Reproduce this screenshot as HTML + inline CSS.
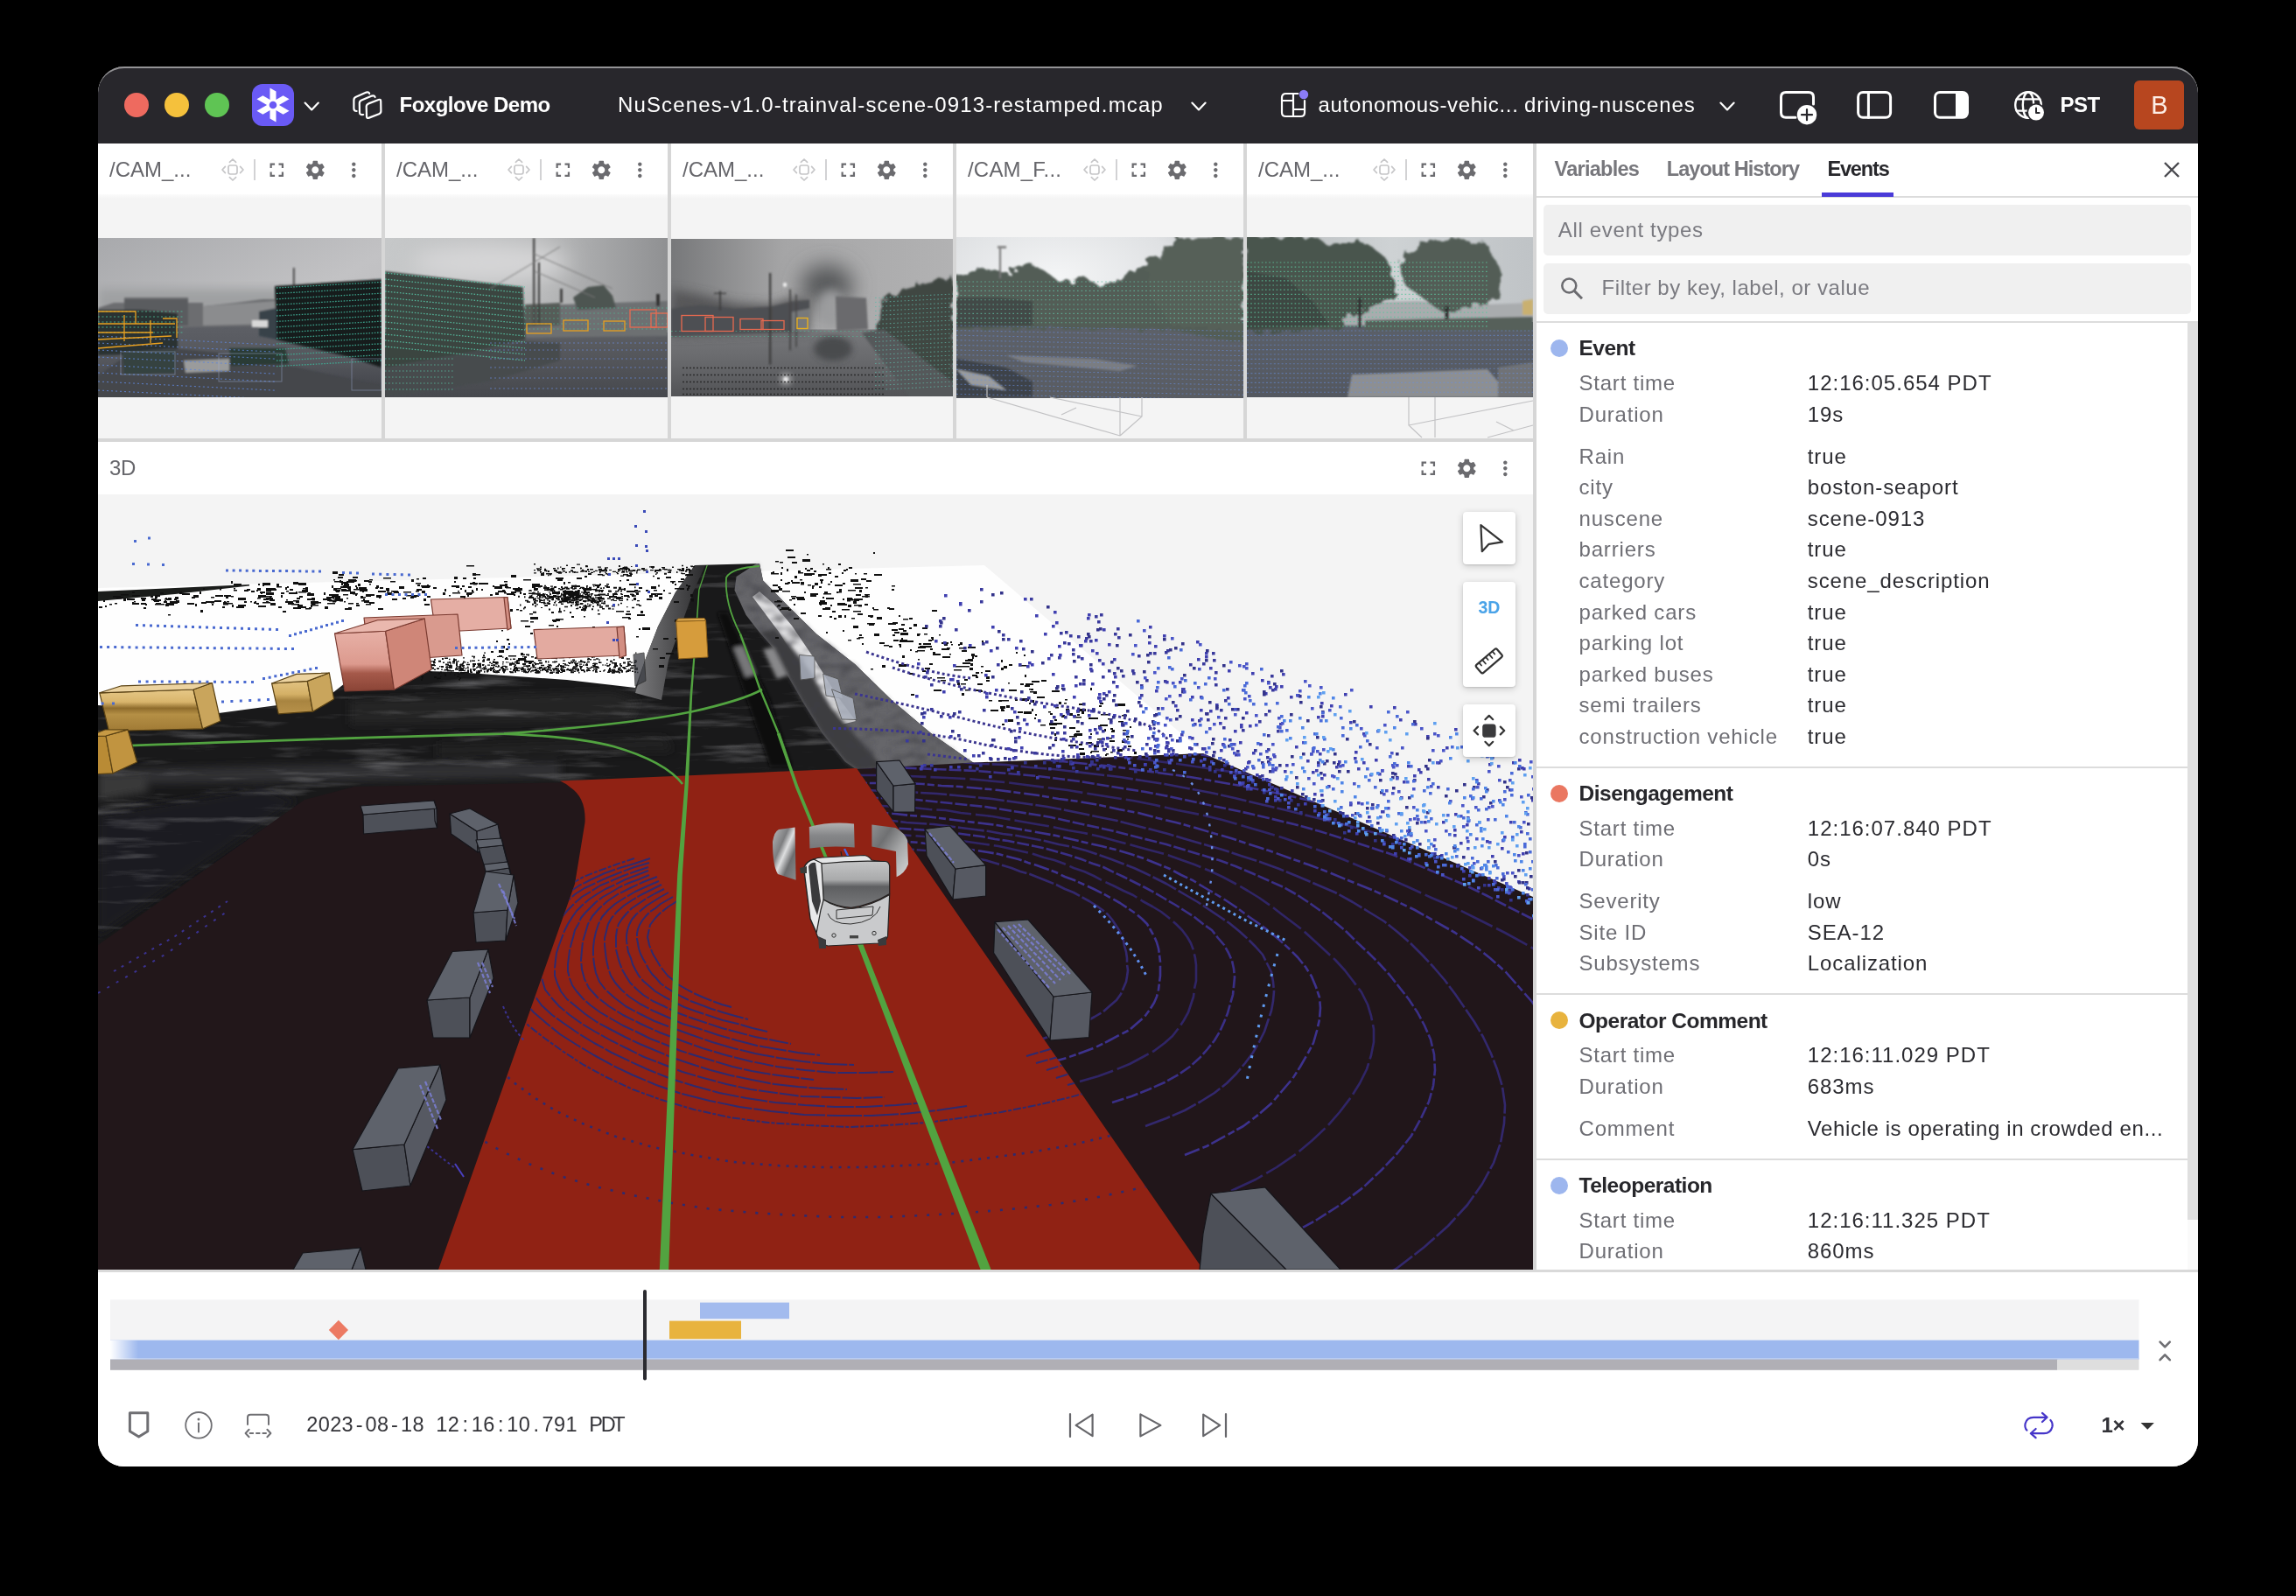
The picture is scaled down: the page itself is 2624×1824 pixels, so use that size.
<!DOCTYPE html>
<html><head><meta charset="utf-8"><title>Foxglove</title>
<style>
*{box-sizing:border-box;margin:0;padding:0}
html,body{width:2624px;height:1824px;background:#000;overflow:hidden}
body{font-family:"Liberation Sans",sans-serif;position:relative;color:#27272b}
.abs{position:absolute}
.t{position:absolute;white-space:pre;line-height:1}
#win{will-change:transform;position:absolute;left:112px;top:76px;width:2400px;height:1600px;border-radius:30px;background:#fff;overflow:hidden}
#win:after{content:"";position:absolute;left:0;top:0;right:0;height:40px;border-radius:30px 30px 0 0;border-top:2px solid rgba(255,255,255,.5);pointer-events:none}
#tb{position:absolute;left:0;top:0;width:2400px;height:88px;background:#28272c}
svg{position:absolute;overflow:visible}
.w{color:#fff}
.hdr{position:absolute;background:#fff;height:58px}
.hdr:after{content:"";position:absolute;left:0;right:0;top:100%;height:5px;background:linear-gradient(#fbfbfb,#f4f4f4)}
.hdr .t{top:17.5px;font-size:24px;color:#66666b}
.vdiv{position:absolute;background:#d6d6d6}
.k{color:#6e6e74}.v{color:#2b2b30}
.row{position:absolute;left:0;font-size:24px;white-space:pre;line-height:1}
.mono i{display:inline-block;width:13.48px;text-align:center;font-style:normal}
</style></head><body>
<div id="win">
<!-- TITLE BAR (win-relative coords: x-112, y-76) -->
<div id="tb">
 <div class="abs" style="left:30px;top:30px;width:28px;height:28px;border-radius:50%;background:#ee6a5f"></div>
 <div class="abs" style="left:76px;top:30px;width:28px;height:28px;border-radius:50%;background:#f5c13c"></div>
 <div class="abs" style="left:122px;top:30px;width:28px;height:28px;border-radius:50%;background:#5fc454"></div>
 <!-- logo -->
 <div class="abs" style="left:176px;top:20px;width:48px;height:48px;border-radius:12px;background:#6a5af5"></div>
 <svg style="left:176px;top:20px" width="48" height="48" viewBox="-24 -24 48 48">
  <g fill="#fff">
   <polygon id="arm" points="-3.5,-19.4 3.5,-15.4 3.5,-2 -3.5,-2"/>
   <use href="#arm" transform="rotate(180)"/><use href="#arm" transform="rotate(300)"/><use href="#arm" transform="rotate(120)"/>
   <use href="#arm" transform="scale(-1,1) rotate(300)"/><use href="#arm" transform="scale(-1,1) rotate(120)"/>
   <circle r="7"/>
  </g>
  <circle r="4.3" fill="#6a5af5"/>
 </svg>
 <svg style="left:0;top:0" width="2400" height="88" viewBox="112 76 2400 88" fill="none" stroke="#fff" stroke-width="2.2" stroke-linecap="round" stroke-linejoin="round">
  <!-- chevrons -->
  <polyline points="348.6,117.6 356.2,125.4 363.8,117.6"/>
  <polyline points="1362.4,117.6 1370,125.4 1377.6,117.6"/>
  <polyline points="1966.4,117.6 1974,125.4 1981.6,117.6"/>
  <!-- stack icon -->
  <path d="M421.2,118.4 L432.6,114 Q435.2,113 435.2,115.8 L435.4,127 Q435.4,129.3 433.2,130.2 L421.8,134.6 Q419,135.6 419,133 L418.7,121.8 Q418.7,119.4 421.2,118.4 Z"/>
  <path d="M415.2,131 Q411,131.6 411,128.4 L410.8,118.2 Q410.8,115.6 413.2,114.6 L425,109.6 Q427.8,108.6 428.6,111"/>
  <path d="M407.6,127 Q404.4,127 404.4,124 L404.4,114.4 Q404.4,111.8 406.8,110.8 L418.6,105.6 Q421.4,104.6 422.2,107"/>
  <!-- layout icon -->
  <path d="M1483.4,107 L1469.6,107 Q1465,107 1465,111.6 L1465,128.4 Q1465,133 1469.6,133 L1486.4,133 Q1491,133 1491,128.4 L1491,115"/>
  <path d="M1478,107 V133 M1465,115 H1478 M1478,125 H1491"/>
  <circle cx="1490" cy="108" r="5.2" fill="#8b7cf8" stroke="none"/>
  <!-- add panel -->
  <path d="M2052,134.2 L2041,134.2 Q2035.5,134.2 2035.5,128.7 L2035.5,111 Q2035.5,105.5 2041,105.5 L2067,105.5 Q2072.5,105.5 2072.5,111 L2072.5,119" stroke-width="3"/>
  <circle cx="2065" cy="131.2" r="11.2" fill="#fff" stroke="none"/>
  <path d="M2059,131.2 H2071 M2065,125.2 V137.2" stroke="#28272c" stroke-width="2.2"/>
  <!-- left sidebar -->
  <rect x="2123.6" y="105.5" width="37" height="28.7" rx="5.5" stroke-width="3"/>
  <path d="M2135.4,105.5 V134.2" stroke-width="3"/>
  <!-- right sidebar -->
  <rect x="2211.5" y="105.5" width="37" height="28.7" rx="5.5" stroke-width="3"/>
  <path d="M2235,105 H2243 Q2249,105 2249,111 V128.6 Q2249,134.6 2243,134.6 H2235 Z" fill="#fff" stroke="none"/>
  <!-- globe -->
  <g stroke-width="2.4">
  <circle cx="2318" cy="120" r="14.8"/>
  <ellipse cx="2318" cy="120" rx="6.2" ry="14.8"/>
  <path d="M2304.6,113.4 H2331.4 M2304.6,126.6 H2331.4"/>
  </g>
  <circle cx="2327" cy="128.6" r="10.6" fill="#28272c" stroke="none"/>
  <circle cx="2327" cy="128.6" r="9" fill="#fff" stroke="none"/>
  <path d="M2327,123.6 V129 H2330.6" stroke="#28272c" stroke-width="2"/>
 </svg>
 <div class="t w" style="left:344.5px;top:16.5px;font-size:24px;font-weight:700;letter-spacing:-.5px;top:31.5px">Foxglove Demo</div>
 <div class="t w" style="left:594px;top:31.5px;font-size:24px;letter-spacing:1.13px">NuScenes-v1.0-trainval-scene-0913-restamped.mcap</div>
 <div class="t w" style="left:1394.5px;top:31.5px;font-size:24px;letter-spacing:.68px">autonomous-vehic...</div>
 <div class="t w" style="left:1630px;top:31.5px;font-size:24px;letter-spacing:.88px">driving-nuscenes</div>
 <div class="t w" style="left:2242.6px;top:31.5px;font-size:24px;font-weight:700;letter-spacing:-.5px">PST</div>
 <div class="abs" style="left:2327px;top:16px;width:57px;height:56px;border-radius:6px;background:#b7461f"></div>
 <div class="t" style="left:2346.2px;top:30px;font-size:29px;color:#fdeee6">B</div>
</div>
<!-- PANEL HEADERS -->
<div class="abs" style="left:0px;top:88px;width:324px;height:337px;background:#f4f4f4"></div>
<div class="hdr" style="left:0px;top:88px;width:324px"><div class="t" style="left:13px;letter-spacing:0px">/CAM_...</div></div>
<svg style="left:141px;top:105px" width="26" height="26" viewBox="-13 -13 26 26" fill="none" stroke="#c6c6c8" stroke-width="1.7" stroke-linecap="round" stroke-linejoin="round"><rect x="-5" y="-5" width="10" height="10" rx="2.2"/><polyline points="-8.6,-3.6 -12,0 -8.6,3.6"/><polyline points="8.6,-3.6 12,0 8.6,3.6"/><polyline points="-3.6,-8.6 0,-12 3.6,-8.6"/><polyline points="-3.6,8.6 0,12 3.6,8.6"/></svg>
<div class="abs" style="left:178px;top:106px;width:2px;height:24px;background:#d2d2d4"></div>
<svg style="left:190.7px;top:104.7px" width="26.6" height="26.6" viewBox="0 0 24 24"><path fill="#6b6b6f" d="M7 14H5v5h5v-2H7v-3zm-2-4h2V7h3V5H5v5zm12 7h-3v2h5v-5h-2v3zM14 5v2h3v3h2V5h-5z"/></svg>
<svg style="left:234.7px;top:104.7px" width="26.6" height="26.6" viewBox="0 0 24 24"><path fill="#6b6b6f" d="M19.14 12.94c.04-.3.06-.61.06-.94 0-.32-.02-.64-.07-.94l2.03-1.58c.18-.14.23-.41.12-.61l-1.92-3.32c-.12-.22-.37-.29-.59-.22l-2.39.96c-.5-.38-1.03-.7-1.62-.94l-.36-2.54c-.04-.24-.24-.41-.48-.41h-3.84c-.24 0-.43.17-.47.41l-.36 2.54c-.59.24-1.13.57-1.62.94l-2.39-.96c-.22-.08-.47 0-.59.22L2.74 8.87c-.12.21-.08.47.12.61l2.03 1.58c-.05.3-.09.63-.09.94s.02.64.07.94l-2.03 1.58c-.18.14-.23.41-.12.61l1.92 3.32c.12.22.37.29.59.22l2.39-.96c.5.38 1.03.7 1.62.94l.36 2.54c.05.24.24.41.48.41h3.84c.24 0 .44-.17.47-.41l.36-2.54c.59-.24 1.13-.56 1.62-.94l2.39.96c.22.08.47 0 .59-.22l1.92-3.32c.12-.22.07-.47-.12-.61l-2.01-1.58zM12 15.6c-1.98 0-3.6-1.62-3.6-3.6s1.62-3.6 3.6-3.6 3.6 1.62 3.6 3.6-1.62 3.6-3.6 3.6z"/></svg>
<svg style="left:278.7px;top:104.7px" width="26.6" height="26.6" viewBox="0 0 24 24"><path fill="#6b6b6f" d="M12 8c1.1 0 2-.9 2-2s-.9-2-2-2-2 .9-2 2 .9 2 2 2zm0 2c-1.1 0-2 .9-2 2s.9 2 2 2 2-.9 2-2-.9-2-2-2zm0 6c-1.1 0-2 .9-2 2s.9 2 2 2 2-.9 2-2-.9-2-2-2z"/></svg>
<div class="abs" style="left:328px;top:88px;width:323px;height:337px;background:#f4f4f4"></div>
<div class="hdr" style="left:328px;top:88px;width:323px"><div class="t" style="left:13px;letter-spacing:0px">/CAM_...</div></div>
<svg style="left:468px;top:105px" width="26" height="26" viewBox="-13 -13 26 26" fill="none" stroke="#c6c6c8" stroke-width="1.7" stroke-linecap="round" stroke-linejoin="round"><rect x="-5" y="-5" width="10" height="10" rx="2.2"/><polyline points="-8.6,-3.6 -12,0 -8.6,3.6"/><polyline points="8.6,-3.6 12,0 8.6,3.6"/><polyline points="-3.6,-8.6 0,-12 3.6,-8.6"/><polyline points="-3.6,8.6 0,12 3.6,8.6"/></svg>
<div class="abs" style="left:505px;top:106px;width:2px;height:24px;background:#d2d2d4"></div>
<svg style="left:517.7px;top:104.7px" width="26.6" height="26.6" viewBox="0 0 24 24"><path fill="#6b6b6f" d="M7 14H5v5h5v-2H7v-3zm-2-4h2V7h3V5H5v5zm12 7h-3v2h5v-5h-2v3zM14 5v2h3v3h2V5h-5z"/></svg>
<svg style="left:561.7px;top:104.7px" width="26.6" height="26.6" viewBox="0 0 24 24"><path fill="#6b6b6f" d="M19.14 12.94c.04-.3.06-.61.06-.94 0-.32-.02-.64-.07-.94l2.03-1.58c.18-.14.23-.41.12-.61l-1.92-3.32c-.12-.22-.37-.29-.59-.22l-2.39.96c-.5-.38-1.03-.7-1.62-.94l-.36-2.54c-.04-.24-.24-.41-.48-.41h-3.84c-.24 0-.43.17-.47.41l-.36 2.54c-.59.24-1.13.57-1.62.94l-2.39-.96c-.22-.08-.47 0-.59.22L2.74 8.87c-.12.21-.08.47.12.61l2.03 1.58c-.05.3-.09.63-.09.94s.02.64.07.94l-2.03 1.58c-.18.14-.23.41-.12.61l1.92 3.32c.12.22.37.29.59.22l2.39-.96c.5.38 1.03.7 1.62.94l.36 2.54c.05.24.24.41.48.41h3.84c.24 0 .44-.17.47-.41l.36-2.54c.59-.24 1.13-.56 1.62-.94l2.39.96c.22.08.47 0 .59-.22l1.92-3.32c.12-.22.07-.47-.12-.61l-2.01-1.58zM12 15.6c-1.98 0-3.6-1.62-3.6-3.6s1.62-3.6 3.6-3.6 3.6 1.62 3.6 3.6-1.62 3.6-3.6 3.6z"/></svg>
<svg style="left:605.7px;top:104.7px" width="26.6" height="26.6" viewBox="0 0 24 24"><path fill="#6b6b6f" d="M12 8c1.1 0 2-.9 2-2s-.9-2-2-2-2 .9-2 2 .9 2 2 2zm0 2c-1.1 0-2 .9-2 2s.9 2 2 2 2-.9 2-2-.9-2-2-2zm0 6c-1.1 0-2 .9-2 2s.9 2 2 2 2-.9 2-2-.9-2-2-2z"/></svg>
<div class="abs" style="left:655px;top:88px;width:322px;height:337px;background:#f4f4f4"></div>
<div class="hdr" style="left:655px;top:88px;width:322px"><div class="t" style="left:13px;letter-spacing:0px">/CAM_...</div></div>
<svg style="left:794px;top:105px" width="26" height="26" viewBox="-13 -13 26 26" fill="none" stroke="#c6c6c8" stroke-width="1.7" stroke-linecap="round" stroke-linejoin="round"><rect x="-5" y="-5" width="10" height="10" rx="2.2"/><polyline points="-8.6,-3.6 -12,0 -8.6,3.6"/><polyline points="8.6,-3.6 12,0 8.6,3.6"/><polyline points="-3.6,-8.6 0,-12 3.6,-8.6"/><polyline points="-3.6,8.6 0,12 3.6,8.6"/></svg>
<div class="abs" style="left:831px;top:106px;width:2px;height:24px;background:#d2d2d4"></div>
<svg style="left:843.7px;top:104.7px" width="26.6" height="26.6" viewBox="0 0 24 24"><path fill="#6b6b6f" d="M7 14H5v5h5v-2H7v-3zm-2-4h2V7h3V5H5v5zm12 7h-3v2h5v-5h-2v3zM14 5v2h3v3h2V5h-5z"/></svg>
<svg style="left:887.7px;top:104.7px" width="26.6" height="26.6" viewBox="0 0 24 24"><path fill="#6b6b6f" d="M19.14 12.94c.04-.3.06-.61.06-.94 0-.32-.02-.64-.07-.94l2.03-1.58c.18-.14.23-.41.12-.61l-1.92-3.32c-.12-.22-.37-.29-.59-.22l-2.39.96c-.5-.38-1.03-.7-1.62-.94l-.36-2.54c-.04-.24-.24-.41-.48-.41h-3.84c-.24 0-.43.17-.47.41l-.36 2.54c-.59.24-1.13.57-1.62.94l-2.39-.96c-.22-.08-.47 0-.59.22L2.74 8.87c-.12.21-.08.47.12.61l2.03 1.58c-.05.3-.09.63-.09.94s.02.64.07.94l-2.03 1.58c-.18.14-.23.41-.12.61l1.92 3.32c.12.22.37.29.59.22l2.39-.96c.5.38 1.03.7 1.62.94l.36 2.54c.05.24.24.41.48.41h3.84c.24 0 .44-.17.47-.41l.36-2.54c.59-.24 1.13-.56 1.62-.94l2.39.96c.22.08.47 0 .59-.22l1.92-3.32c.12-.22.07-.47-.12-.61l-2.01-1.58zM12 15.6c-1.98 0-3.6-1.62-3.6-3.6s1.62-3.6 3.6-3.6 3.6 1.62 3.6 3.6-1.62 3.6-3.6 3.6z"/></svg>
<svg style="left:931.7px;top:104.7px" width="26.6" height="26.6" viewBox="0 0 24 24"><path fill="#6b6b6f" d="M12 8c1.1 0 2-.9 2-2s-.9-2-2-2-2 .9-2 2 .9 2 2 2zm0 2c-1.1 0-2 .9-2 2s.9 2 2 2 2-.9 2-2-.9-2-2-2zm0 6c-1.1 0-2 .9-2 2s.9 2 2 2 2-.9 2-2-.9-2-2-2z"/></svg>
<div class="abs" style="left:981px;top:88px;width:328px;height:337px;background:#f4f4f4"></div>
<div class="hdr" style="left:981px;top:88px;width:328px"><div class="t" style="left:13px;letter-spacing:0.2px">/CAM_F...</div></div>
<svg style="left:1126px;top:105px" width="26" height="26" viewBox="-13 -13 26 26" fill="none" stroke="#c6c6c8" stroke-width="1.7" stroke-linecap="round" stroke-linejoin="round"><rect x="-5" y="-5" width="10" height="10" rx="2.2"/><polyline points="-8.6,-3.6 -12,0 -8.6,3.6"/><polyline points="8.6,-3.6 12,0 8.6,3.6"/><polyline points="-3.6,-8.6 0,-12 3.6,-8.6"/><polyline points="-3.6,8.6 0,12 3.6,8.6"/></svg>
<div class="abs" style="left:1163px;top:106px;width:2px;height:24px;background:#d2d2d4"></div>
<svg style="left:1175.7px;top:104.7px" width="26.6" height="26.6" viewBox="0 0 24 24"><path fill="#6b6b6f" d="M7 14H5v5h5v-2H7v-3zm-2-4h2V7h3V5H5v5zm12 7h-3v2h5v-5h-2v3zM14 5v2h3v3h2V5h-5z"/></svg>
<svg style="left:1219.7px;top:104.7px" width="26.6" height="26.6" viewBox="0 0 24 24"><path fill="#6b6b6f" d="M19.14 12.94c.04-.3.06-.61.06-.94 0-.32-.02-.64-.07-.94l2.03-1.58c.18-.14.23-.41.12-.61l-1.92-3.32c-.12-.22-.37-.29-.59-.22l-2.39.96c-.5-.38-1.03-.7-1.62-.94l-.36-2.54c-.04-.24-.24-.41-.48-.41h-3.84c-.24 0-.43.17-.47.41l-.36 2.54c-.59.24-1.13.57-1.62.94l-2.39-.96c-.22-.08-.47 0-.59.22L2.74 8.87c-.12.21-.08.47.12.61l2.03 1.58c-.05.3-.09.63-.09.94s.02.64.07.94l-2.03 1.58c-.18.14-.23.41-.12.61l1.92 3.32c.12.22.37.29.59.22l2.39-.96c.5.38 1.03.7 1.62.94l.36 2.54c.05.24.24.41.48.41h3.84c.24 0 .44-.17.47-.41l.36-2.54c.59-.24 1.13-.56 1.62-.94l2.39.96c.22.08.47 0 .59-.22l1.92-3.32c.12-.22.07-.47-.12-.61l-2.01-1.58zM12 15.6c-1.98 0-3.6-1.62-3.6-3.6s1.62-3.6 3.6-3.6 3.6 1.62 3.6 3.6-1.62 3.6-3.6 3.6z"/></svg>
<svg style="left:1263.7px;top:104.7px" width="26.6" height="26.6" viewBox="0 0 24 24"><path fill="#6b6b6f" d="M12 8c1.1 0 2-.9 2-2s-.9-2-2-2-2 .9-2 2 .9 2 2 2zm0 2c-1.1 0-2 .9-2 2s.9 2 2 2 2-.9 2-2-.9-2-2-2zm0 6c-1.1 0-2 .9-2 2s.9 2 2 2 2-.9 2-2-.9-2-2-2z"/></svg>
<div class="abs" style="left:1313px;top:88px;width:327px;height:337px;background:#f4f4f4"></div>
<div class="hdr" style="left:1313px;top:88px;width:327px"><div class="t" style="left:13px;letter-spacing:0px">/CAM_...</div></div>
<svg style="left:1457px;top:105px" width="26" height="26" viewBox="-13 -13 26 26" fill="none" stroke="#c6c6c8" stroke-width="1.7" stroke-linecap="round" stroke-linejoin="round"><rect x="-5" y="-5" width="10" height="10" rx="2.2"/><polyline points="-8.6,-3.6 -12,0 -8.6,3.6"/><polyline points="8.6,-3.6 12,0 8.6,3.6"/><polyline points="-3.6,-8.6 0,-12 3.6,-8.6"/><polyline points="-3.6,8.6 0,12 3.6,8.6"/></svg>
<div class="abs" style="left:1494px;top:106px;width:2px;height:24px;background:#d2d2d4"></div>
<svg style="left:1506.7px;top:104.7px" width="26.6" height="26.6" viewBox="0 0 24 24"><path fill="#6b6b6f" d="M7 14H5v5h5v-2H7v-3zm-2-4h2V7h3V5H5v5zm12 7h-3v2h5v-5h-2v3zM14 5v2h3v3h2V5h-5z"/></svg>
<svg style="left:1550.7px;top:104.7px" width="26.6" height="26.6" viewBox="0 0 24 24"><path fill="#6b6b6f" d="M19.14 12.94c.04-.3.06-.61.06-.94 0-.32-.02-.64-.07-.94l2.03-1.58c.18-.14.23-.41.12-.61l-1.92-3.32c-.12-.22-.37-.29-.59-.22l-2.39.96c-.5-.38-1.03-.7-1.62-.94l-.36-2.54c-.04-.24-.24-.41-.48-.41h-3.84c-.24 0-.43.17-.47.41l-.36 2.54c-.59.24-1.13.57-1.62.94l-2.39-.96c-.22-.08-.47 0-.59.22L2.74 8.87c-.12.21-.08.47.12.61l2.03 1.58c-.05.3-.09.63-.09.94s.02.64.07.94l-2.03 1.58c-.18.14-.23.41-.12.61l1.92 3.32c.12.22.37.29.59.22l2.39-.96c.5.38 1.03.7 1.62.94l.36 2.54c.05.24.24.41.48.41h3.84c.24 0 .44-.17.47-.41l.36-2.54c.59-.24 1.13-.56 1.62-.94l2.39.96c.22.08.47 0 .59-.22l1.92-3.32c.12-.22.07-.47-.12-.61l-2.01-1.58zM12 15.6c-1.98 0-3.6-1.62-3.6-3.6s1.62-3.6 3.6-3.6 3.6 1.62 3.6 3.6-1.62 3.6-3.6 3.6z"/></svg>
<svg style="left:1594.7px;top:104.7px" width="26.6" height="26.6" viewBox="0 0 24 24"><path fill="#6b6b6f" d="M12 8c1.1 0 2-.9 2-2s-.9-2-2-2-2 .9-2 2 .9 2 2 2zm0 2c-1.1 0-2 .9-2 2s.9 2 2 2 2-.9 2-2-.9-2-2-2zm0 6c-1.1 0-2 .9-2 2s.9 2 2 2 2-.9 2-2-.9-2-2-2z"/></svg>
<div class="vdiv" style="left:324px;top:88px;width:4px;height:337px"></div>
<div class="vdiv" style="left:651px;top:88px;width:4px;height:337px"></div>
<div class="vdiv" style="left:977px;top:88px;width:4px;height:337px"></div>
<div class="vdiv" style="left:1309px;top:88px;width:4px;height:337px"></div>
<div class="vdiv" style="left:0;top:425px;width:1640px;height:4px"></div>
<div class="hdr" style="left:0;top:429px;width:1640px;height:60px"><div class="t" style="left:13px;top:17.5px;letter-spacing:-.3px">3D</div></div>
<svg style="left:1506.7px;top:445.7px" width="26.6" height="26.6" viewBox="0 0 24 24"><path fill="#6b6b6f" d="M7 14H5v5h5v-2H7v-3zm-2-4h2V7h3V5H5v5zm12 7h-3v2h5v-5h-2v3zM14 5v2h3v3h2V5h-5z"/></svg>
<svg style="left:1550.7px;top:445.7px" width="26.6" height="26.6" viewBox="0 0 24 24"><path fill="#6b6b6f" d="M19.14 12.94c.04-.3.06-.61.06-.94 0-.32-.02-.64-.07-.94l2.03-1.58c.18-.14.23-.41.12-.61l-1.92-3.32c-.12-.22-.37-.29-.59-.22l-2.39.96c-.5-.38-1.03-.7-1.62-.94l-.36-2.54c-.04-.24-.24-.41-.48-.41h-3.84c-.24 0-.43.17-.47.41l-.36 2.54c-.59.24-1.13.57-1.62.94l-2.39-.96c-.22-.08-.47 0-.59.22L2.74 8.87c-.12.21-.08.47.12.61l2.03 1.58c-.05.3-.09.63-.09.94s.02.64.07.94l-2.03 1.58c-.18.14-.23.41-.12.61l1.92 3.32c.12.22.37.29.59.22l2.39-.96c.5.38 1.03.7 1.62.94l.36 2.54c.05.24.24.41.48.41h3.84c.24 0 .44-.17.47-.41l.36-2.54c.59-.24 1.13-.56 1.62-.94l2.39.96c.22.08.47 0 .59-.22l1.92-3.32c.12-.22.07-.47-.12-.61l-2.01-1.58zM12 15.6c-1.98 0-3.6-1.62-3.6-3.6s1.62-3.6 3.6-3.6 3.6 1.62 3.6 3.6-1.62 3.6-3.6 3.6z"/></svg>
<svg style="left:1594.7px;top:445.7px" width="26.6" height="26.6" viewBox="0 0 24 24"><path fill="#6b6b6f" d="M12 8c1.1 0 2-.9 2-2s-.9-2-2-2-2 .9-2 2 .9 2 2 2zm0 2c-1.1 0-2 .9-2 2s.9 2 2 2 2-.9 2-2-.9-2-2-2zm0 6c-1.1 0-2 .9-2 2s.9 2 2 2 2-.9 2-2-.9-2-2-2z"/></svg>
<div class="vdiv" style="left:1640px;top:88px;width:4px;height:1289px"></div>
<!-- CAMERA IMAGES (win coords; svg viewBox in src coords) -->
<svg style="left:0;top:0" width="0" height="0"><defs>
<filter id="cb1" x="-10%" y="-10%" width="120%" height="120%"><feGaussianBlur stdDeviation="1.2"/></filter>
<filter id="cb3" x="-20%" y="-20%" width="140%" height="140%"><feGaussianBlur stdDeviation="3"/></filter>
<filter id="cb6" x="-30%" y="-30%" width="160%" height="160%"><feGaussianBlur stdDeviation="6"/></filter>
<filter id="cb12" x="-50%" y="-50%" width="200%" height="200%"><feGaussianBlur stdDeviation="12"/></filter>
<filter id="leaf" x="-10%" y="-10%" width="120%" height="120%"><feTurbulence type="fractalNoise" baseFrequency="0.09" numOctaves="2" seed="4" result="n"/><feDisplacementMap in="SourceGraphic" in2="n" scale="14"/></filter>
</defs></svg>
<svg style="left:0px;top:196px;overflow:hidden" width="324" height="182" viewBox="112 272 324 182">
<defs><linearGradient id="s1" x1="0" y1="0" x2="1" y2="1"><stop offset="0" stop-color="#a8a9ac"/><stop offset=".55" stop-color="#c2c2c4"/><stop offset="1" stop-color="#b4b4b6"/></linearGradient>
<linearGradient id="g1" x1="0" y1="0" x2="0" y2="1"><stop offset="0" stop-color="#5e6066"/><stop offset=".5" stop-color="#54565c"/><stop offset="1" stop-color="#3c3e43"/></linearGradient></defs>
<rect x="112" y="272" width="324" height="182" fill="url(#s1)"/>
<rect x="112" y="330" width="324" height="30" fill="#9fa0a2" filter="url(#cb6)"/>
<rect x="112" y="368" width="324" height="90" fill="url(#g1)"/>
<g filter="url(#cb1)">
<polygon points="112,352 130,346 142,346 142,340 215,340 215,346 232,346 232,350 270,346 300,342 316,342 316,372 112,376" fill="#6c6d70"/>
<polygon points="142,342 215,342 215,372 142,372" fill="#5a5b5e"/>
<polygon points="232,350 316,344 316,370 232,372" fill="#8b8c8e"/>
<polygon points="112,354 160,354 203,358 203,404 112,406" fill="#2c3232"/>
<polygon points="314,327 436,319 436,420 400,408 340,394 316,388" fill="#141c1a"/>
<polygon points="296,356 316,352 316,388 296,384" fill="#39424a"/>
<polygon points="150,402 196,398 262,404 330,418 436,440 436,454 112,454 112,430" fill="#44464b"/>
<polygon points="262,398 326,398 330,416 264,418" fill="#2c3a36"/>
<polygon points="140,402 200,400 200,426 142,428" fill="#36423f"/>
<polygon points="210,412 262,410 262,424 212,426" fill="#9a9b9c"/>
<rect x="288" y="366" width="18" height="8" fill="#d8d8d8"/>
<rect x="335" y="306" width="1.6" height="24" fill="#333"/>
</g><path d="M316,329 L436,322.4" stroke="#3fae96" stroke-width="1.3" stroke-dasharray="1.6,1.6" opacity="0.9" fill="none"/><path d="M316,335.4 L436,328.8" stroke="#3fae96" stroke-width="1.3" stroke-dasharray="1.6,1.6" opacity="0.9" fill="none"/><path d="M316,341.8 L436,335.2" stroke="#3fae96" stroke-width="1.3" stroke-dasharray="1.6,1.6" opacity="0.9" fill="none"/><path d="M316,348.2 L436,341.6" stroke="#3fae96" stroke-width="1.3" stroke-dasharray="1.6,1.6" opacity="0.9" fill="none"/><path d="M316,354.6 L436,348" stroke="#3fae96" stroke-width="1.3" stroke-dasharray="1.6,1.6" opacity="0.9" fill="none"/><path d="M316,361 L436,354.4" stroke="#3fae96" stroke-width="1.3" stroke-dasharray="1.6,1.6" opacity="0.9" fill="none"/><path d="M316,367.4 L436,360.8" stroke="#3fae96" stroke-width="1.3" stroke-dasharray="1.6,1.6" opacity="0.9" fill="none"/><path d="M316,373.8 L436,367.2" stroke="#3fae96" stroke-width="1.3" stroke-dasharray="1.6,1.6" opacity="0.9" fill="none"/><path d="M316,380.2 L436,373.6" stroke="#3fae96" stroke-width="1.3" stroke-dasharray="1.6,1.6" opacity="0.9" fill="none"/><path d="M316,386.6 L436,380" stroke="#3fae96" stroke-width="1.3" stroke-dasharray="1.6,1.6" opacity="0.9" fill="none"/><path d="M316,393 L436,386.4" stroke="#3fae96" stroke-width="1.3" stroke-dasharray="1.6,1.6" opacity="0.9" fill="none"/><path d="M316,399.4 L436,392.8" stroke="#3fae96" stroke-width="1.3" stroke-dasharray="1.6,1.6" opacity="0.9" fill="none"/><path d="M316,405.8 L436,399.2" stroke="#3fae96" stroke-width="1.3" stroke-dasharray="1.6,1.6" opacity="0.9" fill="none"/><path d="M316,412.2 L436,405.6" stroke="#3fae96" stroke-width="1.3" stroke-dasharray="1.6,1.6" opacity="0.9" fill="none"/><path d="M316,418.6 L436,412" stroke="#3fae96" stroke-width="1.3" stroke-dasharray="1.6,1.6" opacity="0.9" fill="none"/><path d="M112,384 L316,394.2" stroke="#5f86d8" stroke-width="1.2" stroke-dasharray="2,3" opacity="0.8" fill="none"/><path d="M112,392 L316,402.2" stroke="#5f86d8" stroke-width="1.2" stroke-dasharray="2,3" opacity="0.8" fill="none"/><path d="M112,400 L316,410.2" stroke="#5f86d8" stroke-width="1.2" stroke-dasharray="2,3" opacity="0.8" fill="none"/><path d="M112,408 L316,418.2" stroke="#5f86d8" stroke-width="1.2" stroke-dasharray="2,3" opacity="0.8" fill="none"/><path d="M112,417 L316,427.2" stroke="#5f86d8" stroke-width="1.2" stroke-dasharray="2,3" opacity="0.8" fill="none"/><path d="M112,426 L316,436.2" stroke="#5f86d8" stroke-width="1.2" stroke-dasharray="2,3" opacity="0.8" fill="none"/><path d="M112,436 L316,446.2" stroke="#5f86d8" stroke-width="1.2" stroke-dasharray="2,3" opacity="0.8" fill="none"/><path d="M112,446 L316,456.2" stroke="#5f86d8" stroke-width="1.2" stroke-dasharray="2,3" opacity="0.8" fill="none"/><path d="M112,356 L210,356" stroke="#4fbf9a" stroke-width="1.2" stroke-dasharray="2,2.5" opacity="0.8" fill="none"/><path d="M112,362 L210,362" stroke="#4fbf9a" stroke-width="1.2" stroke-dasharray="2,2.5" opacity="0.8" fill="none"/><path d="M112,368 L210,368" stroke="#4fbf9a" stroke-width="1.2" stroke-dasharray="2,2.5" opacity="0.8" fill="none"/><path d="M112,374 L210,374" stroke="#4fbf9a" stroke-width="1.2" stroke-dasharray="2,2.5" opacity="0.8" fill="none"/><path d="M112,380 L210,380" stroke="#4fbf9a" stroke-width="1.2" stroke-dasharray="2,2.5" opacity="0.8" fill="none"/><g fill="none" stroke="#e8a020" stroke-width="1.3"><path d="M112,356 H155 V370 M112,370 H200 M142,360 V390 M112,380 H175 M172,366 V392 M186,364 H202 V386 M112,388 L196,384 M112,398 L186,392"/></g><g fill="none" stroke="#9fb0d8" stroke-width="1" opacity=".45"><rect x="138" y="402" width="62" height="26"/><rect x="250" y="404" width="72" height="32"/><rect x="402" y="410" width="34" height="36"/></g>
</svg>
<svg style="left:328px;top:196px;overflow:hidden" width="323" height="182" viewBox="440 272 323 182">
<defs><linearGradient id="s2" x1="0" y1="0" x2="1" y2="0"><stop offset="0" stop-color="#c6c8c9"/><stop offset=".55" stop-color="#b9babb"/><stop offset="1" stop-color="#8f9092"/></linearGradient>
<linearGradient id="g2" x1="0" y1="0" x2="0" y2="1"><stop offset="0" stop-color="#5c5e63"/><stop offset="1" stop-color="#45474c"/></linearGradient></defs>
<rect x="440" y="272" width="323" height="182" fill="url(#s2)"/>
<ellipse cx="560" cy="300" rx="90" ry="22" fill="#d6d6d7" filter="url(#cb12)"/>
<rect x="440" y="380" width="323" height="80" fill="url(#g2)"/>
<g filter="url(#cb1)">
<polygon points="598,352 640,348 700,346 763,344 763,384 598,386" fill="#6d7072"/>
<polygon points="655,340 672,328 690,326 700,338 704,352 660,354" fill="#4d5551"/>
<polygon points="600,348 640,346 640,372 600,374" fill="#565b58"/>
<polygon points="440,310 597.6,328 600.6,388 540,402 440,420" fill="#3a4440"/>
<polygon points="440,420 540,402 600,390 640,392 640,412 560,436 440,454" fill="#464c4e"/>
<rect x="609" y="272" width="2.4" height="100" fill="#4a4a4a"/><rect x="615" y="300" width="2" height="70" fill="#3a3a3a"/>
<path d="M560,330 L640,282 M610,290 L700,330 M611,310 L680,340" stroke="#777" stroke-width="1" fill="none"/>
<rect x="640" y="330" width="3" height="16" fill="#444"/><rect x="750" y="336" width="4" height="14" fill="#333"/>
</g><path d="M440,312 L600,328" stroke="#58c8a8" stroke-width="1.3" stroke-dasharray="1.6,1.8" opacity="0.85" fill="none"/><path d="M440,319 L600,335" stroke="#58c8a8" stroke-width="1.3" stroke-dasharray="1.6,1.8" opacity="0.85" fill="none"/><path d="M440,326 L600,342" stroke="#58c8a8" stroke-width="1.3" stroke-dasharray="1.6,1.8" opacity="0.85" fill="none"/><path d="M440,333 L600,349" stroke="#58c8a8" stroke-width="1.3" stroke-dasharray="1.6,1.8" opacity="0.85" fill="none"/><path d="M440,340 L600,356" stroke="#58c8a8" stroke-width="1.3" stroke-dasharray="1.6,1.8" opacity="0.85" fill="none"/><path d="M440,347 L600,363" stroke="#58c8a8" stroke-width="1.3" stroke-dasharray="1.6,1.8" opacity="0.85" fill="none"/><path d="M440,354 L600,370" stroke="#58c8a8" stroke-width="1.3" stroke-dasharray="1.6,1.8" opacity="0.85" fill="none"/><path d="M440,361 L600,377" stroke="#58c8a8" stroke-width="1.3" stroke-dasharray="1.6,1.8" opacity="0.85" fill="none"/><path d="M440,368 L600,384" stroke="#58c8a8" stroke-width="1.3" stroke-dasharray="1.6,1.8" opacity="0.85" fill="none"/><path d="M440,375 L600,391" stroke="#58c8a8" stroke-width="1.3" stroke-dasharray="1.6,1.8" opacity="0.85" fill="none"/><path d="M440,382 L600,398" stroke="#58c8a8" stroke-width="1.3" stroke-dasharray="1.6,1.8" opacity="0.85" fill="none"/><path d="M440,389 L600,405" stroke="#58c8a8" stroke-width="1.3" stroke-dasharray="1.6,1.8" opacity="0.85" fill="none"/><path d="M440,396 L600,412" stroke="#58c8a8" stroke-width="1.3" stroke-dasharray="1.6,1.8" opacity="0.85" fill="none"/><path d="M440,410 L520,410" stroke="#58c8a8" stroke-width="1.2" stroke-dasharray="1.6,2.4" opacity="0.7" fill="none"/><path d="M440,417 L520,417" stroke="#58c8a8" stroke-width="1.2" stroke-dasharray="1.6,2.4" opacity="0.7" fill="none"/><path d="M440,424 L520,424" stroke="#58c8a8" stroke-width="1.2" stroke-dasharray="1.6,2.4" opacity="0.7" fill="none"/><path d="M440,431 L520,431" stroke="#58c8a8" stroke-width="1.2" stroke-dasharray="1.6,2.4" opacity="0.7" fill="none"/><path d="M440,438 L520,438" stroke="#58c8a8" stroke-width="1.2" stroke-dasharray="1.6,2.4" opacity="0.7" fill="none"/><path d="M440,445 L520,445" stroke="#58c8a8" stroke-width="1.2" stroke-dasharray="1.6,2.4" opacity="0.7" fill="none"/><path d="M600,352 L763,352" stroke="#4fbf9a" stroke-width="1.1" stroke-dasharray="1.6,3" opacity="0.7" fill="none"/><path d="M600,358 L763,358" stroke="#4fbf9a" stroke-width="1.1" stroke-dasharray="1.6,3" opacity="0.7" fill="none"/><path d="M600,364 L763,364" stroke="#4fbf9a" stroke-width="1.1" stroke-dasharray="1.6,3" opacity="0.7" fill="none"/><path d="M600,370 L763,370" stroke="#4fbf9a" stroke-width="1.1" stroke-dasharray="1.6,3" opacity="0.7" fill="none"/><path d="M600,376 L763,376" stroke="#4fbf9a" stroke-width="1.1" stroke-dasharray="1.6,3" opacity="0.7" fill="none"/><path d="M560,392 L763,392" stroke="#6a8ad8" stroke-width="1.2" stroke-dasharray="2,3" opacity="0.7" fill="none"/><path d="M560,400 L763,400" stroke="#6a8ad8" stroke-width="1.2" stroke-dasharray="2,3" opacity="0.7" fill="none"/><path d="M560,410 L763,410" stroke="#6a8ad8" stroke-width="1.2" stroke-dasharray="2,3" opacity="0.7" fill="none"/><path d="M560,420 L763,420" stroke="#6a8ad8" stroke-width="1.2" stroke-dasharray="2,3" opacity="0.7" fill="none"/><path d="M560,432 L763,432" stroke="#6a8ad8" stroke-width="1.2" stroke-dasharray="2,3" opacity="0.7" fill="none"/><path d="M560,444 L763,444" stroke="#6a8ad8" stroke-width="1.2" stroke-dasharray="2,3" opacity="0.7" fill="none"/><g fill="none" stroke="#e8a020" stroke-width="1.3"><rect x="602" y="370" width="28" height="11"/><rect x="644" y="366" width="28" height="12"/><rect x="690" y="367" width="24" height="11"/></g><g fill="none" stroke="#e86a50" stroke-width="1.3"><rect x="720" y="354" width="30" height="20"/><rect x="744" y="358" width="19" height="16"/></g>
</svg>
<svg style="left:655px;top:196.5px;overflow:hidden" width="322" height="180.9" viewBox="767 272.5 322 180.9">
<defs><linearGradient id="s3" x1="0" y1="0" x2="1" y2="0"><stop offset="0" stop-color="#77787a"/><stop offset=".4" stop-color="#a5a5a6"/><stop offset="1" stop-color="#b2b2b3"/></linearGradient>
<linearGradient id="g3" x1="0" y1="0" x2="0" y2="1"><stop offset="0" stop-color="#77787b"/><stop offset=".5" stop-color="#66676a"/><stop offset="1" stop-color="#505154"/></linearGradient></defs>
<rect x="767" y="272" width="322" height="182" fill="url(#s3)"/>
<rect x="767" y="376" width="322" height="80" fill="url(#g3)"/>
<ellipse cx="945" cy="326" rx="30" ry="24" fill="#555658" filter="url(#cb12)"/>
<ellipse cx="950" cy="352" rx="16" ry="22" fill="#9b9c9e" filter="url(#cb6)"/>
<g filter="url(#cb1)">
<polygon points="767,330 800,336 840,346 880,348 905,340 925,342 925,378 767,384" fill="#565759" filter="url(#cb6)"/><polygon points="767,352 800,348 840,352 880,350 905,344 925,342 925,378 767,384" fill="#4e4f52"/>
<polygon points="955,338 990,340 992,376 956,378" fill="#6a6b6d"/>
<polygon points="905,356 925,352 925,378 905,378" fill="#77797b"/>
<rect x="879" y="312" width="2.2" height="104" fill="#3a3a3a"/><rect x="902" y="330" width="1.8" height="70" fill="#444"/><rect x="909" y="336" width="1.6" height="60" fill="#444"/>
<rect x="822" y="332" width="1.8" height="22" fill="#3a3a3a"/><rect x="816" y="334" width="14" height="1.4" fill="#3a3a3a"/>
<circle cx="897" cy="325" r="2.4" fill="#eee"/>
<ellipse cx="952" cy="398" rx="22" ry="14" fill="#4a4b4e" filter="url(#cb3)"/>
<polygon points="1006,346 1030,330 1060,322 1089,316 1089,454 1060,454 1020,420 1004,380" fill="#3f4743" filter="url(#leaf)"/>
<polygon points="985,380 1010,376 1089,436 1089,454 1040,454" fill="#55585a"/>
<circle cx="898" cy="433" r="3" fill="#f4f4f4"/><circle cx="898" cy="433" r="7" fill="#ddd" opacity=".5" filter="url(#cb3)"/>
</g><path d="M1000,340 L1089,335.55" stroke="#5fb8a8" stroke-width="1.1" stroke-dasharray="1.6,2.6" opacity="0.7" fill="none"/><path d="M1000,345 L1089,340.55" stroke="#5fb8a8" stroke-width="1.1" stroke-dasharray="1.6,2.6" opacity="0.7" fill="none"/><path d="M1000,350 L1089,345.55" stroke="#5fb8a8" stroke-width="1.1" stroke-dasharray="1.6,2.6" opacity="0.7" fill="none"/><path d="M1000,355 L1089,350.55" stroke="#5fb8a8" stroke-width="1.1" stroke-dasharray="1.6,2.6" opacity="0.7" fill="none"/><path d="M1000,360 L1089,355.55" stroke="#5fb8a8" stroke-width="1.1" stroke-dasharray="1.6,2.6" opacity="0.7" fill="none"/><path d="M1000,365 L1089,360.55" stroke="#5fb8a8" stroke-width="1.1" stroke-dasharray="1.6,2.6" opacity="0.7" fill="none"/><path d="M1000,370 L1089,365.55" stroke="#5fb8a8" stroke-width="1.1" stroke-dasharray="1.6,2.6" opacity="0.7" fill="none"/><path d="M1000,375 L1089,370.55" stroke="#5fb8a8" stroke-width="1.1" stroke-dasharray="1.6,2.6" opacity="0.7" fill="none"/><path d="M1000,380 L1089,375.55" stroke="#5fb8a8" stroke-width="1.1" stroke-dasharray="1.6,2.6" opacity="0.7" fill="none"/><path d="M1000,385 L1089,380.55" stroke="#5fb8a8" stroke-width="1.1" stroke-dasharray="1.6,2.6" opacity="0.7" fill="none"/><path d="M1000,390 L1089,385.55" stroke="#5fb8a8" stroke-width="1.1" stroke-dasharray="1.6,2.6" opacity="0.7" fill="none"/><path d="M1000,395 L1089,390.55" stroke="#5fb8a8" stroke-width="1.1" stroke-dasharray="1.6,2.6" opacity="0.7" fill="none"/><path d="M1000,400 L1089,395.55" stroke="#5fb8a8" stroke-width="1.1" stroke-dasharray="1.6,2.6" opacity="0.7" fill="none"/><path d="M1000,405 L1089,400.55" stroke="#5fb8a8" stroke-width="1.1" stroke-dasharray="1.6,2.6" opacity="0.7" fill="none"/><path d="M1000,410 L1089,405.55" stroke="#5fb8a8" stroke-width="1.1" stroke-dasharray="1.6,2.6" opacity="0.7" fill="none"/><path d="M1000,415 L1089,410.55" stroke="#5fb8a8" stroke-width="1.1" stroke-dasharray="1.6,2.6" opacity="0.7" fill="none"/><path d="M1000,420 L1089,415.55" stroke="#5fb8a8" stroke-width="1.1" stroke-dasharray="1.6,2.6" opacity="0.7" fill="none"/><path d="M1000,425 L1089,420.55" stroke="#5fb8a8" stroke-width="1.1" stroke-dasharray="1.6,2.6" opacity="0.7" fill="none"/><path d="M1000,430 L1089,425.55" stroke="#5fb8a8" stroke-width="1.1" stroke-dasharray="1.6,2.6" opacity="0.7" fill="none"/><path d="M1000,435 L1089,430.55" stroke="#5fb8a8" stroke-width="1.1" stroke-dasharray="1.6,2.6" opacity="0.7" fill="none"/><path d="M1000,440 L1089,435.55" stroke="#5fb8a8" stroke-width="1.1" stroke-dasharray="1.6,2.6" opacity="0.7" fill="none"/><path d="M1000,445 L1089,440.55" stroke="#5fb8a8" stroke-width="1.1" stroke-dasharray="1.6,2.6" opacity="0.7" fill="none"/><path d="M767,378 L1000,378" stroke="#4fbf9a" stroke-width="1.1" stroke-dasharray="1.6,3" opacity="0.6" fill="none"/><path d="M767,384 L1000,384" stroke="#4fbf9a" stroke-width="1.1" stroke-dasharray="1.6,3" opacity="0.6" fill="none"/><path d="M780,420 L1010,420" stroke="#222" stroke-width="1.4" stroke-dasharray="2,2" opacity="0.8" fill="none"/><path d="M780,428 L1010,428" stroke="#222" stroke-width="1.4" stroke-dasharray="2,2" opacity="0.8" fill="none"/><path d="M780,436 L1010,436" stroke="#222" stroke-width="1.4" stroke-dasharray="2,2" opacity="0.8" fill="none"/><path d="M780,444 L1010,444" stroke="#222" stroke-width="1.4" stroke-dasharray="2,2" opacity="0.8" fill="none"/><path d="M780,450 L1010,450" stroke="#222" stroke-width="1.4" stroke-dasharray="2,2" opacity="0.8" fill="none"/><g fill="none" stroke="#e86a50" stroke-width="1.3"><rect x="779" y="360" width="36" height="18"/><rect x="806" y="362" width="32" height="16"/><rect x="846" y="364" width="26" height="12"/><rect x="870" y="366" width="26" height="10"/></g><rect x="911" y="363" width="12" height="12" fill="none" stroke="#e8b020" stroke-width="1.4"/>
</svg>
<svg style="left:981px;top:195px;overflow:hidden" width="328" height="183.7" viewBox="1093 271 328 183.7">
<defs><radialGradient id="s4" cx=".35" cy=".25" r=".7"><stop offset="0" stop-color="#f4f5f6"/><stop offset=".6" stop-color="#dfe1e3"/><stop offset="1" stop-color="#b9bcc0"/></radialGradient>
<linearGradient id="g4" x1="0" y1="0" x2="0" y2="1"><stop offset="0" stop-color="#5d6169"/><stop offset="1" stop-color="#595c62"/></linearGradient></defs>
<rect x="1093" y="271" width="328" height="184" fill="url(#s4)"/>
<rect x="1093" y="366" width="328" height="90" fill="url(#g4)"/>
<g filter="url(#cb1)">
<polygon points="1093,318 1120,306 1150,312 1180,300 1210,322 1240,318 1262,328 1290,312 1310,300 1330,288 1345,271 1421,271 1421,392 1330,376 1093,376" fill="#535d57" filter="url(#leaf)"/>
<polygon points="1310,304 1336,284 1356,271 1421,271 1421,380 1340,372 1316,340" fill="#566059" filter="url(#leaf)"/>
<polygon points="1093,340 1140,340 1180,344 1180,372 1093,374" fill="#424a46"/>
<rect x="1142" y="282" width="2" height="36" fill="#777"/><rect x="1140" y="281" width="10" height="3" fill="#888"/>
<polygon points="1093,410 1150,420 1180,436 1180,454 1093,454" fill="#3e4248"/>
<polygon points="1150,406 1250,410 1300,418 1280,424 1170,414" fill="#7a7d82"/>
<polygon points="1093,422 1130,430 1150,446 1110,440" fill="#9a9c9f"/>
</g><path d="M1093,322 L1421,322" stroke="#62c0a4" stroke-width="1.1" stroke-dasharray="1.6,3" opacity="0.75" fill="none"/><path d="M1093,327.2 L1421,327.2" stroke="#62c0a4" stroke-width="1.1" stroke-dasharray="1.6,3" opacity="0.75" fill="none"/><path d="M1093,332.4 L1421,332.4" stroke="#62c0a4" stroke-width="1.1" stroke-dasharray="1.6,3" opacity="0.75" fill="none"/><path d="M1093,337.6 L1421,337.6" stroke="#62c0a4" stroke-width="1.1" stroke-dasharray="1.6,3" opacity="0.75" fill="none"/><path d="M1093,342.8 L1421,342.8" stroke="#62c0a4" stroke-width="1.1" stroke-dasharray="1.6,3" opacity="0.75" fill="none"/><path d="M1093,348 L1421,348" stroke="#62c0a4" stroke-width="1.1" stroke-dasharray="1.6,3" opacity="0.75" fill="none"/><path d="M1093,353.2 L1421,353.2" stroke="#62c0a4" stroke-width="1.1" stroke-dasharray="1.6,3" opacity="0.75" fill="none"/><path d="M1093,358.4 L1421,358.4" stroke="#62c0a4" stroke-width="1.1" stroke-dasharray="1.6,3" opacity="0.75" fill="none"/><path d="M1093,363.6 L1421,363.6" stroke="#62c0a4" stroke-width="1.1" stroke-dasharray="1.6,3" opacity="0.75" fill="none"/><path d="M1093,368.8 L1421,368.8" stroke="#62c0a4" stroke-width="1.1" stroke-dasharray="1.6,3" opacity="0.75" fill="none"/><path d="M1093,372 L1421,378.56" stroke="#6a8fe0" stroke-width="1.1" stroke-dasharray="2,2.6" opacity="0.55" fill="none"/><path d="M1093,377.6 L1421,384.16" stroke="#6a8fe0" stroke-width="1.1" stroke-dasharray="2,2.6" opacity="0.55" fill="none"/><path d="M1093,383.2 L1421,389.76" stroke="#6a8fe0" stroke-width="1.1" stroke-dasharray="2,2.6" opacity="0.55" fill="none"/><path d="M1093,388.8 L1421,395.36" stroke="#6a8fe0" stroke-width="1.1" stroke-dasharray="2,2.6" opacity="0.55" fill="none"/><path d="M1093,394.4 L1421,400.96" stroke="#6a8fe0" stroke-width="1.1" stroke-dasharray="2,2.6" opacity="0.55" fill="none"/><path d="M1093,400 L1421,406.56" stroke="#6a8fe0" stroke-width="1.1" stroke-dasharray="2,2.6" opacity="0.55" fill="none"/><path d="M1093,405.6 L1421,412.16" stroke="#6a8fe0" stroke-width="1.1" stroke-dasharray="2,2.6" opacity="0.55" fill="none"/><path d="M1093,411.2 L1421,417.76" stroke="#6a8fe0" stroke-width="1.1" stroke-dasharray="2,2.6" opacity="0.55" fill="none"/><path d="M1093,416.8 L1421,423.36" stroke="#6a8fe0" stroke-width="1.1" stroke-dasharray="2,2.6" opacity="0.55" fill="none"/><path d="M1093,422.4 L1421,428.96" stroke="#6a8fe0" stroke-width="1.1" stroke-dasharray="2,2.6" opacity="0.55" fill="none"/><path d="M1093,428 L1421,434.56" stroke="#6a8fe0" stroke-width="1.1" stroke-dasharray="2,2.6" opacity="0.55" fill="none"/><path d="M1093,433.6 L1421,440.16" stroke="#6a8fe0" stroke-width="1.1" stroke-dasharray="2,2.6" opacity="0.55" fill="none"/><path d="M1093,439.2 L1421,445.76" stroke="#6a8fe0" stroke-width="1.1" stroke-dasharray="2,2.6" opacity="0.55" fill="none"/><path d="M1093,444.8 L1421,451.36" stroke="#6a8fe0" stroke-width="1.1" stroke-dasharray="2,2.6" opacity="0.55" fill="none"/><path d="M1093,450.4 L1421,456.96" stroke="#6a8fe0" stroke-width="1.1" stroke-dasharray="2,2.6" opacity="0.55" fill="none"/>
</svg>
<svg style="left:0;top:0" width="1640" height="430" viewBox="112 76 1640 430" fill="none" stroke="#c2c2c4" stroke-width="1.2"><path d="M1128,454 L1280,498 M1128,454 L1128,440 M1213,474 L1230,466 M1280,498 L1305,476 L1305,454 M1200,454 L1305,476 M1280,454 L1280,498"/><path d="M1610,454 L1610,486 L1625,500 M1640,454 L1640,500 M1610,486 L1752,458 M1700,500 L1752,486 M1710,482 L1730,492"/></svg>
<svg style="left:1313px;top:195px;overflow:hidden" width="327" height="183.3" viewBox="1425 271 327 183.3">
<defs><linearGradient id="s5" x1="0" y1="0" x2="1" y2="0"><stop offset="0" stop-color="#b5b9bb"/><stop offset=".5" stop-color="#ced2d4"/><stop offset="1" stop-color="#bfc3c6"/></linearGradient>
<linearGradient id="g5" x1="0" y1="0" x2="0" y2="1"><stop offset="0" stop-color="#5b6069"/><stop offset="1" stop-color="#53575f"/></linearGradient></defs>
<rect x="1425" y="271" width="328" height="184" fill="url(#s5)"/>
<rect x="1425" y="368" width="328" height="90" fill="url(#g5)"/>
<g filter="url(#cb1)">
<polygon points="1530,346 1620,344 1700,348 1752,346 1752,372 1530,372" fill="#a9acae"/>
<polygon points="1740,344 1752,342 1752,360 1740,360" fill="#c9b070"/>
<polygon points="1425,271 1500,271 1520,280 1560,276 1585,296 1596,330 1580,350 1540,360 1530,376 1425,380" fill="#4a544e" filter="url(#leaf)"/>
<polygon points="1425,310 1470,318 1500,344 1520,372 1425,376" fill="#3e4742"/>
<polygon points="1600,300 1625,276 1660,272 1700,280 1716,310 1712,340 1680,352 1650,358 1625,340 1606,326" fill="#525d56" filter="url(#leaf)"/>
<rect x="1651" y="350" width="5" height="26" fill="#333"/><rect x="1552" y="340" width="4" height="34" fill="#333"/>
<polygon points="1560,366 1752,362 1752,378 1560,378" fill="#56605a"/>
<polygon points="1545,428 1700,422 1712,436 1712,454 1540,454" fill="#8d8f92"/>
<polygon points="1712,420 1752,414 1752,454 1712,454" fill="#6f7276"/>
</g><path d="M1425,300 L1700,300" stroke="#5cc49c" stroke-width="1.2" stroke-dasharray="1.6,2.6" opacity="0.8" fill="none"/><path d="M1425,305.2 L1700,305.2" stroke="#5cc49c" stroke-width="1.2" stroke-dasharray="1.6,2.6" opacity="0.8" fill="none"/><path d="M1425,310.4 L1700,310.4" stroke="#5cc49c" stroke-width="1.2" stroke-dasharray="1.6,2.6" opacity="0.8" fill="none"/><path d="M1425,315.6 L1700,315.6" stroke="#5cc49c" stroke-width="1.2" stroke-dasharray="1.6,2.6" opacity="0.8" fill="none"/><path d="M1425,320.8 L1700,320.8" stroke="#5cc49c" stroke-width="1.2" stroke-dasharray="1.6,2.6" opacity="0.8" fill="none"/><path d="M1425,326 L1700,326" stroke="#5cc49c" stroke-width="1.2" stroke-dasharray="1.6,2.6" opacity="0.8" fill="none"/><path d="M1425,331.2 L1700,331.2" stroke="#5cc49c" stroke-width="1.2" stroke-dasharray="1.6,2.6" opacity="0.8" fill="none"/><path d="M1425,336.4 L1700,336.4" stroke="#5cc49c" stroke-width="1.2" stroke-dasharray="1.6,2.6" opacity="0.8" fill="none"/><path d="M1425,341.6 L1700,341.6" stroke="#5cc49c" stroke-width="1.2" stroke-dasharray="1.6,2.6" opacity="0.8" fill="none"/><path d="M1425,346.8 L1700,346.8" stroke="#5cc49c" stroke-width="1.2" stroke-dasharray="1.6,2.6" opacity="0.8" fill="none"/><path d="M1425,352 L1700,352" stroke="#5cc49c" stroke-width="1.2" stroke-dasharray="1.6,2.6" opacity="0.8" fill="none"/><path d="M1425,357.2 L1700,357.2" stroke="#5cc49c" stroke-width="1.2" stroke-dasharray="1.6,2.6" opacity="0.8" fill="none"/><path d="M1425,362.4 L1700,362.4" stroke="#5cc49c" stroke-width="1.2" stroke-dasharray="1.6,2.6" opacity="0.8" fill="none"/><path d="M1425,367.6 L1700,367.6" stroke="#5cc49c" stroke-width="1.2" stroke-dasharray="1.6,2.6" opacity="0.8" fill="none"/><path d="M1425,372.8 L1700,372.8" stroke="#5cc49c" stroke-width="1.2" stroke-dasharray="1.6,2.6" opacity="0.8" fill="none"/><path d="M1425,378 L1752,378" stroke="#6a8fe0" stroke-width="1.1" stroke-dasharray="2,2.4" opacity="0.55" fill="none"/><path d="M1425,383.4 L1752,383.4" stroke="#6a8fe0" stroke-width="1.1" stroke-dasharray="2,2.4" opacity="0.55" fill="none"/><path d="M1425,388.8 L1752,388.8" stroke="#6a8fe0" stroke-width="1.1" stroke-dasharray="2,2.4" opacity="0.55" fill="none"/><path d="M1425,394.2 L1752,394.2" stroke="#6a8fe0" stroke-width="1.1" stroke-dasharray="2,2.4" opacity="0.55" fill="none"/><path d="M1425,399.6 L1752,399.6" stroke="#6a8fe0" stroke-width="1.1" stroke-dasharray="2,2.4" opacity="0.55" fill="none"/><path d="M1425,405 L1752,405" stroke="#6a8fe0" stroke-width="1.1" stroke-dasharray="2,2.4" opacity="0.55" fill="none"/><path d="M1425,410.4 L1752,410.4" stroke="#6a8fe0" stroke-width="1.1" stroke-dasharray="2,2.4" opacity="0.55" fill="none"/><path d="M1425,415.8 L1752,415.8" stroke="#6a8fe0" stroke-width="1.1" stroke-dasharray="2,2.4" opacity="0.55" fill="none"/><path d="M1425,421.2 L1752,421.2" stroke="#6a8fe0" stroke-width="1.1" stroke-dasharray="2,2.4" opacity="0.55" fill="none"/><path d="M1425,426.6 L1752,426.6" stroke="#6a8fe0" stroke-width="1.1" stroke-dasharray="2,2.4" opacity="0.55" fill="none"/><path d="M1425,432 L1752,432" stroke="#6a8fe0" stroke-width="1.1" stroke-dasharray="2,2.4" opacity="0.55" fill="none"/><path d="M1425,437.4 L1752,437.4" stroke="#6a8fe0" stroke-width="1.1" stroke-dasharray="2,2.4" opacity="0.55" fill="none"/><path d="M1425,442.8 L1752,442.8" stroke="#6a8fe0" stroke-width="1.1" stroke-dasharray="2,2.4" opacity="0.55" fill="none"/><path d="M1425,448.2 L1752,448.2" stroke="#6a8fe0" stroke-width="1.1" stroke-dasharray="2,2.4" opacity="0.55" fill="none"/>
</svg>
<!-- 3D SCENE -->
<div class="abs" style="left:0;top:489px;width:1640px;height:886px;overflow:hidden;background:#f4f4f4">
<svg style="left:0;top:0" width="1640" height="886" viewBox="112 565 1640 886">
<defs>
<linearGradient id="gShL" x1="0" x2="1"><stop offset="0" stop-color="#7a7a7c"/><stop offset="1" stop-color="#2a2a2c"/></linearGradient>
<linearGradient id="gShR" x1="0" x2="1"><stop offset="0" stop-color="#4a4a4c"/><stop offset="1" stop-color="#8a8a8c"/></linearGradient>
<linearGradient id="gPinkF" x1="0" y1="0" x2="0" y2="1"><stop offset="0" stop-color="#e7b0a6"/><stop offset=".55" stop-color="#dc9a8e"/><stop offset=".7" stop-color="#a5594a"/><stop offset="1" stop-color="#8a4436"/></linearGradient>
<linearGradient id="gYelF" x1="0" y1="0" x2="0" y2="1"><stop offset="0" stop-color="#e6c887"/><stop offset=".3" stop-color="#d9b56c"/><stop offset=".45" stop-color="#8f6c2c"/><stop offset=".6" stop-color="#b48f45"/><stop offset="1" stop-color="#a07a35"/></linearGradient>
<linearGradient id="gYelF2" x1="0" y1="0" x2="0" y2="1"><stop offset="0" stop-color="#e2c382"/><stop offset=".4" stop-color="#d4b066"/><stop offset=".6" stop-color="#a88440"/><stop offset="1" stop-color="#b8924a"/></linearGradient>
<linearGradient id="gBar" x1="0" y1="0" x2="1" y2="1"><stop offset="0" stop-color="#8d909c"/><stop offset="1" stop-color="#5d606b"/></linearGradient>
<filter id="tex" x="0" y="0" width="100%" height="100%"><feTurbulence type="fractalNoise" baseFrequency="0.01 0.09" numOctaves="4" seed="5"/><feColorMatrix type="matrix" values="0 0 0 0 0.22  0 0 0 0 0.22  0 0 0 0 0.23  1.5 0 0 0 -0.82"/><feComposite in2="SourceGraphic" operator="in"/></filter>
<filter id="tex2" x="0" y="0" width="100%" height="100%"><feTurbulence type="fractalNoise" baseFrequency="0.05 0.12" numOctaves="3" seed="9"/><feColorMatrix type="matrix" values="0 0 0 0 0.05  0 0 0 0 0.05  0 0 0 0 0.06  1.8 0 0 0 -0.75"/><feComposite in2="SourceGraphic" operator="in"/></filter>
<filter id="b2"><feGaussianBlur stdDeviation="2"/></filter>
<filter id="b5"><feGaussianBlur stdDeviation="5"/></filter>
<filter id="b9"><feGaussianBlur stdDeviation="9"/></filter>
</defs>
<polygon points="112,672 1125,646 1380,864 112,900" fill="#fefefe" />
<polygon points="112,676 200,672 285,668 285,669.6 200,679 112,687" fill="#1b1d1b" />
<polygon points="112,806 250,815 317,806 380,792 394,781 487,767 522,768 576,772 648,777 726,786 737,755 752,716 772,677 794,646 868,644 872,663.5 900,692 933,724.5 977,759 1020,801 1064,838 1107,868 1113,872 1113,905 640,930 420,930 360,940 240,1020 112,1110" fill="#19191a" />
<g filter="url(#b5)" opacity=".9">
<polygon points="400,800 700,790 730,800 720,824 400,828" fill="#262627" />
<polygon points="112,880 380,874 640,872 640,888 360,893 112,896" fill="#363637" />
<polygon points="112,888 165,886 170,905 112,915" fill="#3c3c3d" />
<polygon points="500,850 760,842 770,858 500,866" fill="#202021" />
<polygon points="112,930 300,900 340,915 112,1070" fill="#1f1f20" />
</g>
<polygon points="112,806 250,815 317,806 380,792 394,781 487,767 522,768 576,772 648,777 726,786 737,755 752,716 772,677 794,646 868,644 872,663.5 900,692 933,724.5 977,759 1020,801 1064,838 1107,868 1113,872 1113,905 640,930 420,930 360,940 240,1020 112,1110" fill="#fff" filter="url(#tex)"/>
<polygon points="794,646 772,677 752,716 737,755 726,792 756,800 764,755 778,716 792,677 806,646" fill="url(#gShL)" />
<polygon points="864.5,644 841.6,659 839.5,674.4 852.5,702.8 867.8,722.4 885,742 900.4,772.4 917.9,802.9 939.6,837.8 965.8,870.4 981,881 1113,872 1107,868 1064,838 1020,801 977,759 933,724.5 900,692 872,663.5 868,644" fill="#66666a" />
<polygon points="868,676 884,690 905,715 930,752 956,794 978,824 962,828 940,802 915,762 890,722 872,698 860,682" fill="#e4e4e6" />
<g filter="url(#b2)">
<polygon points="868,722 885,742 900.4,772.4 917.9,802.9 939.6,837.8 965.8,870.4 981,881 1010,878 975,838 948,806 925,766 905,740 886,720" fill="#3c3c3f" />
<polygon points="864.5,644 841.6,659 839.5,674.4 852.5,702.8 867.8,722.4 885,742 900.4,772.4 917.9,802.9 939.6,837.8 965.8,870.4 981,881 1113,872 1107,868 1064,838 1020,801 977,759 933,724.5 900,692 872,663.5 868,644" fill="#fff" filter="url(#tex2)"/>
<polygon points="820,700 832,700 880,800 905,876 880,876 850,790" fill="#0e0e10" />
<polygon points="838,740 850,738 864,770 852,774" fill="#777779" />
<polygon points="872,742 884,740 900,772 888,776" fill="#88888a" />
</g>
<path d="M513,680h2v1.5h-2zM530,683h2v2h-2zM395,669h2v3h-2zM404,673h9v1.5h-9zM768,664h2v3h-2zM400,663h3v1.5h-3zM608,678h9v1.5h-9zM614,679h9v2h-9zM422,667h2v1.5h-2zM611,669h9v2h-9zM584,657h6v3h-6zM528,669h3v2h-3zM667,672h9v3h-9zM739,684h6v2h-6zM630,682h3v2h-3zM442,677h6v3h-6zM396,664h9v2h-9zM519,659h4v3h-4zM618,655h4v3h-4zM666,677h2v1.5h-2zM680,668h6v2h-6zM674,683h4v1.5h-4zM766,664h6v1.5h-6zM469,682h4v2h-4zM683,656h6v1.5h-6zM448,684h6v2h-6zM742,680h4v3h-4zM784,656h6v2h-6zM442,675h3v1.5h-3zM579,678h9v2h-9zM488,681h4v2h-4zM771,672h9v1.5h-9zM567,687h9v3h-9zM543,656h6v1.5h-6zM577,667h3v3h-3zM447,675h4v1.5h-4zM422,662h4v1.5h-4zM409,667h3v3h-3zM441,672h4v3h-4zM430,680h6v3h-6zM577,670h4v2h-4zM576,677h3v1.5h-3zM464,680h9v1.5h-9zM691,669h4v1.5h-4zM665,671h3v2h-3zM696,681h9v2h-9zM641,660h3v2h-3zM716,662h3v2h-3zM592,671h2v2h-2zM574,674h3v2h-3zM563,697h4v1.5h-4zM470,662h3v3h-3zM461,676h9v1.5h-9zM577,684h4v1.5h-4zM722,679h3v3h-3zM744,678h6v2h-6zM416,686h6v3h-6zM685,667h2v2h-2zM450,676h6v2h-6zM631,676h9v3h-9zM649,665h3v1.5h-3zM386,681h2v2h-2zM558,684h3v1.5h-3zM483,660h4v2h-4zM693,667h3v1.5h-3zM753,682h4v3h-4zM652,676h9v2h-9zM598,662h9v1.5h-9zM738,674h3v2h-3zM438,660h9v1.5h-9zM608,667h9v3h-9zM702,682h2v1.5h-2zM482,669h9v3h-9zM610,687h2v3h-2zM514,684h3v2h-3zM565,670h9v3h-9zM588,672h4v2h-4zM724,683h3v3h-3zM430,669h3v3h-3zM410,673h4v1.5h-4zM748,680h4v2h-4zM484,684h3v3h-3zM470,681h6v2h-6zM786,669h3v2h-3zM670,681h6v2h-6zM526,672h2v2h-2zM388,663h2v3h-2zM516,669h9v2h-9zM590,696h3v1.5h-3zM414,682h4v1.5h-4zM751,678h6v2h-6zM546,686h9v3h-9zM667,675h3v3h-3zM747,674h4v1.5h-4zM640,673h3v1.5h-3zM488,668h2v3h-2zM385,681h4v2h-4zM398,672h3v1.5h-3zM777,672h4v2h-4zM598,678h3v2h-3zM563,669h2v2h-2zM395,666h2v2h-2zM591,672h6v3h-6zM604,682h6v2h-6zM662,680h3v3h-3zM786,671h2v2h-2zM386,659h6v2h-6zM403,659h6v2h-6zM625,671h3v2h-3zM490,669h2v2h-2zM529,660h4v2h-4zM394,695h4v2h-4zM526,681h6v2h-6zM586,672h3v2h-3zM587,679h2v2h-2zM544,672h2v3h-2zM389,670h9v2h-9zM650,678h9v3h-9zM693,670h4v2h-4zM398,662h9v3h-9zM681,674h9v1.5h-9zM719,667h9v2h-9zM415,684h2v3h-2zM723,675h9v1.5h-9zM637,662h6v2h-6zM381,662h2v1.5h-2zM650,685h4v1.5h-4zM727,678h3v2h-3zM475,666h6v1.5h-6zM576,664h4v1.5h-4zM633,670h3v2h-3zM484,669h4v2h-4zM385,679h2v2h-2zM657,675h4v2h-4zM571,668h9v2h-9zM508,673h2v3h-2zM387,656h6v2h-6zM539,676h3v1.5h-3zM618,679h4v2h-4zM627,681h9v2h-9zM744,670h6v3h-6zM390,666h2v3h-2zM659,660h6v2h-6zM534,680h2v2h-2zM381,672h2v2h-2zM672,655h4v2h-4zM533,646h9v1.5h-9zM528,693h6v2h-6zM730,671h4v2h-4zM482,675h4v3h-4zM589,675h6v1.5h-6zM713,680h6v2h-6zM675,686h6v2h-6zM644,676h4v3h-4zM400,676h6v3h-6zM521,670h4v2h-4zM683,679h3v2h-3zM578,671h6v1.5h-6zM449,675h6v2h-6zM566,677h4v3h-4zM555,666h3v2h-3zM608,670h4v2h-4zM531,674h2v3h-2zM537,666h9v2h-9zM535,670h4v2h-4zM432,675h9v2h-9zM418,679h6v3h-6zM771,667h2v2h-2zM393,667h6v3h-6zM380,653h6v3h-6zM779,672h3v2h-3zM594,676h2v3h-2zM415,672h3v2h-3zM613,672h2v2h-2zM775,664h6v1.5h-6zM421,664h4v2h-4zM539,674h2v2h-2zM789,684h4v2h-4zM644,680h3v2h-3zM392,665h6v2h-6zM403,678h6v1.5h-6zM485,690h6v2h-6zM473,680h6v2h-6zM660,674h3v1.5h-3zM707,671h3v3h-3zM778,661h4v2h-4zM475,675h4v1.5h-4zM770,687h6v2h-6zM748,652h2v2h-2zM758,674h2v2h-2zM390,664h2v2h-2zM541,667h4v1.5h-4zM789,679h3v3h-3zM393,669h6v2h-6zM784,668h2v2h-2zM413,674h6v1.5h-6zM610,672h4v3h-4zM416,663h6v2h-6zM533,677h4v3h-4zM392,669h6v2h-6zM713,672h2v3h-2zM406,669h2v2h-2zM460,683h4v2h-4zM517,677h9v1.5h-9zM487,670h4v2h-4zM382,664h9v1.5h-9zM390,673h6v3h-6zM704,682h6v3h-6zM434,671h4v2h-4zM629,672h4v2h-4zM569,675h9v2h-9zM541,660h3v2h-3zM547,666h9v2h-9zM446,664h6v1.5h-6zM785,672h2v3h-2zM584,676h6v2h-6zM476,661h3v1.5h-3zM700,678h4v2h-4zM495,671h4v2h-4zM560,679h3v2h-3zM477,668h3v2h-3zM407,691h4v2h-4zM588,674h6v1.5h-6zM422,688h6v2h-6zM725,674h4v2h-4zM429,671h3v2h-3zM761,659h6v2h-6zM698,685h2v1.5h-2zM641,670h2v2h-2zM519,664h2v2h-2zM790,686h3v1.5h-3zM716,675h6v2h-6zM456,670h6v3h-6zM406,678h2v3h-2zM652,678h3v3h-3zM665,681h6v2h-6zM654,669h9v2h-9zM550,673h2v2h-2zM644,665h2v3h-2zM750,678h6v1.5h-6zM716,657h6v2h-6zM433,682h2v2h-2zM643,675h9v2h-9zM682,670h3v2h-3zM523,675h2v1.5h-2zM537,677h3v2h-3zM432,695h6v2h-6zM402,663h6v1.5h-6zM751,660h3v2h-3zM635,660h9v2h-9zM720,675h6v2h-6zM537,678h2v2h-2zM481,669h2v1.5h-2zM654,653h4v1.5h-4zM540,655h4v3h-4zM506,677h3v3h-3zM540,665h3v1.5h-3zM381,680h6v3h-6zM476,673h6v2h-6zM712,656h6v1.5h-6zM133,683h6v1.5h-6zM125,690h3v1.5h-3zM396,683h2v1.5h-2zM344,693h6v2h-6zM120,692h2v2h-2zM153,689h6v2h-6zM407,689h3v1.5h-3zM369,684h9v2h-9zM161,689h6v2h-6zM190,684h6v2h-6zM294,683h4v1.5h-4zM173,684h6v2h-6zM308,685h6v2h-6zM356,690h4v1.5h-4zM349,695h6v1.5h-6zM190,689h9v3h-9zM339,683h4v2h-4zM223,690h2v3h-2zM183,677h4v2h-4zM208,678h9v2h-9zM338,686h4v3h-4zM241,682h4v1.5h-4zM153,687h2v1.5h-2zM113,693h4v2h-4zM145,684h9v2h-9zM293,689h3v2h-3zM304,683h3v2h-3zM251,686h2v2h-2zM380,687h4v1.5h-4zM129,681h9v2h-9zM295,680h9v3h-9zM189,683h2v1.5h-2zM131,689h3v1.5h-3zM393,687h2v1.5h-2zM301,684h6v2h-6zM272,683h9v3h-9zM363,688h4v1.5h-4zM418,690h6v1.5h-6zM228,676h2v3h-2zM166,690h2v2h-2zM184,690h4v1.5h-4zM194,687h9v3h-9zM323,698h4v2h-4zM138,679h9v1.5h-9zM164,694h3v2h-3zM342,681h4v2h-4zM383,684h9v3h-9zM257,689h9v1.5h-9zM376,679h9v2h-9zM355,689h6v1.5h-6zM286,687h2v1.5h-2zM304,687h3v2h-3zM413,686h3v1.5h-3zM327,685h2v1.5h-2zM376,686h9v1.5h-9zM383,683h6v1.5h-6zM188,686h2v2h-2zM259,687h3v1.5h-3zM356,683h4v3h-4zM192,683h4v2h-4zM398,694h4v3h-4zM374,689h9v1.5h-9zM355,692h2v2h-2zM256,687h2v2h-2zM332,689h4v2h-4zM246,680h9v2h-9zM201,686h4v3h-4zM141,684h3v3h-3zM295,692h9v2h-9zM199,684h3v2h-3zM265,691h2v3h-2zM355,691h9v1.5h-9zM305,683h6v1.5h-6zM242,690h2v2h-2zM175,685h9v2h-9zM229,697h3v3h-3zM151,680h9v1.5h-9zM219,682h4v2h-4zM379,680h4v2h-4zM255,688h4v2h-4zM151,676h3v2h-3zM194,688h9v2h-9zM335,694h9v2h-9zM162,685h4v2h-4zM192,702h3v1.5h-3zM172,681h3v2h-3zM357,685h3v1.5h-3zM308,681h2v2h-2zM176,685h6v3h-6zM326,687h9v2h-9zM255,690h6v1.5h-6zM340,691h6v3h-6zM373,682h9v2h-9zM321,680h2v3h-2zM245,686h6v2h-6zM353,694h3v2h-3zM374,685h6v2h-6zM388,686h4v1.5h-4zM232,672h2v2h-2zM279,687h3v2h-3zM272,691h9v2h-9zM333,690h9v1.5h-9zM309,689h6v3h-6zM177,681h3v3h-3zM270,693h9v2h-9zM308,683h4v2h-4zM230,688h6v2h-6zM291,687h2v2h-2zM205,676h3v3h-3zM254,693h3v2h-3zM398,694h3v3h-3zM310,690h3v2h-3zM221,680h6v3h-6zM419,679h9v2h-9zM352,677h3v2h-3zM329,688h4v3h-4zM321,677h4v2h-4zM187,687h4v2h-4zM260,680h4v2h-4zM398,689h6v1.5h-6zM138,682h3v2h-3zM307,684h2v1.5h-2zM177,690h9v1.5h-9zM290,688h3v2h-3zM351,684h6v2h-6zM300,688h9v1.5h-9zM318,693h4v2h-4zM264,681h3v1.5h-3zM341,676h9v1.5h-9zM193,690h3v2h-3zM258,681h3v3h-3zM188,684h3v1.5h-3zM161,683h6v2h-6zM371,693h4v3h-4zM241,688h4v1.5h-4zM118,686h2v2h-2zM361,691h3v1.5h-3zM178,689h6v2h-6zM216,689h6v2h-6zM200,682h4v3h-4zM189,690h4v3h-4zM236,687h9v2h-9zM381,684h6v1.5h-6zM214,689h4v2h-4zM151,688h2v3h-2zM335,686h6v1.5h-6zM235,687h6v1.5h-6zM355,687h9v3h-9zM302,681h9v1.5h-9zM177,680h6v2h-6zM267,672h2v1.5h-2zM313,673h3v2h-3zM346,672h6v1.5h-6zM304,675h6v1.5h-6zM335,665h6v3h-6zM326,671h2v3h-2zM351,678h3v3h-3zM381,672h9v1.5h-9zM264,664h2v3h-2zM251,673h2v1.5h-2zM287,675h4v2h-4zM327,675h3v1.5h-3zM312,672h3v1.5h-3zM300,666h9v3h-9zM328,675h2v1.5h-2zM252,671h2v1.5h-2zM316,670h6v1.5h-6zM304,677h9v3h-9zM330,677h2v2h-2zM412,681h3v3h-3zM331,673h4v2h-4zM300,668h2v2h-2zM398,672h3v2h-3zM349,671h3v3h-3zM316,667h3v3h-3zM298,677h2v2h-2zM295,667h2v2h-2zM392,674h9v2h-9zM297,676h6v2h-6zM341,666h9v3h-9zM386,674h3v2h-3zM353,678h6v3h-6zM370,677h2v3h-2zM328,670h2v2h-2zM381,673h4v2h-4zM331,677h9v2h-9zM282,673h4v2h-4zM348,674h4v3h-4zM383,674h6v2h-6zM397,670h4v3h-4zM384,675h4v2h-4zM338,676h2v1.5h-2zM256,680h6v2h-6zM294,672h4v3h-4zM267,667h9v2h-9zM293,674h2v2h-2zM284,673h2v1.5h-2zM345,674h6v3h-6zM411,673h9v3h-9zM407,671h2v2h-2zM304,672h9v3h-9zM281,674h3v2h-3zM414,675h2v2h-2zM410,672h2v1.5h-2zM392,679h6v1.5h-6zM267,674h4v1.5h-4zM410,671h9v3h-9zM379,669h2v3h-2zM305,672h6v3h-6zM279,674h3v2h-3zM1264,861h3v1.5h-3zM946,667h3v1.5h-3zM1272,877h3v3h-3zM1282,817h6v1.5h-6zM1144,763h3v3h-3zM929,680h4v2h-4zM1019,719h6v2h-6zM1064,728h3v2h-3zM1056,738h9v2h-9zM1020,725h3v2h-3zM1086,733h2v2h-2zM1291,899h2v2h-2zM1115,773h3v2h-3zM1061,731h4v2h-4zM1269,859h3v1.5h-3zM1230,835h4v2h-4zM1291,895h4v2h-4zM1066,747h9v2h-9zM958,644h3v2h-3zM1120,789h3v2h-3zM1099,761h9v1.5h-9zM1228,838h9v3h-9zM1200,815h3v2h-3zM965,703h2v3h-2zM1233,850h4v2h-4zM998,696h6v1.5h-6zM886,674h4v2h-4zM958,676h4v1.5h-4zM949,664h2v2h-2zM1098,781h6v1.5h-6zM931,666h4v3h-4zM1122,732h2v2h-2zM1247,858h9v1.5h-9zM1103,754h9v2h-9zM889,670h3v2h-3zM923,668h4v1.5h-4zM888,686h4v1.5h-4zM1232,810h9v3h-9zM1100,757h2v2h-2zM899,650h2v3h-2zM1087,736h2v1.5h-2zM1050,735h3v2h-3zM1242,848h6v2h-6zM1278,872h2v3h-2zM1171,771h2v3h-2zM1288,837h2v2h-2zM1022,722h6v2h-6zM1222,841h9v1.5h-9zM1016,738h4v2h-4zM1246,859h2v2h-2zM926,680h3v1.5h-3zM975,715h6v3h-6zM1206,842h2v1.5h-2zM1244,820h9v2h-9zM1266,821h2v1.5h-2zM985,681h9v1.5h-9zM1062,758h4v2h-4zM1152,780h2v1.5h-2zM1130,800h4v1.5h-4zM1076,741h9v2h-9zM1065,697h6v2h-6zM995,704h2v2h-2zM1233,804h6v2h-6zM1110,747h4v3h-4zM1255,829h4v1.5h-4zM982,725h3v2h-3zM1095,736h2v2h-2zM948,704h3v2h-3zM1114,749h3v2h-3zM904,663h2v2h-2zM1111,750h2v3h-2zM1230,813h4v1.5h-4zM1099,792h3v3h-3zM1022,719h4v2h-4zM1164,760h9v1.5h-9zM1190,777h6v2h-6zM1210,802h3v3h-3zM1246,786h2v3h-2zM1202,789h9v2h-9zM1056,724h4v1.5h-4zM1039,706h4v2h-4zM1028,731h9v3h-9zM1152,822h6v3h-6zM1066,745h3v2h-3zM1217,799h3v1.5h-3zM1225,831h4v2h-4zM1287,841h4v2h-4zM1288,844h2v1.5h-2zM900,636h9v2h-9zM1106,753h6v3h-6zM1044,713h4v3h-4zM1278,872h2v2h-2zM922,655h9v2h-9zM1250,851h6v3h-6zM1049,739h9v2h-9zM1170,748h2v2h-2zM1032,720h4v2h-4zM926,680h4v2h-4zM1225,868h6v2h-6zM1100,757h9v2h-9zM1092,761h9v1.5h-9zM1028,737h2v3h-2zM885,687h9v1.5h-9zM1265,843h6v1.5h-6zM1126,766h6v2h-6zM1246,820h9v2h-9zM1121,761h3v1.5h-3zM892,662h2v2h-2zM1278,824h6v1.5h-6zM1153,788h9v2h-9zM940,682h2v2h-2zM1144,800h9v1.5h-9zM1027,703h2v2h-2zM1254,844h9v1.5h-9zM1065,730h2v2h-2zM1271,834h3v2h-3zM883,668h6v2h-6zM1283,834h6v1.5h-6zM982,674h3v3h-3zM1010,737h6v1.5h-6zM1213,817h4v3h-4zM958,703h4v3h-4zM1116,788h6v2h-6zM1049,753h2v1.5h-2zM1057,763h6v2h-6zM1076,734h4v2h-4zM1063,741h3v2h-3zM1176,803h2v2h-2zM993,712h6v3h-6zM1231,816h3v2h-3zM1035,732h9v2h-9zM1005,734h6v2h-6zM975,687h4v3h-4zM1127,777h4v2h-4zM1050,724h2v1.5h-2zM1108,763h4v3h-4zM892,654h2v3h-2zM1178,787h3v2h-3zM1015,712h9v2h-9zM1218,810h4v2h-4zM908,658h3v3h-3zM999,724h6v3h-6zM1205,845h3v2h-3zM954,658h4v2h-4zM1257,872h6v2h-6zM1300,865h6v2h-6zM1261,855h4v2h-4zM1179,810h2v3h-2zM897,666h4v2h-4zM1040,742h2v2h-2zM1144,809h3v3h-3zM1181,790h4v3h-4zM1161,745h2v2h-2zM1258,816h9v1.5h-9zM1289,852h4v2h-4zM1206,808h4v1.5h-4zM1055,735h9v2h-9zM998,631h2v2h-2zM1277,804h9v3h-9zM1094,780h3v3h-3zM1163,813h6v2h-6zM898,628h9v2h-9zM953,706h3v2h-3zM985,735h2v2h-2zM1030,713h4v2h-4zM937,686h6v3h-6zM980,701h6v2h-6zM1273,873h4v2h-4zM936,670h3v2h-3zM1144,754h2v3h-2zM1199,826h9v3h-9zM1233,855h6v2h-6zM928,669h3v1.5h-3zM905,683h4v2h-4zM963,684h2v2h-2zM1016,695h6v2h-6zM1002,705h6v3h-6zM915,665h4v2h-4zM926,649h3v2h-3zM883,653h2v2h-2zM1144,811h4v2h-4zM913,654h2v1.5h-2zM1205,822h3v2h-3zM923,656h4v2h-4zM1039,717h3v2h-3zM937,662h4v2h-4zM981,728h6v1.5h-6zM1277,856h6v3h-6zM1090,765h9v1.5h-9zM940,695h3v2h-3zM938,664h2v3h-2zM1081,734h3v2h-3zM881,674h9v3h-9zM940,644h2v1.5h-2zM1096,740h6v1.5h-6zM1160,799h3v2h-3zM1039,769h4v2h-4zM1077,750h9v2h-9zM1097,734h3v3h-3zM1284,864h9v1.5h-9zM1221,851h9v2h-9zM1117,781h6v2h-6zM1082,740h4v1.5h-4zM1236,813h3v3h-3zM1170,813h9v3h-9zM1031,749h3v3h-3zM1046,744h3v1.5h-3zM973,706h4v1.5h-4zM959,673h3v3h-3zM975,667h9v1.5h-9zM1189,828h6v1.5h-6zM1216,803h3v1.5h-3zM1143,807h6v3h-6zM1109,758h3v3h-3zM1205,838h2v3h-2zM979,729h4v1.5h-4zM886,641h4v1.5h-4zM1177,790h6v1.5h-6zM1141,800h4v2h-4zM1034,707h4v1.5h-4zM1227,839h9v2h-9zM1183,816h2v2h-2zM922,633h2v1.5h-2zM1269,832h3v2h-3zM1029,723h9v3h-9zM928,670h2v3h-2zM926,678h9v2h-9zM1247,820h6v2h-6zM1127,773h4v3h-4zM886,728h4v2h-4zM1085,747h2v1.5h-2zM957,689h9v3h-9zM1234,860h6v3h-6zM976,691h9v1.5h-9zM1032,707h3v1.5h-3zM969,691h4v3h-4zM1019,669h4v1.5h-4zM1021,731h6v2h-6zM975,698h9v1.5h-9zM1145,827h3v2h-3zM1041,793h4v2h-4zM1297,885h2v1.5h-2zM1246,838h2v2h-2zM1213,786h3v2h-3zM1166,781h4v2h-4zM1027,759h9v3h-9zM1020,711h6v2h-6zM1256,806h3v2h-3zM943,694h6v3h-6zM1067,788h9v2h-9zM1270,835h4v2h-4zM1185,796h9v2h-9zM911,684h9v2h-9zM1008,760h4v3h-4zM1030,729h2v3h-2zM1014,694h3v2h-3zM1257,803h4v2h-4zM1176,787h3v1.5h-3zM1048,743h9v1.5h-9zM963,720h2v2h-2zM1132,811h9v2h-9zM1182,820h2v2h-2zM994,704h4v1.5h-4zM969,692h4v1.5h-4zM1153,759h4v2h-4zM904,681h6v1.5h-6zM917,639h9v3h-9zM988,679h6v1.5h-6zM891,642h4v1.5h-4zM1054,766h4v2h-4zM919,676h2v2h-2zM1222,831h6v2h-6zM1106,739h9v2h-9zM977,684h9v2h-9zM1222,815h4v3h-4zM1115,768h4v2h-4zM935,703h4v2h-4zM1296,859h3v3h-3zM1198,813h3v1.5h-3zM905,665h9v2h-9zM1113,788h4v2h-4zM1259,887h3v1.5h-3zM1027,718h6v2h-6zM1147,761h4v3h-4zM1073,725h2v1.5h-2zM907,706h6v2h-6zM905,642h6v2h-6zM893,648h2v2h-2zM1178,800h4v3h-4zM1150,806h4v3h-4zM971,684h4v2h-4zM1226,817h4v1.5h-4zM1019,673h3v2h-3zM1167,798h9v3h-9zM969,731h4v1.5h-4zM1208,826h6v2h-6zM1063,774h2v1.5h-2zM944,722h2v2h-2zM1263,862h2v2h-2zM1075,777h6v1.5h-6zM1054,717h6v2h-6zM1291,830h2v2h-2zM965,690h3v2h-3zM1121,768h2v1.5h-2zM900,666h2v1.5h-2zM1282,846h3v3h-3zM881,655h9v1.5h-9zM1103,788h6v1.5h-6zM1027,736h3v1.5h-3zM995,764h3v1.5h-3zM991,712h9v1.5h-9zM1051,738h9v2h-9zM992,703h6v2h-6zM1111,771h6v2h-6zM1048,724h3v3h-3zM1200,831h6v2h-6zM1257,828h9v2h-9zM1171,783h6v2h-6zM1227,819h9v1.5h-9zM1262,833h2v3h-2zM1172,781h9v2h-9zM1071,774h9v1.5h-9zM1079,735h4v3h-4zM978,679h6v2h-6zM1179,778h9v2h-9zM910,682h9v2h-9zM1268,846h6v2h-6zM1099,743h6v2h-6zM1300,894h4v2h-4zM1102,776h4v2h-4zM715,701h6v2h-6zM707,748h2v2h-2zM648,748h6v1.5h-6zM654,739h6v1.5h-6zM644,736h9v2h-9zM664,696h6v2h-6zM789,739h6v3h-6zM728,702h9v2h-9zM561,699h6v2h-6zM703,727h6v2h-6zM564,704h9v2h-9zM573,702h9v2h-9zM771,708h4v3h-4zM581,735h2v2h-2zM590,757h4v2h-4zM772,740h6v2h-6zM570,743h6v3h-6zM709,747h4v2h-4zM649,731h9v2h-9zM785,750h9v2h-9zM575,704h2v1.5h-2zM734,717h9v3h-9zM674,753h2v1.5h-2zM696,722h6v3h-6zM655,723h2v3h-2zM651,699h2v2h-2zM730,718h2v2h-2zM687,744h6v1.5h-6zM581,749h9v1.5h-9zM583,696h3v3h-3zM573,738h4v3h-4zM758,729h6v2h-6zM790,747h3v2h-3zM637,726h2v2h-2zM787,709h4v1.5h-4zM632,708h4v3h-4zM678,719h2v2h-2zM630,751h6v2h-6zM630,699h3v2h-3zM774,736h9v2h-9zM644,746h3v3h-3zM771,729h2v2h-2zM562,695h9v2h-9zM568,705h6v2h-6zM606,705h9v3h-9zM653,741h3v2h-3zM573,720h2v1.5h-2zM592,752h9v3h-9zM601,755h9v2h-9zM675,737h4v2h-4zM683,701h3v1.5h-3zM667,704h2v1.5h-2zM655,736h4v3h-4zM718,701h2v2h-2zM570,749h4v2h-4zM761,746h9v2h-9zM631,708h9v2h-9zM595,746h3v3h-3zM784,713h3v2h-3zM611,728h2v2h-2zM667,741h6v2h-6zM716,698h4v1.5h-4zM711,705h9v1.5h-9zM627,714h6v1.5h-6zM606,710h4v1.5h-4zM606,723h3v2h-3zM567,732h2v2h-2zM605,701h4v1.5h-4zM600,715h6v2h-6zM636,715h2v2h-2zM746,741h6v1.5h-6zM732,698h3v3h-3zM666,692h9v1.5h-9zM655,739h6v2h-6zM578,741h3v2h-3zM599,756h4v1.5h-4zM754,751h6v2h-6zM594,697h3v1.5h-3zM595,709h9v1.5h-9zM635,707h9v1.5h-9zM677,716h3v2h-3zM653,704h3v2h-3zM727,727h3v1.5h-3zM563,756h6v2h-6zM718,706h3v2h-3zM753,760h6v3h-6zM704,698h9v1.5h-9zM579,730h3v2h-3zM697,745h2v2h-2zM577,714h2v1.5h-2zM667,691.9h2v1.5h-2zM623,690.9h3v2h-3zM659,680.5h3v1.5h-3zM710,683.3h2v2h-2zM636,680.7h2v1.2h-2zM676,695.2h2v2h-2zM764,677.6h3v1.2h-3zM599,681.2h1.5v2h-1.5zM641,677.7h1.5v1.5h-1.5zM658,678.2h2v2h-2zM699,695.4h3v1.2h-3zM652,691.0h2v1.2h-2zM653,668.7h4v1.2h-4zM600,685.8h4v1.5h-4zM654,672.3h1.5v1.2h-1.5zM710,678.7h2v1.2h-2zM658,689.6h4v1.2h-4zM685,675.1h1.5v1.5h-1.5zM638,675.4h2v1.5h-2zM644,682.5h2v2h-2zM605,674.1h2v1.2h-2zM641,689.4h1.5v1.5h-1.5zM617,685.3h3v1.2h-3zM644,684.9h2v1.5h-2zM680,673.5h2v1.5h-2zM677,683.7h3v1.5h-3zM624,671.0h1.5v1.2h-1.5zM651,679.3h2v1.5h-2zM644,697.2h2v1.2h-2zM666,694.5h4v1.5h-4zM645,686.3h4v2h-4zM677,692.4h2v1.5h-2zM654,681.0h2v1.2h-2zM688,678.6h2v2h-2zM646,683.4h4v2h-4zM680,675.1h3v1.2h-3zM716,675.0h3v1.2h-3zM626,680.5h2v1.5h-2zM625,688.3h3v2h-3zM659,678.9h3v1.5h-3zM598,694.4h1.5v2h-1.5zM678,685.3h2v2h-2zM695,674.4h3v1.2h-3zM690,678.6h1.5v1.5h-1.5zM681,687.8h4v2h-4zM686,682.9h4v2h-4zM700,680.0h2v1.5h-2zM656,679.5h4v1.5h-4zM621,671.5h3v1.5h-3zM704,678.6h2v1.5h-2zM677,688.2h1.5v2h-1.5zM645,683.9h4v1.2h-4zM682,690.1h2v2h-2zM651,683.0h2v1.5h-2zM660,674.9h2v1.5h-2zM627,695.5h2v2h-2zM640,687.3h1.5v2h-1.5zM653,687.5h3v1.5h-3zM653,685.4h4v1.5h-4zM622,680.9h2v1.5h-2zM680,682.4h4v1.5h-4zM622,670.3h3v1.2h-3zM650,687.1h3v2h-3zM678,669.2h1.5v1.5h-1.5zM650,681.3h4v2h-4zM628,678.5h2v1.5h-2zM721,679.3h4v1.2h-4zM656,671.2h3v2h-3zM676,684.6h2v2h-2zM622,673.6h3v1.5h-3zM686,671.4h2v1.5h-2zM610,688.4h2v1.2h-2zM651,677.5h4v1.5h-4zM622,668.8h2v1.2h-2zM649,683.0h3v1.2h-3zM592,680.8h2v2h-2zM635,682.9h2v2h-2zM670,669.0h2v1.2h-2zM630,671.4h4v1.2h-4zM710,672.7h3v1.5h-3zM689,688.5h3v2h-3zM695,674.8h4v2h-4zM666,676.4h2v1.2h-2zM644,686.7h4v1.2h-4zM623,688.8h1.5v1.2h-1.5zM670,676.1h1.5v1.5h-1.5zM643,678.4h2v2h-2zM687,683.6h4v2h-4zM658,679.3h3v1.2h-3zM628,681.6h2v1.5h-2zM632,680.1h4v1.2h-4zM638,698.2h4v2h-4zM650,676.5h2v1.2h-2zM664,676.2h2v1.2h-2zM680,679.5h1.5v2h-1.5zM679,685.2h4v1.5h-4zM665,693.9h1.5v1.5h-1.5zM683,679.6h2v1.2h-2zM629,674.4h3v1.5h-3zM720,678.4h4v1.5h-4zM671,689.4h1.5v1.5h-1.5zM682,690.5h1.5v2h-1.5zM660,680.3h2v2h-2zM653,669.8h2v2h-2zM657,668.6h2v2h-2zM657,679.6h4v2h-4zM685,681.6h3v1.2h-3zM678,673.0h4v1.5h-4zM613,677.8h4v2h-4zM643,686.6h1.5v1.2h-1.5zM652,671.1h3v1.2h-3zM667,674.3h1.5v1.5h-1.5zM669,683.3h3v1.5h-3zM725,680.2h2v1.5h-2zM725,670.3h1.5v2h-1.5zM620,678.0h2v1.5h-2zM655,682.3h2v2h-2zM645,692.8h4v1.5h-4zM663,670.7h2v1.5h-2zM658,681.8h2v2h-2zM628,677.8h1.5v1.2h-1.5zM646,681.4h4v2h-4zM709,674.4h2v2h-2zM622,678.4h2v1.2h-2zM658,695.1h3v1.2h-3zM709,688.7h2v1.5h-2zM614,683.3h3v1.2h-3zM609,676.6h3v1.2h-3zM616,686.7h2v2h-2zM626,672.9h3v2h-3zM699,692.1h4v1.5h-4zM677,682.8h2v1.2h-2zM611,688.2h2v2h-2zM652,671.6h2v1.2h-2zM673,678.6h1.5v1.2h-1.5zM623,682.4h2v2h-2zM694,683.3h4v1.5h-4zM653,684.7h1.5v1.5h-1.5zM656,678.0h1.5v1.2h-1.5zM679,687.2h4v2h-4zM638,688.0h3v1.2h-3zM662,681.7h1.5v2h-1.5zM614,677.6h4v1.2h-4zM642,671.8h4v1.5h-4zM609,683.6h4v2h-4zM660,685.0h4v1.5h-4zM668,690.9h2v2h-2zM641,682.4h1.5v2h-1.5zM607,679.8h1.5v2h-1.5zM660,694.4h1.5v1.2h-1.5zM637,685.1h2v1.2h-2zM613,681.3h2v1.2h-2zM668,681.1h1.5v2h-1.5zM640,672.8h4v1.5h-4zM624,682.8h4v2h-4zM613,669.4h1.5v1.2h-1.5zM681,672.2h1.5v2h-1.5zM629,669.5h3v1.2h-3zM688,695.1h3v1.5h-3zM648,676.2h2v1.5h-2zM686,682.1h2v1.5h-2zM695,694.4h3v2h-3zM708,663.1h2v1.5h-2zM657,680.0h4v1.2h-4zM633,687.9h2v1.5h-2zM710,681.1h2v1.5h-2zM666,673.3h1.5v1.2h-1.5zM668,676.0h2v1.5h-2zM670,682.3h3v1.2h-3zM658,683.1h4v1.2h-4zM685,678.5h4v2h-4zM662,671.9h2v1.2h-2zM639,694.8h1.5v2h-1.5zM652,691.3h2v2h-2zM610,684.8h2v1.5h-2zM655,686.0h1.5v1.2h-1.5zM647,676.8h2v2h-2zM700,678.9h4v1.2h-4zM631,673.7h3v1.5h-3zM701,685.9h4v1.2h-4zM666,682.1h4v1.2h-4zM647,671.7h4v2h-4zM707,670.8h3v1.2h-3zM675,678.1h3v1.5h-3zM649,677.2h1.5v1.5h-1.5zM622,691.3h1.5v1.5h-1.5zM666,676.9h2v1.5h-2zM643,676.4h1.5v1.2h-1.5zM667,682.2h4v1.5h-4zM644,677.5h2v1.5h-2zM730,691.6h3v1.5h-3zM631,674.1h2v1.2h-2zM660,681.4h2v1.5h-2zM621,688.9h2v1.5h-2zM661,676.2h2v1.2h-2zM640,680.5h2v1.2h-2zM648,687.2h1.5v1.2h-1.5zM615,670.1h3v1.5h-3zM659,694.7h2v1.2h-2zM700,684.0h2v1.2h-2zM648,688.2h3v1.2h-3zM686,686.3h3v1.2h-3zM625,685.2h2v1.2h-2zM645,682.0h2v1.2h-2zM652,688.0h2v1.5h-2zM643,680.2h2v1.5h-2zM654,672.6h3v1.2h-3zM687,683.5h1.5v1.2h-1.5zM617,680.0h2v1.2h-2zM684,685.4h3v1.5h-3zM659,677.6h3v2h-3zM646,685.0h2v1.2h-2zM722,693.8h3v1.5h-3zM657,681.9h4v1.2h-4zM625,673.2h1.5v2h-1.5zM622,672.0h4v1.2h-4zM645,678.0h2v2h-2zM716,684.3h2v2h-2zM661,689.7h1.5v1.5h-1.5zM657,682.7h3v1.2h-3zM670,676.3h2v2h-2zM659,683.3h1.5v2h-1.5zM670,686.3h3v1.2h-3zM683,683.5h3v2h-3zM700,680.5h2v1.2h-2zM666,677.2h3v1.5h-3zM667,697.4h2v1.2h-2zM631,684.3h1.5v2h-1.5zM642,683.8h1.5v1.2h-1.5zM636,677.9h3v1.5h-3zM608,677.1h2v1.5h-2zM656,684.3h3v1.2h-3zM752,668.5h2v2h-2zM632,690.8h2v1.2h-2zM643,682.2h3v1.5h-3zM654,689.4h2v1.2h-2zM679,679.6h3v1.2h-3zM722,685.6h1.5v1.2h-1.5zM665,679.6h2v1.2h-2zM621,684.8h2v2h-2zM633,674.6h1.5v1.5h-1.5zM657,690.5h4v2h-4zM677,667.8h4v1.2h-4zM616,684.4h2v2h-2zM608,689.7h2v2h-2zM658,687.2h4v1.5h-4zM649,678.7h1.5v2h-1.5zM646,676.9h2v1.2h-2zM628,683.0h2v1.5h-2zM709,678.1h2v1.5h-2zM727,690.2h4v1.5h-4zM641,683.0h2v1.5h-2zM652,674.9h3v1.5h-3zM671,684.3h2v1.5h-2zM684,686.1h3v2h-3zM644,682.2h4v1.5h-4zM694,678.0h2v1.5h-2zM645,674.3h2v1.5h-2zM638,671.9h2v1.5h-2zM599,693.2h2v2h-2zM627,673.8h4v1.2h-4zM613,690.3h2v1.2h-2zM674,673.1h4v1.2h-4zM657,682.1h4v1.5h-4zM651,675.9h1.5v1.2h-1.5zM662,678.6h2v1.2h-2zM664,684.6h2v1.2h-2zM668,681.4h1.5v1.2h-1.5zM672,685.7h4v1.5h-4zM641,687.1h3v1.5h-3zM618,693.9h2v1.2h-2zM654,683.3h1.5v2h-1.5zM672,680.4h2v1.5h-2zM637,681.0h4v2h-4zM673,670.8h3v1.5h-3zM653,682.1h2v1.2h-2zM660,678.3h4v1.2h-4zM673,690.5h3v1.2h-3zM612,672.6h3v2h-3zM650,681.4h4v1.2h-4zM690,686.8h2v1.5h-2zM616,680.9h2v2h-2zM677,682.6h1.5v1.2h-1.5zM633,680.6h3v2h-3zM662,684.9h2v2h-2zM669,678.9h1.5v1.2h-1.5zM627,682.4h2v1.5h-2zM635,690.5h1.5v2h-1.5zM644,686.0h2v2h-2zM657,685.0h2v1.5h-2zM683,682.1h4v2h-4zM625,680.2h3v2h-3zM650,683.4h1.5v2h-1.5zM627,685.9h2v2h-2zM620,680.4h3v2h-3zM611,686.0h4v1.5h-4zM665,670.7h2v2h-2zM707,684.5h1.5v2h-1.5zM670,679.4h4v1.2h-4zM700,684.8h1.5v1.5h-1.5zM621,670.4h2v1.5h-2zM637,680.5h1.5v2h-1.5zM665,680.5h2v2h-2zM665,683.3h1.5v1.5h-1.5zM675,687.9h3v1.2h-3zM657,687.4h3v2h-3zM646,683.8h2v1.5h-2zM671,680.4h2v2h-2zM702,677.2h3v1.5h-3zM658,685.1h2v1.5h-2zM638,683.7h2v2h-2zM683,696.4h1.5v2h-1.5zM642,685.2h2v2h-2zM559,684.8h2v2h-2zM646,684.6h2v2h-2zM668,687.3h1.5v1.2h-1.5zM651,680.6h2v2h-2zM664,681.4h2v1.2h-2zM689,671.2h2v1.5h-2zM641,689.5h3v1.5h-3zM639,696.2h1.5v2h-1.5zM617,685.9h4v1.2h-4zM674,672.5h1.5v2h-1.5zM664,684.3h2v1.5h-2zM627,680.8h3v1.5h-3zM682,687.0h2v2h-2zM668,675.6h2v1.5h-2zM668,678.5h4v2h-4zM703,674.9h4v1.5h-4zM689,678.6h3v2h-3zM670,677.7h2v1.5h-2zM655,684.0h2v1.2h-2zM661,680.2h2v1.2h-2zM627,676.0h1.5v1.2h-1.5zM684,673.8h2v1.5h-2zM681,679.4h4v1.5h-4zM643,686.4h2v2h-2zM684,675.0h1.5v2h-1.5zM604,674.6h4v1.2h-4zM622,681.7h2v1.2h-2zM665,688.9h1.5v2h-1.5zM662,680.1h4v2h-4zM609,685.3h3v1.2h-3zM666,685.9h4v2h-4zM641,684.6h4v1.2h-4zM668,694.2h3v1.2h-3zM618,688.0h3v1.2h-3zM609,698.8h4v2h-4zM692,679.7h4v1.2h-4zM646,677.8h3v2h-3zM671,678.7h1.5v2h-1.5zM604,677.5h4v1.5h-4zM665,681.7h4v1.2h-4zM706,673.6h2v2h-2zM637,681.9h2v1.2h-2zM675,686.7h1.5v1.5h-1.5zM687,688.5h4v1.5h-4zM657,685.5h3v1.2h-3zM658,681.4h2v2h-2zM683,690.8h4v1.5h-4zM662,693.0h2v2h-2zM685,692.7h4v2h-4zM645,670.4h4v2h-4zM668,693.1h3v2h-3zM728,686.1h3v1.2h-3zM701,670.8h4v2h-4zM631,683.9h2v2h-2zM663,689.0h3v2h-3zM656,685.3h2v1.5h-2zM634,686.5h2v1.2h-2zM632,675.7h2v1.2h-2zM641,679.2h2v1.2h-2zM602,687.2h4v1.5h-4zM630,681.9h4v1.2h-4zM617,682.4h4v1.2h-4zM658,687.0h3v1.2h-3zM630,684.5h3v1.5h-3zM626,689.0h3v2h-3zM692,691.6h4v2h-4zM717,681.5h3v1.5h-3zM605,680.4h3v1.5h-3zM641,678.4h1.5v2h-1.5zM674,685.9h3v1.5h-3zM614,675.8h2v1.2h-2zM624,679.0h2v1.5h-2zM706,690.2h1.5v2h-1.5zM639,687.7h3v1.5h-3zM611,691.4h2v2h-2zM583,678.0h3v1.2h-3zM639,686.6h4v2h-4zM661,676.1h2v1.5h-2zM708,685.9h4v1.2h-4zM650,686.8h3v1.2h-3zM684,678.6h1.5v1.2h-1.5zM668,691.3h2v1.2h-2zM647,685.2h3v1.5h-3zM716,693.0h1.5v1.2h-1.5zM586,676.4h1.5v1.2h-1.5zM636,682.7h3v2h-3zM644,682.9h2v2h-2zM674,684.9h1.5v1.2h-1.5zM660,682.6h2v2h-2zM648,677.3h3v1.2h-3zM672,683.7h2v2h-2zM675,679.4h1.5v1.5h-1.5zM640,686.9h3v1.2h-3zM648,681.2h2v1.2h-2zM663,684.4h2v2h-2zM654,678.7h4v2h-4zM651,679.5h3v2h-3zM666,672.8h3v1.5h-3zM687,675.0h2v2h-2zM594,690.5h1.5v2h-1.5zM618,680.2h3v1.2h-3zM654,680.4h4v1.2h-4zM672,675.9h2v2h-2zM621,687.5h2v1.5h-2zM726,676.9h4v1.2h-4zM642,686.8h2v1.2h-2zM670,669.9h1.5v2h-1.5zM663,761.7h2v2h-2zM590,754.2h4v2h-4zM622,764.8h1.5v1.5h-1.5zM713,747.9h1.5v1.2h-1.5zM609,759.9h2v2h-2zM626,763.4h1.5v1.2h-1.5zM643,762.2h1.5v2h-1.5zM701,761.5h3v2h-3zM688,759.4h2v1.2h-2zM527,763.2h2v1.2h-2zM534,767.2h2v2h-2zM716,752.3h4v1.5h-4zM680,763.4h2v1.5h-2zM654,755.8h2v1.5h-2zM662,760.6h1.5v2h-1.5zM694,746.5h2v1.2h-2zM645,758.3h2v1.5h-2zM652,757.0h3v1.2h-3zM574,758.2h1.5v1.2h-1.5zM537,767.6h1.5v1.2h-1.5zM617,753.9h2v1.5h-2zM695,765.2h4v1.2h-4zM719,758.7h2v2h-2zM574,756.0h2v1.2h-2zM709,765.0h2v1.5h-2zM574,750.5h1.5v1.2h-1.5zM554,760.4h1.5v2h-1.5zM600,767.8h4v1.5h-4zM564,759.2h2v2h-2zM533,762.9h3v1.2h-3zM656,757.0h2v1.5h-2zM553,766.7h1.5v2h-1.5zM586,752.6h3v1.5h-3zM623,755.2h2v2h-2zM596,753.6h4v1.5h-4zM554,762.9h1.5v1.5h-1.5zM599,749.9h3v2h-3zM579,752.6h2v1.5h-2zM640,761.3h2v1.2h-2zM615,754.1h2v1.5h-2zM651,747.8h2v1.5h-2zM717,759.6h2v2h-2zM719,765.2h2v2h-2zM560,763.2h2v2h-2zM571,764.8h1.5v1.2h-1.5zM635,767.4h2v2h-2zM626,755.4h1.5v2h-1.5zM580,756.4h1.5v1.2h-1.5zM661,767.9h1.5v1.5h-1.5zM538,767.5h2v1.5h-2zM706,764.2h2v2h-2zM643,757.9h2v1.2h-2zM639,748.5h2v1.2h-2zM564,766.5h1.5v1.5h-1.5zM642,766.5h3v1.5h-3zM726,745.5h1.5v1.2h-1.5zM644,764.9h2v2h-2zM551,759.0h2v2h-2zM525,765.0h3v2h-3zM631,767.5h3v1.2h-3zM597,764.8h2v1.5h-2zM633,764.4h2v1.2h-2zM552,755.6h1.5v1.2h-1.5zM584,757.7h4v2h-4zM540,758.0h1.5v2h-1.5zM532,767.8h3v1.2h-3zM569,767.7h2v1.2h-2zM681,761.3h3v2h-3zM601,760.2h2v2h-2zM726,754.8h1.5v1.5h-1.5zM725,767.8h2v1.2h-2zM534,765.5h1.5v1.5h-1.5zM677,766.1h2v1.2h-2zM627,764.9h3v1.2h-3zM663,763.5h1.5v2h-1.5zM627,759.6h2v2h-2zM529,755.5h2v2h-2zM684,755.9h2v2h-2zM528,757.6h2v2h-2zM604,764.8h2v2h-2zM564,767.4h2v1.5h-2zM521,758.1h2v2h-2zM603,766.8h2v1.5h-2zM590,764.3h2v2h-2zM659,766.4h3v1.2h-3zM552,759.0h1.5v1.2h-1.5zM633,747.8h1.5v1.5h-1.5zM624,766.8h3v1.5h-3zM560,762.9h3v1.5h-3zM533,758.8h4v1.5h-4zM546,759.2h1.5v2h-1.5zM558,764.0h1.5v2h-1.5zM684,753.6h2v1.2h-2zM566,760.7h2v1.5h-2zM555,763.6h2v1.2h-2zM723,759.9h3v1.2h-3zM521,755.8h2v2h-2zM709,760.1h2v2h-2zM544,766.6h2v1.2h-2zM552,764.3h2v1.2h-2zM702,760.1h4v2h-4zM612,767.8h4v2h-4zM561,757.7h2v1.2h-2zM598,766.8h4v2h-4zM642,766.8h4v1.2h-4zM625,760.9h3v1.5h-3zM658,763.6h2v1.2h-2zM680,757.8h3v1.5h-3zM628,767.9h4v2h-4zM598,747.5h2v1.5h-2zM604,763.7h3v1.5h-3zM672,751.9h2v2h-2zM614,763.2h2v1.2h-2zM677,762.0h2v1.2h-2zM725,754.6h2v2h-2zM596,761.9h1.5v1.5h-1.5zM634,763.0h3v2h-3zM629,760.3h2v1.2h-2zM591,753.9h2v1.5h-2zM541,765.5h2v1.5h-2zM706,763.4h2v1.5h-2zM700,766.7h3v1.5h-3zM608,758.5h2v2h-2zM553,745.6h2v1.2h-2zM712,763.1h2v1.2h-2zM609,761.5h2v1.2h-2zM681,764.8h2v1.5h-2zM626,764.8h4v1.5h-4zM725,763.5h1.5v2h-1.5zM597,764.4h2v1.5h-2zM546,754.1h2v1.2h-2zM641,764.9h4v2h-4zM568,756.5h2v1.2h-2zM618,759.8h4v1.5h-4zM545,758.2h4v1.2h-4zM626,763.3h1.5v1.2h-1.5zM564,764.5h2v1.2h-2zM708,759.3h1.5v1.5h-1.5zM725,766.9h2v1.5h-2zM642,750.3h3v2h-3zM528,763.3h2v1.5h-2zM681,752.3h3v1.5h-3zM725,759.7h2v2h-2zM650,765.0h4v1.5h-4zM634,755.7h1.5v1.5h-1.5zM678,757.5h3v1.2h-3zM585,758.5h1.5v1.2h-1.5zM708,758.0h2v1.5h-2zM521,759.6h2v2h-2zM597,762.7h2v1.2h-2zM626,759.3h4v1.2h-4zM566,767.7h3v1.5h-3zM696,758.8h2v1.5h-2zM678,761.1h4v2h-4zM597,758.1h4v2h-4zM588,759.3h2v2h-2zM696,763.1h2v1.2h-2zM604,760.1h2v2h-2zM561,759.7h2v1.2h-2zM556,766.3h3v1.2h-3zM693,757.7h1.5v1.5h-1.5zM566,757.6h2v2h-2zM604,757.1h2v2h-2zM556,765.0h2v2h-2zM559,764.0h4v1.2h-4zM657,758.2h2v1.5h-2zM635,761.1h4v1.2h-4zM548,760.3h2v1.5h-2zM661,756.1h4v1.2h-4zM660,764.4h2v2h-2zM546,761.7h4v1.2h-4zM691,759.6h1.5v1.2h-1.5zM647,747.5h4v2h-4zM551,763.7h1.5v1.2h-1.5zM708,766.1h4v1.2h-4zM612,767.4h3v2h-3zM570,764.8h2v2h-2zM525,760.9h2v1.5h-2zM534,756.7h1.5v1.2h-1.5zM553,762.5h2v2h-2zM578,750.9h2v1.5h-2zM645,758.6h2v2h-2zM713,762.6h2v1.5h-2zM539,754.4h4v1.5h-4zM647,764.8h4v1.5h-4zM598,764.2h3v1.2h-3zM715,766.7h4v1.2h-4zM548,761.0h2v1.5h-2zM529,760.0h2v1.5h-2zM626,762.6h4v1.5h-4zM526,767.7h2v1.5h-2zM564,753.1h2v1.5h-2zM672,763.0h4v1.2h-4zM608,760.3h2v1.5h-2zM722,762.5h2v1.5h-2zM639,746.9h1.5v1.5h-1.5zM577,761.2h3v2h-3zM640,760.2h2v1.5h-2zM611,751.9h2v1.2h-2zM635,767.8h4v2h-4zM650,757.0h2v2h-2zM699,756.9h3v1.5h-3zM611,757.7h2v1.2h-2zM552,748.3h2v2h-2zM707,762.7h3v1.5h-3zM578,756.2h1.5v1.2h-1.5zM670,765.1h4v2h-4zM560,763.5h4v1.5h-4zM694,747.4h2v1.5h-2zM528,765.8h4v1.2h-4zM632,764.8h2v2h-2zM671,752.6h2v2h-2zM556,765.6h1.5v2h-1.5zM553,764.5h2v1.2h-2zM573,761.8h1.5v2h-1.5zM701,753.1h1.5v1.2h-1.5zM572,762.1h1.5v1.5h-1.5zM622,764.5h2v1.2h-2zM582,759.6h3v1.2h-3zM677,765.9h1.5v1.2h-1.5zM588,757.2h1.5v1.2h-1.5zM563,759.3h1.5v1.5h-1.5zM677,750.3h3v1.2h-3zM585,757.0h1.5v2h-1.5zM717,758.3h3v2h-3zM680,767.3h3v1.5h-3zM557,752.2h3v1.2h-3zM657,757.5h4v1.2h-4zM616,762.0h4v2h-4zM700,764.9h1.5v2h-1.5zM597,749.8h1.5v1.5h-1.5zM650,751.0h2v1.2h-2zM618,762.8h2v1.2h-2zM654,762.4h1.5v2h-1.5zM582,757.4h4v2h-4zM568,758.3h1.5v1.2h-1.5zM530,765.7h2v1.5h-2zM685,766.7h2v1.2h-2zM539,749.5h2v1.2h-2zM682,744.9h2v2h-2zM557,759.6h3v1.2h-3zM545,761.5h3v1.5h-3zM621,764.0h2v1.5h-2zM722,766.5h2v1.5h-2zM654,763.5h4v1.5h-4zM693,760.2h4v1.2h-4zM656,766.4h2v1.5h-2zM601,747.6h4v1.5h-4zM595,763.6h2v1.5h-2zM707,764.7h2v1.2h-2zM637,766.0h3v2h-3zM710,766.8h2v2h-2zM611,767.7h1.5v1.5h-1.5zM583,763.8h1.5v1.5h-1.5zM596,766.8h1.5v1.2h-1.5zM625,764.3h1.5v1.2h-1.5zM635,765.3h2v1.5h-2zM612,765.9h4v1.2h-4zM585,756.7h1.5v2h-1.5zM716,765.4h3v1.5h-3zM644,765.3h1.5v2h-1.5zM664,764.9h4v2h-4zM699,764.7h4v1.5h-4zM524,761.3h3v2h-3zM588,755.8h4v1.2h-4zM540,764.0h4v1.5h-4zM591,762.7h4v1.5h-4zM670,762.2h2v1.2h-2zM606,762.4h4v1.2h-4zM726,763.5h3v1.5h-3zM717,758.0h2v2h-2zM655,755.3h4v1.2h-4zM537,764.3h2v2h-2zM648,763.8h2v1.5h-2zM616,767.1h1.5v1.2h-1.5zM619,764.1h4v2h-4zM607,750.0h3v1.5h-3zM663,754.2h2v1.5h-2zM659,745.2h2v1.5h-2zM657,758.7h3v2h-3zM602,764.2h4v1.5h-4zM726,764.9h3v1.2h-3zM695,767.1h4v1.2h-4zM693,753.2h2v1.5h-2zM619,764.7h2v2h-2zM659,760.0h2v1.2h-2zM552,762.3h2v1.2h-2zM629,765.4h2v2h-2zM635,751.7h2v1.5h-2zM537,765.9h2v1.5h-2zM711,762.0h3v1.2h-3zM612,766.0h3v1.2h-3zM540,759.4h2v1.2h-2zM643,764.9h3v2h-3zM607,766.0h3v1.5h-3zM564,764.6h1.5v1.5h-1.5zM639,751.0h4v1.2h-4zM651,764.6h4v2h-4zM621,762.5h4v1.5h-4zM575,760.8h3v1.2h-3zM560,765.0h2v2h-2zM610,756.7h2v1.5h-2zM638,758.5h2v2h-2zM541,749.7h2v1.5h-2zM667,756.2h2v1.5h-2zM682,762.6h3v1.5h-3zM616,767.5h1.5v2h-1.5zM649,760.1h1.5v1.2h-1.5zM675,761.8h2v1.2h-2zM563,755.3h2v1.2h-2zM717,758.2h1.5v2h-1.5zM694,767.8h1.5v1.2h-1.5zM613,765.9h3v2h-3zM606,767.1h1.5v1.5h-1.5zM568,766.1h3v1.2h-3zM591,765.8h3v1.5h-3zM602,761.5h2v1.2h-2zM646,759.5h3v1.2h-3zM566,765.9h1.5v1.5h-1.5zM699,767.8h3v2h-3zM623,765.1h3v2h-3zM586,765.1h3v2h-3zM574,765.6h4v2h-4zM598,765.7h3v1.2h-3zM604,756.3h4v2h-4zM525,759.3h4v1.5h-4zM701,752.9h1.5v2h-1.5zM703,766.7h4v1.5h-4zM659,757.8h2v1.5h-2zM640,767.8h3v1.2h-3zM582,767.1h2v1.5h-2zM633,755.6h4v1.5h-4zM710,742.3h1.5v1.5h-1.5zM616,756.7h4v2h-4zM671,755.7h3v1.5h-3zM652,765.5h4v1.2h-4zM667,766.6h2v2h-2zM702,767.5h1.5v1.2h-1.5zM526,758.4h2v2h-2zM599,755.0h2v2h-2zM667,755.9h2v2h-2zM642,765.8h1.5v1.2h-1.5zM611,751.3h2v1.5h-2zM556,753.5h4v1.5h-4zM715,760.9h3v1.2h-3zM715,767.2h2v1.2h-2zM603,748.3h1.5v1.5h-1.5zM589,761.9h2v1.5h-2zM548,763.4h4v1.2h-4zM697,754.8h3v2h-3zM676,750.9h1.5v1.2h-1.5zM705,766.6h2v1.5h-2zM568,749.9h2v1.2h-2zM707,767.9h2v1.5h-2zM652,755.1h2v1.2h-2zM712,745.4h2v2h-2zM662,761.0h4v1.5h-4zM577,752.0h2v2h-2zM633,756.2h2v1.2h-2zM664,754.6h1.5v2h-1.5zM702,765.7h1.5v1.5h-1.5zM587,760.7h2v2h-2zM617,765.9h1.5v1.2h-1.5zM593,763.1h2v1.2h-2zM563,767.0h3v1.2h-3zM546,767.6h3v2h-3zM531,756.2h1.5v1.2h-1.5zM603,763.6h2v1.2h-2zM642,760.4h3v2h-3zM595,764.7h2v1.5h-2zM534,761.5h1.5v1.2h-1.5zM611,764.3h3v1.5h-3zM559,756.6h2v1.5h-2zM649,756.7h1.5v1.2h-1.5zM614,751.6h2v1.5h-2zM574,760.7h1.5v1.2h-1.5zM624,767.4h3v1.2h-3zM726,762.8h3v1.5h-3zM694,760.0h1.5v2h-1.5zM652,766.2h1.5v1.5h-1.5zM657,764.2h2v1.5h-2zM613,757.9h3v1.5h-3zM710,750.9h3v2h-3zM721,756.5h2v1.2h-2zM712,756.4h3v2h-3zM726,753.9h1.5v1.5h-1.5zM696,764.3h2v1.5h-2zM677,760.1h3v1.5h-3zM672,763.6h1.5v1.2h-1.5zM652,755.1h2v1.5h-2zM598,757.9h3v2h-3zM610,762.0h3v1.2h-3zM567,766.4h3v1.5h-3zM658,763.9h4v1.5h-4zM652,767.2h4v2h-4zM726,755.4h2v1.5h-2zM600,753.4h1.5v1.5h-1.5zM637,768.0h2v2h-2zM531,763.5h1.5v1.2h-1.5zM569,761.0h2v1.5h-2zM707,765.0h1.5v1.2h-1.5zM659,766.1h1.5v1.5h-1.5zM552,753.3h2v1.2h-2zM549,765.4h2v2h-2zM609,765.4h2v1.2h-2zM699,765.4h3v2h-3zM671,750.0h2v1.2h-2zM617,749.2h2v1.5h-2zM717,755.7h2v2h-2zM669,759.1h3v2h-3zM534,765.2h2v2h-2zM569,759.9h1.5v2h-1.5zM590,765.9h1.5v1.2h-1.5zM612,750.8h3v2h-3zM670,765.9h2v1.5h-2zM563,761.8h2v2h-2zM678,753.2h3v1.2h-3zM725,760.7h1.5v2h-1.5zM702,756.9h3v2h-3zM680,765.9h2v1.5h-2zM563,765.6h2v1.5h-2zM724,756.9h3v1.2h-3zM588,765.6h2v2h-2zM663,754.3h2v2h-2zM678,764.0h2v1.5h-2zM631,756.1h4v1.2h-4zM672,765.5h2v1.2h-2zM540,760.7h2v2h-2zM560,762.4h2v1.2h-2zM598,760.6h4v1.2h-4zM720,763.0h3v1.5h-3zM654,753.6h3v1.5h-3zM679,759.2h2v1.5h-2zM657,749.7h1.5v1.2h-1.5zM589,765.4h3v1.5h-3zM707,762.6h1.5v2h-1.5zM694,767.5h2v1.2h-2zM564,766.6h1.5v2h-1.5zM596,763.9h2v1.2h-2zM640,764.1h3v1.5h-3zM583,752.7h1.5v1.5h-1.5zM608,765.5h4v1.5h-4zM637,760.0h2v1.2h-2zM704,766.8h4v2h-4zM541,751.2h1.5v1.2h-1.5zM666,759.5h2v1.2h-2zM631,763.8h3v1.5h-3zM658,760.8h2v2h-2zM650,745.2h2v1.2h-2zM668,756.4h1.5v1.2h-1.5zM577,764.2h4v1.2h-4zM718,764.6h1.5v2h-1.5zM650,765.0h2v2h-2zM679,764.4h3v1.2h-3zM714,763.2h2v1.2h-2zM721,760.3h3v1.2h-3zM561,744.0h3v2h-3zM567,767.6h1.5v1.5h-1.5zM719,755.4h2v1.5h-2zM662,758.6h3v1.2h-3zM676,747.8h3v1.5h-3zM618,762.4h2v1.5h-2zM690,765.2h2v1.2h-2zM562,762.9h2v2h-2zM641,762.5h1.5v2h-1.5zM537,754.6h1.5v2h-1.5zM546,757.7h4v2h-4zM689,766.3h2v1.2h-2zM605,757.9h2v1.2h-2zM616,763.6h2v2h-2zM699,767.9h4v1.5h-4zM547,765.9h3v1.5h-3zM717,758.6h1.5v2h-1.5zM728,767.8h1.5v1.5h-1.5zM718,760.1h1.5v1.5h-1.5zM665,755.7h3v1.5h-3zM556,766.4h2v2h-2zM702,759.0h3v1.5h-3zM575,767.3h2v2h-2zM540,758.0h4v2h-4zM627,761.7h1.5v1.2h-1.5zM588,767.6h2v1.2h-2zM546,765.9h3v1.5h-3zM701,766.8h2v1.5h-2zM583,767.2h4v2h-4zM644,761.9h3v1.2h-3zM529,762.2h2v1.2h-2zM672,765.9h3v1.2h-3zM544,767.9h4v2h-4zM640,759.9h2v2h-2zM655,761.3h3v2h-3zM677,758.0h4v1.2h-4zM547,759.6h3v1.2h-3zM637,763.8h2v2h-2zM601,760.2h4v1.2h-4zM612,764.2h2v2h-2zM544,762.4h1.5v1.5h-1.5zM528,767.9h4v1.2h-4zM551,754.6h3v2h-3zM587,763.5h1.5v1.2h-1.5zM694,767.6h3v1.5h-3zM601,761.1h2v1.2h-2zM686,756.4h1.5v1.5h-1.5zM643,754.6h3v1.2h-3zM721,762.4h3v2h-3zM641,765.1h4v1.2h-4zM541,760.0h2v2h-2zM713,763.0h1.5v2h-1.5zM568,761.5h2v1.2h-2zM611,758.2h2v2h-2zM670,757.5h1.5v1.5h-1.5zM701,749.1h1.5v1.2h-1.5zM572,762.9h4v1.5h-4zM695,765.8h3v1.2h-3zM587,763.0h4v2h-4zM551,750.7h4v1.5h-4zM573,761.8h2v1.5h-2zM574,764.3h3v1.2h-3zM709,765.0h2v1.2h-2zM671,762.9h2v1.5h-2zM757,649.3h3v1.2h-3zM749,655.6h1.5v1.5h-1.5zM759,650.0h4v1.5h-4zM733,649.8h3v1.5h-3zM759,654.8h3v2h-3zM705,655.0h2v1.2h-2zM642,649.0h4v1.5h-4zM610,654.2h3v1.2h-3zM622,650.9h2v2h-2zM700,652.7h4v1.2h-4zM787,653.0h1.5v2h-1.5zM744,647.1h4v2h-4zM728,650.5h4v1.5h-4zM766,650.8h1.5v2h-1.5zM715,649.3h4v1.5h-4zM692,651.8h2v1.5h-2zM788,651.3h2v2h-2zM663,648.5h1.5v2h-1.5zM646,653.4h2v1.5h-2zM659,644.5h4v1.2h-4zM652,651.2h3v1.5h-3zM713,650.0h3v1.5h-3zM778,651.0h4v2h-4zM663,652.5h4v1.2h-4zM710,653.3h4v1.5h-4zM634,651.5h3v2h-3zM694,655.6h1.5v2h-1.5zM667,652.2h2v1.2h-2zM718,651.3h2v2h-2zM784,649.7h4v2h-4zM638,653.8h4v2h-4zM663,648.7h2v1.2h-2zM691,649.5h2v1.5h-2zM634,651.5h2v2h-2zM653,648.0h4v1.5h-4zM719,654.2h3v2h-3zM776,651.3h4v1.2h-4zM712,647.9h4v1.2h-4zM637,648.6h1.5v2h-1.5zM628,655.4h2v2h-2zM779,645.7h2v1.5h-2zM620,653.9h2v2h-2zM632,648.9h3v1.5h-3zM727,654.0h1.5v1.5h-1.5zM665,650.7h2v1.2h-2zM674,649.9h4v1.5h-4zM733,649.0h4v1.5h-4zM691,653.5h2v1.2h-2zM754,650.6h2v2h-2zM784,652.0h1.5v1.2h-1.5zM756,647.9h4v1.2h-4zM684,650.4h4v2h-4zM626,652.0h2v2h-2zM690,650.4h4v2h-4zM610,651.1h2v1.2h-2zM678,652.8h2v1.2h-2zM763,653.6h4v1.5h-4zM784,647.7h2v1.2h-2zM783,651.8h2v2h-2zM742,647.3h3v1.2h-3zM675,653.8h3v1.2h-3zM711,648.4h4v1.5h-4zM783,656.3h3v2h-3zM763,651.2h2v1.2h-2zM671,650.0h2v2h-2zM789,646.5h3v1.2h-3zM775,649.9h3v1.5h-3zM652,651.2h3v2h-3zM624,655.0h4v1.5h-4zM714,648.4h4v2h-4zM707,646.2h2v1.5h-2zM624,651.4h1.5v2h-1.5zM672,652.8h2v1.2h-2zM650,652.9h2v1.5h-2zM614,650.9h4v1.5h-4zM664,651.8h4v1.5h-4zM718,649.7h2v1.5h-2zM692,654.9h2v1.5h-2zM617,647.6h2v2h-2zM765,651.7h1.5v2h-1.5zM757,649.4h2v1.5h-2zM743,651.1h4v1.2h-4zM669,646.2h3v2h-3zM745,648.3h2v1.5h-2zM774,650.0h2v1.2h-2zM716,652.9h1.5v1.5h-1.5zM708,650.2h4v1.2h-4zM610,643.9h2v1.5h-2zM706,652.8h1.5v1.2h-1.5zM780,650.5h2v2h-2zM711,648.9h3v2h-3zM656,653.5h1.5v1.5h-1.5zM685,652.8h2v1.2h-2zM715,650.3h2v2h-2zM738,650.4h2v1.2h-2zM706,650.1h2v1.5h-2zM628,655.0h3v1.5h-3zM753,649.9h2v2h-2zM706,650.5h3v2h-3zM750,654.0h2v1.5h-2zM721,646.9h1.5v1.2h-1.5zM708,648.9h4v1.2h-4zM636,653.4h2v1.5h-2zM684,649.7h4v1.5h-4zM687,652.1h4v1.2h-4zM633,651.0h3v2h-3zM765,652.1h1.5v1.2h-1.5zM718,650.0h2v1.5h-2zM613,649.3h4v1.2h-4zM787,651.8h2v1.2h-2zM725,651.2h1.5v1.5h-1.5zM715,652.8h1.5v1.5h-1.5zM688,656.8h3v1.5h-3zM736,650.8h2v1.5h-2zM753,651.5h1.5v1.5h-1.5zM711,652.1h3v1.2h-3zM623,651.3h2v1.2h-2zM720,655.4h3v1.5h-3zM786,650.0h3v1.5h-3zM643,651.9h3v1.5h-3zM709,657.5h4v1.2h-4zM669,646.1h2v2h-2zM723,650.9h3v2h-3zM779,649.1h3v2h-3zM727,652.1h2v1.5h-2zM622,649.7h2v1.2h-2zM696,650.9h3v1.2h-3zM683,647.5h4v1.2h-4zM704,653.7h2v1.2h-2zM746,657.7h2v1.5h-2zM669,651.9h2v2h-2zM778,654.5h2v1.2h-2zM779,655.0h4v1.2h-4zM617,649.9h2v1.2h-2zM720,651.4h3v2h-3zM760,649.9h3v1.5h-3zM788,655.9h4v2h-4zM691,648.3h4v1.2h-4zM638,653.0h3v1.5h-3zM713,647.6h4v1.5h-4zM614,649.8h1.5v1.2h-1.5zM773,653.0h1.5v2h-1.5zM685,654.1h1.5v1.2h-1.5zM658,653.6h3v1.2h-3zM768,647.5h2v1.5h-2zM764,650.3h1.5v2h-1.5zM668,658.1h3v2h-3zM749,651.1h4v2h-4zM640,647.5h1.5v1.2h-1.5zM642,650.3h2v1.2h-2zM641,653.5h1.5v1.5h-1.5zM688,651.0h2v2h-2zM790,647.1h4v1.2h-4zM748,651.1h2v1.5h-2zM647,645.4h2v1.5h-2zM617,652.8h2v2h-2zM680,651.7h3v1.2h-3zM626,656.8h1.5v1.5h-1.5zM707,646.0h1.5v2h-1.5zM735,651.4h1.5v1.2h-1.5zM405,772.3h4v1.2h-4zM481,772.3h3v1.5h-3zM431,756.3h2v2h-2zM459,770.3h2v1.5h-2zM434,759.6h2v1.2h-2zM470,761.9h3v1.5h-3zM518,753.2h4v2h-4zM448,757.3h1.5v2h-1.5zM527,763.0h1.5v1.2h-1.5zM495,758.5h2v1.2h-2zM421,766.7h2v1.5h-2zM507,769.4h3v1.2h-3zM506,756.6h2v1.5h-2zM434,749.3h2v1.5h-2zM419,756.0h4v1.5h-4zM486,761.8h2v1.2h-2zM517,757.4h3v1.2h-3zM416,763.3h4v1.5h-4zM473,766.5h4v2h-4zM488,766.1h4v2h-4zM505,751.9h2v2h-2zM512,760.0h2v1.2h-2zM515,767.7h1.5v1.2h-1.5zM473,767.0h3v1.5h-3zM522,761.4h3v1.2h-3zM433,771.1h3v1.2h-3zM455,757.9h2v1.2h-2zM483,761.2h2v2h-2zM501,754.7h3v2h-3zM524,741.5h2v1.2h-2zM424,755.9h2v2h-2zM486,767.0h2v1.2h-2zM477,760.4h1.5v2h-1.5zM474,761.7h4v1.2h-4zM414,750.8h3v2h-3zM525,773.9h2v2h-2zM451,754.3h2v2h-2zM470,766.1h1.5v1.5h-1.5zM499,763.9h3v1.2h-3zM456,770.9h3v1.2h-3zM496,773.1h3v2h-3zM435,767.4h2v1.5h-2zM504,761.1h3v2h-3zM522,772.4h3v1.5h-3zM446,769.8h4v1.5h-4zM439,763.3h3v1.5h-3zM410,767.5h2v1.5h-2zM465,756.9h4v1.5h-4zM451,762.9h4v1.2h-4zM526,763.0h2v1.2h-2zM446,757.1h3v2h-3zM503,772.5h1.5v1.2h-1.5zM417,763.8h3v1.5h-3zM450,768.5h4v1.5h-4zM476,760.0h4v2h-4zM509,761.8h2v1.5h-2zM490,761.3h4v2h-4zM409,758.2h2v1.5h-2zM454,755.2h4v1.5h-4zM426,762.4h4v1.2h-4zM429,760.9h4v1.2h-4zM523,770.0h3v1.2h-3zM529,751.3h2v1.2h-2zM415,761.6h1.5v1.5h-1.5zM464,762.5h3v1.5h-3zM434,764.8h2v1.5h-2zM416,767.2h2v2h-2zM465,752.5h4v1.2h-4zM429,761.9h3v1.5h-3zM494,762.8h2v2h-2zM510,761.3h2v2h-2zM511,765.2h2v2h-2zM421,762.2h4v2h-4zM524,765.8h2v1.5h-2zM401,765.1h2v1.5h-2zM437,773.9h1.5v1.5h-1.5zM528,768.3h3v1.2h-3zM433,764.9h1.5v1.2h-1.5zM432,766.8h3v1.2h-3zM414,761.2h3v1.5h-3zM467,763.0h2v1.5h-2zM402,757.6h4v1.5h-4zM412,762.0h2v1.2h-2zM496,754.7h1.5v1.2h-1.5zM431,757.5h3v2h-3zM446,771.1h1.5v2h-1.5zM416,754.1h3v1.5h-3zM412,761.6h2v2h-2zM411,756.9h2v1.5h-2zM477,765.7h4v1.2h-4zM526,764.4h3v1.2h-3zM478,759.3h1.5v1.2h-1.5zM428,768.6h4v2h-4zM401,769.0h1.5v1.2h-1.5zM526,761.6h1.5v1.2h-1.5zM503,767.5h2v2h-2zM528,764.1h2v2h-2zM455,758.1h4v2h-4zM405,765.5h1.5v1.2h-1.5zM496,764.6h2v1.5h-2zM495,756.9h3v1.2h-3zM476,766.9h2v1.2h-2zM474,766.1h3v1.5h-3zM475,756.7h4v2h-4zM455,774.7h4v1.5h-4zM402,766.3h2v1.2h-2zM513,761.4h3v1.5h-3zM519,770.6h1.5v1.5h-1.5zM415,763.2h2v1.5h-2zM499,763.2h3v1.2h-3zM446,761.7h2v1.2h-2zM440,775.3h4v2h-4zM481,776.3h2v1.5h-2zM480,764.4h2v2h-2zM439,758.4h1.5v2h-1.5zM460,765.5h1.5v1.2h-1.5zM428,761.9h4v1.5h-4zM520,763.8h4v2h-4zM519,753.7h2v1.2h-2zM460,763.6h3v1.5h-3zM400,759.2h4v1.2h-4zM466,765.7h3v1.5h-3zM521,762.2h1.5v1.5h-1.5zM491,759.0h4v1.2h-4zM485,760.1h3v2h-3zM509,762.0h4v1.2h-4zM406,772.8h4v1.2h-4zM425,772.7h1.5v1.5h-1.5zM460,764.4h2v1.2h-2zM513,756.1h2v1.2h-2zM415,774.5h4v1.5h-4zM514,756.7h1.5v2h-1.5zM475,764.6h2v1.5h-2zM492,767.7h2v1.2h-2zM500,774.6h4v1.5h-4zM522,768.4h3v1.2h-3zM442,772.3h4v2h-4zM517,755.2h3v2h-3zM442,756.2h3v2h-3zM436,752.6h3v1.5h-3zM493,762.6h3v1.5h-3zM486,766.1h1.5v1.5h-1.5zM462,775.3h2v1.2h-2zM411,767.2h3v1.2h-3zM513,762.4h4v1.5h-4zM463,759.8h2v2h-2zM476,769.1h2v1.5h-2zM511,765.5h4v2h-4zM509,758.4h4v2h-4zM403,762.8h2v1.5h-2zM405,777.3h2v1.2h-2zM464,761.6h2v1.5h-2zM457,765.1h2v1.5h-2zM508,764.7h4v1.2h-4zM433,756.4h1.5v2h-1.5zM489,765.5h3v1.5h-3zM471,763.9h2v1.2h-2zM489,760.2h4v1.2h-4zM465,761.7h1.5v1.5h-1.5zM403,767.0h4v2h-4zM526,760.6h1.5v1.2h-1.5zM447,770.3h1.5v2h-1.5zM465,773.4h2v1.5h-2zM511,758.8h1.5v2h-1.5zM510,763.6h2v1.5h-2zM528,759.9h2v2h-2zM448,763.6h4v1.5h-4zM427,755.5h4v2h-4zM495,754.9h2v2h-2zM447,758.0h3v1.2h-3zM425,760.4h4v2h-4zM496,760.1h2v1.2h-2zM499,774.8h2v1.5h-2zM493,759.4h4v1.5h-4zM507,765.4h4v1.2h-4zM513,752.8h1.5v1.5h-1.5zM463,761.8h3v2h-3zM408,757.3h1.5v1.5h-1.5zM443,777.2h2v1.5h-2zM447,770.0h1.5v2h-1.5zM427,768.7h4v1.5h-4zM485,756.3h3v1.2h-3zM427,759.1h3v1.5h-3zM406,761.5h3v1.2h-3zM511,756.6h4v1.2h-4zM511,743.5h4v1.5h-4zM414,751.2h2v1.5h-2zM504,764.5h2v1.2h-2zM524,763.4h4v1.5h-4zM425,765.5h2v1.2h-2zM445,764.1h2v1.5h-2zM428,758.1h4v2h-4zM416,768.5h2v1.5h-2zM429,757.0h4v2h-4zM446,747.9h3v1.2h-3zM438,749.4h3v1.2h-3zM445,750.9h2v1.2h-2zM518,752.5h2v1.2h-2zM508,751.4h4v1.5h-4zM411,764.5h1.5v2h-1.5zM464,770.0h4v1.5h-4zM496,753.1h2v1.5h-2zM523,755.0h1.5v1.5h-1.5zM501,769.1h2v1.5h-2zM448,756.7h2v1.2h-2zM408,761.6h4v1.2h-4zM524,775.9h2v1.5h-2zM403,758.7h2v1.2h-2zM527,768.8h4v1.5h-4zM457,755.1h3v2h-3zM419,756.6h1.5v1.5h-1.5zM513,760.3h4v2h-4zM514,759.5h2v1.2h-2zM508,770.8h2v2h-2zM420,762.3h2v1.5h-2zM521,759.6h2v1.5h-2zM424,757.7h2v1.2h-2zM482,773.8h1.5v2h-1.5zM411,759.9h1.5v2h-1.5zM461,754.1h3v2h-3zM472,754.7h1.5v1.5h-1.5zM515,766.0h4v1.5h-4zM406,773.2h3v2h-3zM407,757.6h2v2h-2zM404,761.6h4v2h-4zM402,757.8h1.5v1.2h-1.5zM429,765.3h4v2h-4zM457,761.3h2v1.2h-2zM453,765.5h1.5v1.2h-1.5zM509,748.3h3v1.2h-3zM428,759.7h4v1.5h-4zM428,763.5h3v1.2h-3zM451,759.1h3v2h-3zM438,762.3h1.5v1.5h-1.5zM448,752.7h4v2h-4zM431,762.0h3v1.2h-3zM526,768.0h1.5v2h-1.5zM463,760.0h4v2h-4zM459,752.1h4v2h-4zM514,769.6h1.5v1.2h-1.5zM431,755.2h2v1.2h-2zM405,756.7h4v1.2h-4zM412,753.7h3v2h-3zM403,770.4h2v2h-2zM466,754.4h3v1.2h-3zM490,760.1h1.5v2h-1.5zM458,759.8h3v1.5h-3zM448,759.8h4v1.2h-4zM469,762.3h4v1.2h-4zM447,751.2h3v1.2h-3zM462,764.8h2v2h-2zM467,758.5h2v1.5h-2zM454,765.9h1.5v1.5h-1.5zM452,754.8h3v1.5h-3zM492,755.3h3v1.2h-3zM428,769.9h2v1.5h-2zM502,761.0h1.5v1.2h-1.5zM427,766.1h2v1.2h-2zM467,767.4h4v1.5h-4zM423,763.5h2v1.2h-2zM989,671h3v1.5h-3zM894,675h9v1.5h-9zM977,671h9v2h-9zM989,680h3v3h-3zM902,685h3v1.5h-3zM944,650h6v1.5h-6zM972,662h9v3h-9zM912,652h3v2h-3zM937,690h2v2h-2zM968,686h4v1.5h-4zM977,655h2v1.5h-2zM964,651h3v2h-3zM881,654h4v2h-4zM890,672h4v3h-4zM969,674h9v1.5h-9zM901,696h3v2h-3zM900,665h3v2h-3zM920,649h2v2h-2zM949,691h2v2h-2zM982,674h3v3h-3zM951,698h4v2h-4zM907,690h2v2h-2zM956,676h2v2h-2zM881,675h9v1.5h-9zM999,656h9v2h-9zM939,656h6v2h-6zM970,648h4v2h-4zM946,648h2v3h-2zM936,688h9v3h-9zM889,691h3v2h-3zM912,654h6v1.5h-6zM888,692h3v1.5h-3zM976,684h6v3h-6zM988,690h4v2h-4zM968,683h6v3h-6zM942,676h4v3h-4zM981,692h4v1.5h-4zM941,678h9v1.5h-9zM990,663h6v2h-6zM922,651h4v2h-4zM935,656h4v3h-4zM984,661h6v2h-6zM944,683h9v2h-9zM962,654h2v2h-2zM930,652h3v2h-3zM970,685h9v1.5h-9zM967,650h2v2h-2zM963,666h3v2h-3zM977,671h3v2h-3zM891,696h2v1.5h-2zM947,654h3v2h-3zM987,655h4v1.5h-4zM954,668h9v2h-9zM915,700h6v2h-6zM997,694h2v2h-2zM962,696h9v1.5h-9zM915,667h4v1.5h-4zM893,694h9v3h-9zM919,655h9v3h-9zM914,662h3v1.5h-3z" fill="#101010"/>
<polygon points="112,1080 230,997 348,914 405,899 660,894 700,906 700,930 700,1010 560,1451 112,1451" fill="#22171a" />
<polygon points="940,881 1113,871.5 1375,861 1752,1025 1752,1451 1300,1451" fill="#21161a" />
<path d="M640,892.6 L979,878 L1375,1451 L501,1451 L657,1010 L668.5,940 Q670,912 652,900 Q646,895 640,892.6 Z" fill="#902214"/>
<clipPath id="cpRed"><polygon points="630,893 979,878 1375,1451 501,1451 657,1010 668,930 652,905"/></clipPath><clipPath id="cpPur"><polygon points="979,879 1113,871.5 1375,861 1752,1025 1752,1451 1375,1451"/></clipPath>
<g clip-path="url(#cpRed)" fill="none" stroke="#2e2a6e" stroke-linejoin="round">
<polyline points="775,1029 769,1033 764,1036 759,1040 754,1044 750,1048 746,1053 743,1057 742,1061 741,1066 740,1071 741,1075 742,1080 744,1085 746,1090 749,1095 752,1100 755,1105 759,1110 763,1115 768,1119 773,1124 780,1128 787,1132 795,1136 804,1140 814,1144 825,1148 836,1151" stroke-width="2" stroke-dasharray="22,2"/>
<polyline points="769,1025 762,1029 755,1033 749,1038 743,1042 738,1047 734,1052 731,1057 729,1062 728,1067 728,1073 729,1078 730,1084 732,1090 735,1096 738,1101 741,1107 745,1113 750,1118 755,1124 762,1129 770,1134 779,1139 789,1144 800,1148 813,1153 826,1157 840,1161 855,1165" stroke-width="2" stroke-dasharray="31,2"/>
<polyline points="764,1020 755,1025 747,1030 739,1035 733,1040 727,1045 722,1051 719,1057 717,1063 716,1069 716,1075 717,1082 718,1088 721,1095 723,1102 726,1108 730,1115 735,1121 742,1127 749,1133 759,1139 770,1145 782,1151 796,1156 811,1161 826,1166 843,1170 860,1175 877,1179" stroke-width="2" stroke-dasharray="40,2"/>
<polyline points="759,1016 749,1021 740,1026 731,1032 722,1038 716,1044 711,1050 707,1056 705,1063 704,1070 704,1078 704,1085 706,1093 708,1100 711,1108 715,1115 720,1123 727,1130 735,1137 746,1144 759,1150 773,1157 789,1163 807,1169 825,1175 844,1180 863,1185 884,1189 904,1193" stroke-width="2" stroke-dasharray="22,2"/>
<polyline points="756,1011 744,1017 732,1023 722,1029 713,1035 705,1042 699,1049 695,1056 693,1064 691,1072 691,1080 692,1089 693,1097 695,1106 698,1115 703,1123 710,1131 719,1139 731,1147 746,1155 762,1162 780,1170 800,1176 821,1183 842,1189 865,1195 888,1199 912,1203 937,1206" stroke-width="2" stroke-dasharray="31,2"/>
<polyline points="753,1007 739,1013 726,1019 714,1026 703,1033 695,1040 688,1048 684,1056 681,1065 679,1074 678,1083 678,1093 679,1102 681,1112 685,1122 692,1131 702,1140 715,1150 730,1158 748,1167 769,1175 791,1183 814,1191 838,1198 863,1204 890,1209 917,1213 947,1216 976,1217" stroke-width="2" stroke-dasharray="40,2"/>
<polyline points="751,1002 735,1008 720,1015 706,1022 694,1030 685,1038 677,1047 672,1056 669,1066 666,1076 665,1086 664,1097 665,1108 668,1119 673,1129 683,1140 696,1150 712,1160 732,1170 754,1180 778,1189 803,1198 830,1206 858,1213 888,1219 920,1223 953,1226 987,1226 1021,1225" stroke-width="2" stroke-dasharray="22,2"/>
<polyline points="742,1000 730,1005 719,1009 708,1014 698,1020 689,1025 681,1031 675,1037 669,1043 664,1049 661,1056 657,1063 655,1071 653,1078 651,1086 650,1094 649,1102 649,1110 651,1118 654,1126 659,1133 666,1141 675,1149 686,1157 698,1164 712,1172 727,1179 743,1187 761,1194 778,1201 797,1207 817,1213 837,1219 859,1224 882,1228 905,1231 930,1234" stroke-width="2" stroke-dasharray="31,2"/>
<polyline points="1173,1207 1197,1200 1219,1193 1239,1185 1258,1176 1273,1168 1285,1158 1295,1149 1301,1139 1305,1128 1307,1118" stroke-width="2" stroke-dasharray="14,2"/>
<polyline points="741,995 728,1000 715,1005 703,1011 692,1016 682,1022 673,1028 665,1035 659,1041 654,1048 649,1056 645,1064 642,1072 639,1080 636,1089 635,1097 634,1106 634,1115 637,1124 641,1133 648,1142 658,1150 669,1159 682,1168 697,1176 714,1185 731,1193 750,1201 769,1209 790,1216 812,1223 835,1229 859,1234 885,1239 912,1242 940,1244 968,1245" stroke-width="2" stroke-dasharray="40,2"/>
<polyline points="1184,1215 1209,1208 1232,1200 1254,1191 1272,1182 1288,1173 1300,1163 1309,1153 1315,1142 1319,1132 1321,1121" stroke-width="2" stroke-dasharray="14,2"/>
<polyline points="741,991 726,996 712,1001 698,1007 686,1012 675,1019 665,1025 657,1032 649,1040 643,1047 638,1056 633,1064 629,1073 625,1082 621,1092 619,1101 618,1111 620,1121 623,1131 630,1140 639,1150 651,1160 665,1170 680,1179 698,1189 716,1198 736,1208 757,1216 780,1225 804,1232 830,1239 858,1245 887,1249 917,1253 949,1254 980,1255 1011,1254" stroke-width="2" stroke-dasharray="22,2"/>
<polyline points="1196,1223 1222,1215 1246,1207 1268,1198 1287,1189 1303,1179 1315,1168 1324,1157 1330,1146 1333,1135 1335,1123" stroke-width="2" stroke-dasharray="14,2"/>
<polyline points="742,986 725,991 709,997 694,1003 681,1009 668,1015 657,1022 648,1030 640,1038 633,1046 626,1055 620,1065 615,1074 610,1085 606,1095 603,1105 603,1116 605,1127 611,1138 619,1149 631,1160 645,1170 661,1181 679,1192 699,1203 720,1213 742,1223 767,1233 793,1241 822,1249 853,1255 886,1260 920,1263 955,1265 989,1265 1024,1263 1057,1260" stroke-width="2" stroke-dasharray="31,2"/>
<polyline points="1207,1232 1235,1223 1260,1215 1283,1205 1302,1195 1318,1185 1330,1173 1338,1162 1344,1150 1348,1138 1350,1126" stroke-width="2" stroke-dasharray="14,2"/>
<polyline points="743,981 725,987 708,992 691,998 676,1005 662,1012 650,1020 640,1028 631,1036 623,1045 615,1055 607,1065 600,1076 594,1087 590,1098 587,1110 588,1122 592,1133 599,1145 610,1157 624,1169 640,1182 659,1194 679,1206 701,1218 724,1229 750,1240 779,1250 811,1258 845,1265 881,1270 919,1274 958,1275 996,1275 1033,1273 1070,1269 1105,1264" stroke-width="2" stroke-dasharray="40,2"/>
<polyline points="1220,1240 1249,1232 1275,1222 1298,1212 1317,1202 1333,1191 1345,1179 1353,1166 1359,1154 1363,1141 1366,1128" stroke-width="2" stroke-dasharray="14,2"/>
<polyline points="725,981 704,988 685,995 667,1002 651,1011 638,1020 626,1029 615,1039 604,1051 594,1062 585,1075 577,1088 571,1101 569,1115 571,1129 578,1144 590,1158 605,1173 623,1187 644,1202 667,1217 693,1231 723,1245 756,1257 793,1268 834,1277 878,1283 923,1286 970,1288 1015,1286 1060,1283 1103,1277 1144,1271 1185,1263 1223,1254 1258,1244 1290,1233 1317,1221 1338,1208 1354,1194 1366,1179 1375,1164 1380,1148 1384,1133 1386,1118" stroke-width="2" stroke-dasharray="9,2,4,2"/>
<polyline points="557,1045 543,1057 530,1070 519,1083 511,1096 507,1110 507,1125 510,1140 517,1155 527,1171 538,1187 552,1203 568,1220 587,1237 610,1254 636,1270 668,1285 704,1299 746,1311 791,1320 838,1328 887,1332 937,1334 986,1334 1035,1332 1084,1329 1132,1323 1178,1317 1223,1309 1265,1299 1303,1289 1336,1277 1364,1264 1388,1249 1406,1234 1421,1218 1433,1201 1442,1184 1449,1167 1454,1151 1456,1135" stroke-width="2.6" stroke-dasharray="3,7"/>
<polyline points="446,1136 447,1150 450,1165 454,1181 459,1197 466,1213 475,1230 486,1248 501,1265 520,1282 544,1299 572,1315 604,1330 640,1344 680,1356 723,1366 768,1375 814,1382 861,1386 909,1389 958,1391 1007,1391 1056,1389 1106,1386 1154,1382 1201,1377 1246,1370 1288,1361 1327,1352 1362,1341 1393,1328" stroke-width="2.6" stroke-dasharray="3,11"/>
</g>
<g clip-path="url(#cpPur)" fill="none" stroke-linejoin="round">
<polyline points="1170,1194 1186,1189 1201,1184 1215,1179 1228,1173 1240,1168 1251,1162 1261,1156 1269,1149 1276,1143 1281,1136 1284,1129 1287,1122 1288,1116 1289,1109 1288,1102 1288,1095 1287,1088 1285,1081 1284,1075 1282,1069 1279,1063 1275,1057 1271,1051 1266,1045 1260,1040 1253,1035 1245,1030 1236,1025 1227,1020 1217,1016 1207,1011 1197,1007 1187,1003 1177,999 1166,996 1156,992 1146,989 1136,986 1126,983 1115,981 1104,979 1093,977 1081,975 1070,973 1058,972 1045,971 1033,970 1021,969 1009,969 997,968 985,968 973,967 961,967 949,967 937,968 925,968" stroke="#3a2f8a" stroke-width="2.6" stroke-dasharray="30,3" opacity="0.75"/>
<polyline points="1201,1214 1219,1209 1236,1203 1252,1197 1266,1190 1279,1183 1291,1177 1300,1169 1308,1162 1314,1154 1319,1146 1322,1139 1324,1131 1325,1123 1326,1115 1326,1107 1326,1099 1325,1091 1324,1084 1322,1077 1319,1070 1315,1063 1311,1056 1305,1050 1298,1044 1289,1038 1280,1032 1271,1027 1260,1021 1250,1016 1239,1011 1228,1006 1217,1002 1207,997 1196,993 1185,989 1175,986 1164,982 1152,979 1141,976 1129,974 1116,972 1104,970 1091,968 1077,966 1064,965 1051,963 1038,962 1024,962 1011,961 998,960 985,960 972,959 959,959 946,959 933,959 920,960" stroke="#40359a" stroke-width="2.6" stroke-dasharray="18,4,8,3" opacity="0.9"/>
<polyline points="1234,1236 1255,1230 1274,1223 1291,1216 1306,1208 1319,1201 1331,1192 1340,1184 1347,1175 1353,1166 1358,1157 1361,1148 1364,1139 1365,1130 1367,1121 1367,1112 1367,1103 1366,1095 1364,1086 1361,1078 1357,1071 1351,1063 1344,1056 1336,1049 1327,1042 1317,1036 1306,1030 1295,1023 1284,1018 1272,1012 1261,1007 1250,1001 1239,996 1227,992 1216,987 1205,983 1193,980 1181,976 1168,973 1155,970 1141,967 1127,965 1113,963 1099,961 1084,959 1070,958 1056,956 1042,955 1028,954 1014,953 1000,952 986,952 972,951 958,951 944,951 930,951 916,952" stroke="#352b80" stroke-width="2.6" stroke-dasharray="40,5" opacity="0.75"/>
<polyline points="1271,1260 1293,1253 1313,1245 1331,1237 1347,1228 1360,1219 1371,1209 1380,1199 1388,1189 1394,1179 1399,1168 1403,1158 1406,1147 1409,1137 1410,1127 1411,1117 1410,1107 1408,1098 1404,1089 1399,1080 1392,1072 1385,1063 1375,1056 1365,1048 1354,1041 1343,1034 1331,1027 1319,1020 1308,1014 1296,1008 1284,1002 1273,997 1261,991 1249,987 1236,982 1224,978 1210,974 1196,970 1182,967 1167,964 1152,961 1137,959 1122,956 1106,954 1091,952 1076,951 1061,949 1047,948 1032,947 1017,946 1002,945 987,944 972,944 957,943 942,943 927,944 912,944" stroke="#3d3292" stroke-width="2.6" stroke-dasharray="14,3" opacity="0.9"/>
<polyline points="1309,1287 1333,1278 1354,1269 1372,1259 1388,1249 1402,1238 1413,1227 1423,1215 1432,1203 1439,1191 1445,1179 1449,1167 1453,1155 1455,1144 1456,1133 1455,1122 1453,1111 1448,1101 1443,1091 1435,1082 1426,1073 1416,1064 1405,1055 1393,1047 1381,1039 1369,1031 1357,1024 1345,1017 1333,1010 1321,1004 1309,998 1296,992 1283,987 1270,982 1256,977 1241,972 1226,968 1210,965 1194,961 1178,958 1162,955 1146,953 1130,950 1114,948 1098,946 1083,944 1067,942 1051,941 1036,940 1020,938 1004,937 988,937 972,936 956,936 940,936 924,936 908,937" stroke="#3a2f8a" stroke-width="2.6" stroke-dasharray="30,3" opacity="0.75"/>
<polyline points="1354,1320 1379,1310 1401,1298 1421,1287 1438,1274 1453,1261 1465,1247 1477,1233 1486,1219 1494,1205 1501,1192 1505,1178 1508,1165 1509,1152 1508,1140 1504,1128 1499,1116 1492,1105 1483,1094 1473,1084 1462,1074 1450,1064 1438,1055 1425,1046 1413,1037 1401,1029 1388,1021 1376,1014 1363,1006 1350,1000 1337,993 1322,987 1307,981 1292,976 1275,971 1259,967 1241,963 1224,959 1207,955 1190,952 1173,949 1156,946 1139,943 1123,941 1106,939 1090,937 1074,935 1057,933 1040,932 1023,930 1006,929 989,929 972,928 955,928 938,928 921,929 905,929" stroke="#40359a" stroke-width="2.6" stroke-dasharray="18,4,8,3" opacity="0.9"/>
<polyline points="1407,1361 1435,1348 1459,1334 1481,1319 1500,1303 1517,1287 1531,1271 1544,1254 1554,1238 1562,1222 1567,1206 1570,1191 1570,1176 1567,1161 1563,1148 1556,1134 1547,1122 1537,1109 1526,1097 1514,1086 1502,1075 1490,1064 1477,1054 1465,1045 1452,1035 1439,1026 1426,1018 1412,1010 1397,1002 1382,995 1365,988 1348,982 1331,976 1312,971 1294,966 1275,961 1257,956 1239,952 1221,949 1203,945 1185,942 1168,939 1151,936 1134,933 1116,931 1098,929 1081,926 1062,925 1044,923 1026,922 1008,921 989,920 971,920 953,920 936,920 918,921 901,922" stroke="#352b80" stroke-width="2.6" stroke-dasharray="40,5" opacity="0.75"/>
<polyline points="1474,1411 1505,1394 1533,1376 1558,1357 1579,1337 1597,1318 1613,1298 1624,1278 1633,1259 1638,1241 1640,1223 1639,1205 1635,1188 1628,1172 1620,1157 1610,1142 1599,1128 1588,1114 1576,1101 1564,1089 1551,1077 1539,1065 1526,1054 1512,1043 1498,1033 1483,1023 1467,1014 1449,1006 1431,998 1412,990 1393,983 1373,977 1353,971 1333,965 1313,960 1293,955 1274,950 1256,946 1237,942 1219,938 1201,934 1183,931 1164,928 1145,925 1126,922 1106,920 1087,918 1067,916 1048,914 1028,913 1009,912 990,912 971,912 952,912 934,912 915,913 896,914" stroke="#3d3292" stroke-width="2.6" stroke-dasharray="14,3" opacity="0.9"/>
<polyline points="1562,1471 1597,1449 1628,1425 1655,1401 1677,1377 1694,1353 1707,1329 1715,1306 1719,1284 1720,1263 1717,1242 1711,1222 1704,1204 1695,1185 1685,1168 1674,1152 1663,1136 1651,1120 1639,1106 1626,1092 1612,1078 1597,1065 1582,1053 1564,1042 1546,1031 1526,1020 1505,1011 1484,1002 1462,993 1440,985 1418,978 1397,971 1376,965 1355,959 1335,953 1316,948 1296,943 1277,938 1257,934 1238,930 1218,926 1197,922 1176,919 1155,916 1134,913 1113,911 1092,909 1071,907 1051,906 1030,904 1010,904 991,903 971,903 951,904 931,904 911,905 891,906" stroke="#3a2f8a" stroke-width="2.6" stroke-dasharray="30,3" opacity="0.75"/>
<polyline points="1686,1549 1723,1518 1754,1488 1779,1457 1797,1427 1809,1398 1817,1369 1820,1342 1819,1316 1816,1291 1810,1268 1803,1245 1795,1223 1785,1202 1775,1182 1763,1163 1751,1145 1736,1128 1721,1111 1703,1095 1684,1080 1663,1066 1640,1053 1617,1040 1592,1028 1568,1017 1543,1007 1519,997 1495,988 1472,980 1450,972 1428,965 1407,958 1386,952 1366,946 1344,940 1323,935 1301,929 1279,925 1256,920 1233,916 1210,913 1187,909 1164,906 1141,903 1119,901 1097,899 1076,898 1055,896 1034,895 1013,895 992,895 971,895 949,895 928,896 906,896 885,897" stroke="#40359a" stroke-width="2.6" stroke-dasharray="18,4,8,3" opacity="0.9"/>
<polyline points="1835,1644 1871,1604 1898,1565 1918,1527 1931,1490 1940,1454 1944,1421 1945,1388 1944,1357 1940,1328 1934,1300 1926,1273 1916,1247 1904,1222 1889,1199 1871,1177 1851,1155 1828,1135 1803,1117 1776,1099 1749,1082 1720,1066 1692,1052 1664,1038 1636,1026 1610,1014 1585,1003 1561,993 1537,983 1514,974 1491,966 1468,958 1445,951 1421,944 1397,937 1372,931 1346,926 1320,920 1295,915 1269,911 1244,907 1220,903 1196,900 1172,897 1149,894 1127,892 1105,890 1083,889 1061,888 1039,887 1016,886 994,886 971,886 948,886 925,887 902,887 880,888" stroke="#352b80" stroke-width="2.6" stroke-dasharray="40,5" opacity="0.75"/>
<polyline points="2027,1779 2061,1726 2088,1676 2108,1627 2122,1581 2131,1536 2136,1494 2136,1453 2132,1414 2124,1377 2110,1342 2093,1309 2070,1277 2044,1247 2015,1218 1983,1192 1949,1167 1915,1144 1880,1122 1847,1103 1814,1084 1783,1067 1753,1051 1725,1037 1698,1023 1671,1010 1645,999 1619,988 1592,977 1565,968 1537,959 1508,950 1479,942 1450,935 1420,928 1391,922 1363,916 1335,910 1309,905 1283,901 1258,897 1234,893 1210,890 1186,887 1163,885 1140,883 1116,881 1092,880 1068,879 1043,878 1019,877 995,877 970,877 947,877 923,877 899,877 876,878" stroke="#3d3292" stroke-width="2.6" stroke-dasharray="14,3" opacity="0.9"/>
<polyline points="2263,1349 2219,1309 2175,1272 2130,1238 2087,1207 2046,1179 2007,1152 1970,1128 1935,1106 1902,1086 1869,1068 1837,1050 1805,1035 1773,1020 1740,1006 1706,994 1672,982 1637,971 1603,960 1568,951 1535,942 1502,934 1470,926 1440,919 1411,912 1384,906 1357,901 1331,896 1305,892 1280,888 1254,885 1229,882 1203,879 1177,877 1150,874 1124,873 1098,871 1072,870 1046,869 1020,868 995,867 970,866 945,866 920,866 895,866 870,867" stroke="#3a2f8a" stroke-width="2.6" stroke-dasharray="30,3" opacity="0.75"/>
<polyline points="2281,1260 2233,1224 2187,1191 2143,1162 2099,1135 2056,1111 2013,1089 1969,1068 1925,1050 1880,1032 1836,1016 1793,1001 1751,988 1711,975 1672,963 1635,952 1600,942 1567,933 1536,925 1505,917 1476,910 1447,904 1418,898 1389,893 1360,888 1330,884 1301,880 1272,876 1242,873 1213,870 1184,867 1156,865 1129,863 1102,861 1075,859 1048,858 1022,857 996,856 970,855 943,855 917,855 890,855 864,856" stroke="#40359a" stroke-width="2.6" stroke-dasharray="18,4,8,3" opacity="0.9"/>
<polyline points="2240,1145 2176,1118 2115,1092 2057,1069 2002,1048 1951,1029 1903,1011 1859,995 1817,980 1777,967 1738,955 1701,943 1664,933 1627,924 1591,916 1554,908 1518,901 1483,894 1447,888 1413,883 1379,878 1346,873 1315,869 1284,865 1254,862 1225,858 1196,855 1167,852 1139,850 1111,848 1082,846 1054,845 1026,844 997,843 969,843 941,843 914,843 886,844 859,845" stroke="#352b80" stroke-width="2.6" stroke-dasharray="40,5" opacity="0.75"/>
<polyline points="2237,1096 2175,1070 2116,1047 2060,1026 2005,1007 1953,990 1901,975 1851,961 1802,948 1754,936 1708,926 1663,916 1621,908 1580,900 1541,892 1504,885 1469,879 1435,873 1402,867 1369,862 1337,858 1305,854 1273,850 1241,846 1210,843 1178,841 1147,838 1116,837 1086,835 1056,834 1027,834 998,833 969,833 940,834 911,834 882,835 852,836" stroke="#3d3292" stroke-width="2.6" stroke-dasharray="14,3" opacity="0.9"/>
<polyline points="2233,1046 2157,1023 2086,1003 2020,985 1960,968 1904,954 1852,940 1803,928 1758,917 1714,906 1671,897 1629,888 1588,880 1548,873 1508,866 1468,860 1429,854 1390,849 1353,845 1317,841 1282,838 1248,835 1216,832 1184,830 1153,828 1122,827 1092,825 1062,825 1031,824 1000,824 969,823 938,824 907,824 876,824 845,825" stroke="#3a2f8a" stroke-width="2.2" stroke-dasharray="6,3" opacity="0.75"/>
<polyline points="2229,997 2154,977 2082,959 2013,943 1946,928 1883,915 1822,903 1765,892 1712,882 1662,873 1615,866 1571,858 1530,852 1491,847 1454,841 1417,837 1381,833 1346,829 1311,826 1275,823 1240,821 1204,818 1169,816 1134,814 1100,813 1066,811 1033,810 1000,809 968,809 936,808 904,808 872,809 840,809" stroke="#40359a" stroke-width="2.2" stroke-dasharray="6,3" opacity="0.9"/>
<polyline points="2261,966 2181,947 2107,930 2039,915 1974,902 1912,890 1852,879 1794,870 1738,861 1683,853 1631,846 1581,840 1533,834 1487,828 1443,823 1401,818 1362,814 1323,810 1286,807 1249,804 1213,801 1178,799 1142,797 1107,796 1072,795 1037,794 1002,794 968,794 934,794 900,794 866,795 832,796" stroke="#352b80" stroke-width="2.2" stroke-dasharray="6,3" opacity="0.75"/>
<polyline points="2216,918 2134,902 2057,888 1986,875 1919,863 1854,853 1793,844 1733,835 1676,828 1622,821 1569,815 1519,810 1472,806 1427,802 1384,798 1343,795 1303,792 1265,790 1227,788 1190,786 1153,785 1116,783 1079,782 1042,781 1005,781 968,780 931,780 895,780 859,780 823,781" stroke="#3d3292" stroke-width="2.2" stroke-dasharray="6,3" opacity="0.9"/>
<polyline points="2269,885 2179,871 2095,858 2015,847 1939,837 1866,828 1798,820 1732,813 1670,806 1612,800 1557,794 1505,789 1456,785 1410,781 1366,777 1324,774 1282,772 1242,769 1202,767 1162,766 1123,765 1084,764 1045,763 1006,763 967,763 929,764 891,764 853,765 814,766" stroke="#3a2f8a" stroke-width="2.2" stroke-dasharray="6,3" opacity="0.75"/>
<polyline points="2267,851 2164,838 2073,827 1991,817 1916,808 1848,801 1784,794 1724,788 1667,782 1612,777 1558,773 1505,769 1453,765 1402,762 1353,759 1305,756 1258,753 1213,751 1169,750 1127,748 1086,747 1046,746 1006,746 966,746 927,746 886,746 845,747 804,748" stroke="#40359a" stroke-width="2.2" stroke-dasharray="6,3" opacity="0.9"/>
<polyline points="2288,817 2182,806 2086,796 2000,788 1922,780 1849,773 1781,767 1717,762 1655,757 1595,753 1537,749 1481,745 1426,742 1373,739 1322,737 1273,735 1226,733 1180,731 1135,730 1092,729 1050,729 1008,729 966,729 924,729 881,729 837,730 793,731" stroke="#352b80" stroke-width="2.2" stroke-dasharray="6,3" opacity="0.75"/>
<polyline points="2297,777 2190,768 2094,760 2007,754 1927,748 1851,743 1779,738 1710,734 1644,730 1579,727 1518,724 1458,722 1401,719 1346,717 1293,715 1243,714 1194,712 1147,711 1101,710 1055,709 1010,709 966,708 921,708 875,708 829,709 783,709" stroke="#3d3292" stroke-width="2.2" stroke-dasharray="6,3" opacity="0.9"/>
</g>
<path d="M1330,1000 L1420,1050 L1470,1075" fill="none" stroke="#5f9bf0" stroke-width="3" stroke-dasharray="3,4"/>
<path d="M1250,1035 Q1290,1075 1310,1115" fill="none" stroke="#5f8ff0" stroke-width="3" stroke-dasharray="3,5"/>
<path d="M1460,1090 Q1440,1160 1425,1235" fill="none" stroke="#5f9bf0" stroke-width="3" stroke-dasharray="3,9"/>
<path d="M1340,880 Q1390,900 1385,1000 Q1380,1030 1378,1040" fill="none" stroke="#6a8fe8" stroke-width="2.4" stroke-dasharray="3,10"/>
<path d="M130,1110 L200,1070 L260,1030" fill="none" stroke="#3a3290" stroke-width="2" stroke-dasharray="3,7"/>
<path d="M112,1135 L190,1090 L262,1040" fill="none" stroke="#3a3290" stroke-width="2" stroke-dasharray="3,9"/>
<path d="M265,1390 Q300,1330 340,1290" fill="none" stroke="#4a40c0" stroke-width="2" stroke-dasharray="3,6" opacity=".0"/>
<path d="M520,1330 L530,1345" fill="none" stroke="#4a40c0" stroke-width="2" />
<path d="M575,1150 Q585,1175 600,1190" fill="none" stroke="#3a3290" stroke-width="2" stroke-dasharray="3,3"/>
<path d="M488,1310 L520,1335" fill="none" stroke="#3a3290" stroke-width="2" stroke-dasharray="3,3"/>
<path d="M112,853.4 Q400,843 576,838.6 Q720,828 790,813.6 Q850,800 871,788" fill="none" stroke="#52a340" stroke-width="2.6" />
<path d="M576,838.6 Q660,842 701,853 Q760,870 780,896" fill="none" stroke="#52a340" stroke-width="2.6" />
<path d="M868,647 Q836,649 830,660 Q828,690 846,724.5" fill="none" stroke="#52a340" stroke-width="1.8" />
<path d="M846,724.5 Q858,757 867.8,785.5 L889.5,837.8" fill="none" stroke="#52a340" stroke-width="2.4" />
<path d="M889.5,837.8 L911,900 L946,985" fill="none" stroke="#52a340" stroke-width="3.6" />
<polygon points="807.6,646 808.8,646 799.6,674 796,729 791.2,794 786.8,896 779.8,1000 764.2,1451 753.8,1451 774.2,1000 782.6,896 788.6,794 794.2,729 798.2,674" fill="#52a340"/>
<polygon points="979.5,1078 985.5,1077 1132.6,1451 1120.6,1451" fill="#52a340"/>
<polygon points="913.5,748.5 931,750 931,775 915,777" fill="#aab0bd" stroke="#555" stroke-width="1" opacity=".85"/>
<polygon points="940.7,770 958,776 963.6,798.6 944,795" fill="#aab0bd" stroke="#555" stroke-width="1" opacity=".85"/>
<polygon points="950.5,787.7 975,798 979,822.5 962,822" fill="#aab0bd" stroke="#555" stroke-width="1" opacity=".85"/>
<polygon points="724,748 736,746 738,778 726,784" fill="#3a3c42" opacity=".75" stroke="#222" stroke-width="1"/>
<polygon points="415,931 499,924 499.5,946 415.6,953" fill="#4d5058" stroke="#15151a" stroke-width="1.2" stroke-linejoin="round"/>
<polygon points="496,915 499,924 499.5,946 497,938" fill="#565962" stroke="#15151a" stroke-width="1.2" stroke-linejoin="round"/>
<polygon points="412,921 496,915 499,924 415,931" fill="#5e626b" stroke="#15151a" stroke-width="1.2" stroke-linejoin="round"/>
<polygon points="514,930 545,950 546,974 515.6,953" fill="#4d5058" stroke="#15151a" stroke-width="1.2" stroke-linejoin="round"/>
<polygon points="545,950 569,942 573,963.6 546,974" fill="#565962" stroke="#15151a" stroke-width="1.2" stroke-linejoin="round"/>
<polygon points="514,930 537,924 569,942 545,950" fill="#5e626b" stroke="#15151a" stroke-width="1.2" stroke-linejoin="round"/>
<polygon points="547,969 575,966 580,985 553,988.6" fill="#4d5058" stroke="#15151a" stroke-width="1.2" stroke-linejoin="round"/>
<polygon points="573,958 575,966 580,985 578,978" fill="#565962" stroke="#15151a" stroke-width="1.2" stroke-linejoin="round"/>
<polygon points="544,960 573,958 575,966 547,969" fill="#5e626b" stroke="#15151a" stroke-width="1.2" stroke-linejoin="round"/>
<polygon points="555,996 582,992 587,1012 557,1012" fill="#4d5058" stroke="#15151a" stroke-width="1.2" stroke-linejoin="round"/>
<polygon points="580,985 582,992 587,1012 585,1004" fill="#565962" stroke="#15151a" stroke-width="1.2" stroke-linejoin="round"/>
<polygon points="553,988 580,985 582,992 555,996" fill="#5e626b" stroke="#15151a" stroke-width="1.2" stroke-linejoin="round"/>
<polygon points="541,1043 580,1040 578,1075 544,1077" fill="#4d5058" stroke="#15151a" stroke-width="1.2" stroke-linejoin="round"/>
<polygon points="587,1000 592,1032 578,1075 580,1040" fill="#565962" stroke="#15151a" stroke-width="1.2" stroke-linejoin="round"/>
<polygon points="555,996 587,1000 580,1040 541,1043" fill="#5e626b" stroke="#15151a" stroke-width="1.2" stroke-linejoin="round"/>
<polygon points="488,1143 537,1140 537,1186 495,1186" fill="#4d5058" stroke="#15151a" stroke-width="1.2" stroke-linejoin="round"/>
<polygon points="558,1085 564,1118 537,1186 537,1140" fill="#565962" stroke="#15151a" stroke-width="1.2" stroke-linejoin="round"/>
<polygon points="517,1087.5 558,1085 537,1140 488,1143" fill="#5e626b" stroke="#15151a" stroke-width="1.2" stroke-linejoin="round"/>
<polygon points="403,1313.6 462,1308 469,1355 414,1361" fill="#4d5058" stroke="#15151a" stroke-width="1.2" stroke-linejoin="round"/>
<polygon points="503,1217 510,1257 469,1355 462,1308" fill="#565962" stroke="#15151a" stroke-width="1.2" stroke-linejoin="round"/>
<polygon points="455,1221 503,1217 462,1308 403,1313.6" fill="#5e626b" stroke="#15151a" stroke-width="1.2" stroke-linejoin="round"/>
<polygon points="335,1451 335,1451 335,1451" fill="#4d5058" stroke="#15151a" stroke-width="1.2" stroke-linejoin="round"/>
<polygon points="412,1426 418,1451 402,1451" fill="#565962" stroke="#15151a" stroke-width="1.2" stroke-linejoin="round"/>
<polygon points="346,1432 412,1426 402,1451 335,1451" fill="#5e626b" stroke="#15151a" stroke-width="1.2" stroke-linejoin="round"/>
<polygon points="1001.6,870.7 1021,898 1021,928 1001.6,903" fill="#4d5058" stroke="#15151a" stroke-width="1.2" stroke-linejoin="round"/>
<polygon points="1021,898 1046,895.7 1045.6,928 1021,928" fill="#565962" stroke="#15151a" stroke-width="1.2" stroke-linejoin="round"/>
<polygon points="1001.6,870.7 1028,869 1046,895.7 1021,898" fill="#5e626b" stroke="#15151a" stroke-width="1.2" stroke-linejoin="round"/>
<polygon points="1057,947.5 1092,993 1089,1028 1059,978" fill="#4d5058" stroke="#15151a" stroke-width="1.2" stroke-linejoin="round"/>
<polygon points="1092,993 1126.6,988.6 1126.6,1024 1089,1028" fill="#565962" stroke="#15151a" stroke-width="1.2" stroke-linejoin="round"/>
<polygon points="1057,947.5 1085.6,944 1126.6,988.6 1092,993" fill="#5e626b" stroke="#15151a" stroke-width="1.2" stroke-linejoin="round"/>
<polygon points="1137,1053.6 1204,1139 1200,1189 1135.6,1089" fill="#4d5058" stroke="#15151a" stroke-width="1.2" stroke-linejoin="round"/>
<polygon points="1204,1139 1248,1134 1244.5,1185.7 1200,1189" fill="#565962" stroke="#15151a" stroke-width="1.2" stroke-linejoin="round"/>
<polygon points="1137,1053.6 1175,1051 1248,1134 1204,1139" fill="#5e626b" stroke="#15151a" stroke-width="1.2" stroke-linejoin="round"/>
<polygon points="1383.8,1364 1470,1451 1371,1451 1375,1410" fill="#4d5058" stroke="#15151a" stroke-width="1.2" stroke-linejoin="round"/>
<polygon points="1470,1451 1532,1451 1532,1451" fill="#565962" stroke="#15151a" stroke-width="1.2" stroke-linejoin="round"/>
<polygon points="1383.8,1364 1446,1357 1532,1451 1470,1451" fill="#5e626b" stroke="#15151a" stroke-width="1.2" stroke-linejoin="round"/>
<path d="M570,1010 L588,1050" fill="none" stroke="#7b7fd6" stroke-width="2.2" opacity=".85" stroke-dasharray="5,2"/>
<path d="M575,1018 L590,1058" fill="none" stroke="#7b7fd6" stroke-width="2.2" opacity=".85" stroke-dasharray="5,2"/>
<path d="M546,1100 L560,1135" fill="none" stroke="#7b7fd6" stroke-width="2.2" opacity=".85" stroke-dasharray="5,2"/>
<path d="M551,1100 L563,1128" fill="none" stroke="#7b7fd6" stroke-width="2.2" opacity=".85" stroke-dasharray="5,2"/>
<path d="M480,1240 L500,1290" fill="none" stroke="#7b7fd6" stroke-width="2.2" opacity=".85" stroke-dasharray="5,2"/>
<path d="M486,1236 L504,1280" fill="none" stroke="#7b7fd6" stroke-width="2.2" opacity=".85" stroke-dasharray="5,2"/>
<path d="M1140,1062 L1200,1130" fill="none" stroke="#7b7fd6" stroke-width="2.2" opacity=".85" stroke-dasharray="5,2"/>
<path d="M1146,1060 L1206,1124" fill="none" stroke="#7b7fd6" stroke-width="2.2" opacity=".85" stroke-dasharray="5,2"/>
<path d="M1152,1058 L1212,1120" fill="none" stroke="#7b7fd6" stroke-width="2.2" opacity=".85" stroke-dasharray="5,2"/>
<path d="M1158,1057 L1218,1116" fill="none" stroke="#7b7fd6" stroke-width="2.2" opacity=".85" stroke-dasharray="5,2"/>
<path d="M1164,1056 L1224,1114" fill="none" stroke="#7b7fd6" stroke-width="2.2" opacity=".85" stroke-dasharray="5,2"/>
<path d="M1062,952 L1090,986" fill="none" stroke="#7b7fd6" stroke-width="2.2" opacity=".85" stroke-dasharray="5,2"/>
<polygon points="492.4,685 580,682.5 584,718 497.7,722.5" fill="#e5aea4" stroke="#7a3a30" stroke-width="1.2" stroke-linejoin="round"/>
<polygon points="576,683 580,682.5 584,718 580,720" fill="#d28e82" stroke="#7a3a30" stroke-width="1.2" stroke-linejoin="round"/>
<polygon points="416,706 523,702 528,749 422,756" fill="#d99a8e" stroke="#7a3a30" stroke-width="1.2" stroke-linejoin="round"/>
<polygon points="610,719.6 713,716 715.5,749 614,753" fill="#e3aaa0" stroke="#7a3a30" stroke-width="1.2" stroke-linejoin="round"/>
<polygon points="705,717 713,716 715.5,749 708,752" fill="#d28e82" stroke="#7a3a30" stroke-width="1.2" stroke-linejoin="round"/>
<polygon points="382.5,724 440.6,721.25 450.4,788.2 394.1,790" fill="url(#gPinkF)" stroke="#7a3a30" stroke-width="1.2" stroke-linejoin="round"/>
<polygon points="440.6,721.25 485.2,707 493.25,765 450.4,788.2" fill="#cf8678" stroke="#7a3a30" stroke-width="1.2" stroke-linejoin="round"/>
<polygon points="382.5,724 431.6,708.75 485.2,707 440.6,721.25" fill="#eab8ae" stroke="#7a3a30" stroke-width="1.2" stroke-linejoin="round"/>
<polygon points="113.8,791.8 221,788 231.6,832.9 124.5,835.5" fill="url(#gYelF)" stroke="#5a4214" stroke-width="1.2" stroke-linejoin="round"/>
<polygon points="221,788 242.4,780.5 252,824 231.6,832.9" fill="#c9a55c" stroke="#5a4214" stroke-width="1.2" stroke-linejoin="round"/>
<polygon points="113.8,791.8 138.8,783.8 242.4,780.5 221,788" fill="#ecd3a0" stroke="#5a4214" stroke-width="1.2" stroke-linejoin="round"/>
<polygon points="310.6,781 351.3,778.4 357.5,813.2 318.3,815.9" fill="url(#gYelF2)" stroke="#5a4214" stroke-width="1.2" stroke-linejoin="round"/>
<polygon points="351.3,778.4 376.3,769 381.6,799 357.5,813.2" fill="#c9a55c" stroke="#5a4214" stroke-width="1.2" stroke-linejoin="round"/>
<polygon points="310.6,781 338.8,770.4 376.3,769 351.3,778.4" fill="#ecd3a0" stroke="#5a4214" stroke-width="1.2" stroke-linejoin="round"/>
<polygon points="100,842 121,841 129,883.8 100,885" fill="#b98b35" stroke="#5a4214" stroke-width="1.2" stroke-linejoin="round"/>
<polygon points="121,841 146,833.8 156.6,871 129,883.8" fill="#c19440" stroke="#5a4214" stroke-width="1.2" stroke-linejoin="round"/>
<polygon points="100,842 121,841 146,833.8 120,834" fill="#c79a45" stroke="#5a4214" stroke-width="1.2" stroke-linejoin="round"/>
<polygon points="772.7,710 806.6,709.3 809,751 775.5,753" fill="#d69c3c" stroke="#8a5e1a" stroke-width="1"/>
<polygon points="772.7,710 775,707 805,706.5 806.6,709.3" fill="#e0ac50" stroke="#8a5e1a" stroke-width="1"/>
<path d="M258.0,650.5h3v3h-3zM265.6,650.6h3v3h-3zM273.1,650.6h3v3h-3zM280.7,650.7h3v3h-3zM288.3,650.8h3v3h-3zM295.9,650.9h3v3h-3zM303.4,650.9h3v3h-3zM311.0,651.0h3v3h-3zM318.6,651.1h3v3h-3zM326.1,651.1h3v3h-3zM333.7,651.2h3v3h-3zM341.3,651.3h3v3h-3zM348.9,651.4h3v3h-3zM356.4,651.4h3v3h-3zM364.0,651.5h3v3h-3z" fill="#4a6ad0"/>
<path d="M155.0,713.0h3v3h-3zM163.0,713.2h3v3h-3zM171.0,713.5h3v3h-3zM179.0,713.8h3v3h-3zM187.0,714.0h3v3h-3zM195.0,714.2h3v3h-3zM203.0,714.5h3v3h-3zM211.0,714.8h3v3h-3zM219.0,715.0h3v3h-3zM227.0,715.2h3v3h-3zM235.0,715.5h3v3h-3zM243.0,715.8h3v3h-3zM251.0,716.0h3v3h-3zM259.0,716.2h3v3h-3zM267.0,716.5h3v3h-3zM275.0,716.8h3v3h-3zM283.0,717.0h3v3h-3zM291.0,717.2h3v3h-3zM299.0,717.5h3v3h-3zM307.0,717.8h3v3h-3zM315.0,718.0h3v3h-3z" fill="#4a6ad0"/>
<path d="M114.0,738.0h3v3h-3zM122.1,738.1h3v3h-3zM130.2,738.1h3v3h-3zM138.3,738.2h3v3h-3zM146.4,738.3h3v3h-3zM154.6,738.4h3v3h-3zM162.7,738.4h3v3h-3zM170.8,738.5h3v3h-3zM178.9,738.6h3v3h-3zM187.0,738.7h3v3h-3zM195.1,738.7h3v3h-3zM203.2,738.8h3v3h-3zM211.3,738.9h3v3h-3zM219.4,739.0h3v3h-3zM227.6,739.0h3v3h-3zM235.7,739.1h3v3h-3zM243.8,739.2h3v3h-3zM251.9,739.3h3v3h-3zM260.0,739.3h3v3h-3zM268.1,739.4h3v3h-3zM276.2,739.5h3v3h-3zM284.3,739.6h3v3h-3zM292.4,739.6h3v3h-3zM300.6,739.7h3v3h-3zM308.7,739.8h3v3h-3zM316.8,739.9h3v3h-3zM324.9,739.9h3v3h-3zM333.0,740.0h3v3h-3z" fill="#4a6ad0"/>
<path d="M158.0,777.5h3v3h-3zM166.6,777.5h3v3h-3zM175.2,777.6h3v3h-3zM183.8,777.6h3v3h-3zM192.4,777.6h3v3h-3zM201.0,777.7h3v3h-3zM209.6,777.7h3v3h-3zM218.2,777.7h3v3h-3zM226.8,777.8h3v3h-3zM235.4,777.8h3v3h-3zM244.0,777.8h3v3h-3zM252.6,777.9h3v3h-3zM261.2,777.9h3v3h-3zM269.8,777.9h3v3h-3zM278.4,778.0h3v3h-3zM287.0,778.0h3v3h-3z" fill="#4a6ad0"/>
<path d="M300.0,774.0h3v3h-3zM306.7,772.7h3v3h-3zM313.3,771.3h3v3h-3zM320.0,770.0h3v3h-3zM326.7,768.7h3v3h-3zM333.3,767.3h3v3h-3zM340.0,766.0h3v3h-3zM346.7,764.7h3v3h-3zM353.3,763.3h3v3h-3zM360.0,762.0h3v3h-3z" fill="#4a6ad0"/>
<path d="M330.0,725.0h3v3h-3zM336.0,723.3h3v3h-3zM342.0,721.6h3v3h-3zM348.0,719.9h3v3h-3zM354.0,718.2h3v3h-3zM360.0,716.5h3v3h-3zM366.0,714.8h3v3h-3zM372.0,713.1h3v3h-3zM378.0,711.4h3v3h-3zM384.0,709.7h3v3h-3zM390.0,708.0h3v3h-3z" fill="#4a6ad0"/>
<path d="M391.0,653.0h3v3h-3zM399.0,653.2h3v3h-3zM407.0,653.4h3v3h-3z" fill="#4a6ad0"/>
<path d="M425.0,654.5h3v3h-3zM433.2,654.7h3v3h-3zM441.4,654.9h3v3h-3zM449.6,655.1h3v3h-3zM457.8,655.3h3v3h-3zM466.0,655.5h3v3h-3z" fill="#4a6ad0"/>
<path d="M153.0,617.0h3v3h-3zM169.0,613.6h3v3h-3z" fill="#4a6ad0"/>
<path d="M151.0,643.0h3v3h-3zM168.0,643.5h3v3h-3zM185.0,644.0h3v3h-3z" fill="#4a6ad0"/>
<path d="M440.0,678.0h3v3h-3zM447.5,678.0h3v3h-3zM455.0,678.0h3v3h-3zM462.5,678.0h3v3h-3zM470.0,678.0h3v3h-3zM477.5,678.0h3v3h-3zM485.0,678.0h3v3h-3z" fill="#4a6ad0"/>
<path d="M253.0,800.4h3v3h-3zM263.4,799.9h3v3h-3zM273.8,799.4h3v3h-3zM284.2,799.0h3v3h-3zM294.6,798.5h3v3h-3zM305.0,798.0h3v3h-3z" fill="#4a6ad0"/>
<path d="M115.6,802.5h3v3h-3zM128.0,802.5h3v3h-3z" fill="#4a6ad0"/>
<path d="M520.0,739.0h3v3h-3zM527.5,738.9h3v3h-3zM535.0,738.8h3v3h-3zM542.5,738.8h3v3h-3zM550.0,738.7h3v3h-3zM557.5,738.6h3v3h-3zM565.0,738.5h3v3h-3zM572.5,738.4h3v3h-3zM580.0,738.3h3v3h-3zM587.5,738.2h3v3h-3zM595.0,738.2h3v3h-3zM602.5,738.1h3v3h-3zM610.0,738.0h3v3h-3z" fill="#4a6ad0"/>
<path d="M735,583h3v3h-3zM725,600h3v3h-3zM737,606h3v3h-3zM726,622h3v3h-3zM737,623h3v3h-3zM738,628h3v3h-3zM694,637h3v3h-3zM700,637h3v3h-3zM706,637h3v3h-3zM726,645h3v3h-3zM738,652h3v3h-3zM695,655h3v3h-3zM727,666h3v3h-3zM740,675h3v3h-3zM700,690h3v3h-3zM693,710h3v3h-3zM700,730h3v3h-3zM704,730h3v3h-3z" fill="#3a4ab8"/>
<path d="M1020,763 Q1100,790 1220,808 T1335,852" fill="none" stroke="#3b358f" stroke-width="3" stroke-dasharray="3,3"/>
<path d="M977,793 Q1046,807 1116,825 T1300,858" fill="none" stroke="#3b358f" stroke-width="3" stroke-dasharray="3,3"/>
<path d="M952,832.5 Q1046,833 1116,849 T1262,866" fill="none" stroke="#3b358f" stroke-width="3" stroke-dasharray="3,3"/>
<path d="M1060,862 L1108,868" fill="none" stroke="#3b358f" stroke-width="3" stroke-dasharray="3,3"/>
<path d="M990,745 Q1060,770 1110,775" fill="none" stroke="#3b358f" stroke-width="3" stroke-dasharray="3,3"/>
<path d="M1207,836h3.6v3.6h-3.6zM1279,861h3.6v3.6h-3.6zM1300,748h3.6v3.6h-3.6zM1200,747h3.6v3.6h-3.6zM1235,751h3.6v3.6h-3.6zM1073,708h3.6v3.6h-3.6zM1248,809h3.6v3.6h-3.6zM1215,733h3.6v3.6h-3.6zM1458,901h3.6v3.6h-3.6zM1330,777h3.6v3.6h-3.6zM1139,866h3.6v3.6h-3.6zM1272,768h3.6v3.6h-3.6zM1230,864h3.6v3.6h-3.6zM1438,886h3.6v3.6h-3.6zM1377,814h3.6v3.6h-3.6zM1101,856h3.6v3.6h-3.6zM1055,873h3.6v3.6h-3.6zM1063,809h3.6v3.6h-3.6zM1181,859h3.6v3.6h-3.6zM1302,805h3.6v3.6h-3.6zM1228,772h3.6v3.6h-3.6zM1359,758h3.6v3.6h-3.6zM1336,839h3.6v3.6h-3.6zM1397,830h3.6v3.6h-3.6zM1259,772h3.6v3.6h-3.6zM1313,878h3.6v3.6h-3.6zM1122,859h3.6v3.6h-3.6zM1233,780h3.6v3.6h-3.6zM1318,745h3.6v3.6h-3.6zM1413,857h3.6v3.6h-3.6zM1294,768h3.6v3.6h-3.6zM1234,736h3.6v3.6h-3.6zM1145,724h3.6v3.6h-3.6zM1159,842h3.6v3.6h-3.6zM1237,780h3.6v3.6h-3.6zM1252,867h3.6v3.6h-3.6zM1293,765h3.6v3.6h-3.6zM1303,782h3.6v3.6h-3.6zM1322,857h3.6v3.6h-3.6zM1123,810h3.6v3.6h-3.6zM1155,875h3.6v3.6h-3.6zM1374,757h3.6v3.6h-3.6zM1379,821h3.6v3.6h-3.6zM1273,864h3.6v3.6h-3.6zM1215,836h3.6v3.6h-3.6zM1152,866h3.6v3.6h-3.6zM1332,851h3.6v3.6h-3.6zM1240,728h3.6v3.6h-3.6zM1211,722h3.6v3.6h-3.6zM1225,746h3.6v3.6h-3.6zM1120,672h3.6v3.6h-3.6zM1393,865h3.6v3.6h-3.6zM1399,819h3.6v3.6h-3.6zM1169,821h3.6v3.6h-3.6zM1438,823h3.6v3.6h-3.6zM1259,834h3.6v3.6h-3.6zM1424,900h3.6v3.6h-3.6zM1151,878h3.6v3.6h-3.6zM1151,729h3.6v3.6h-3.6zM1463,899h3.6v3.6h-3.6zM1448,855h3.6v3.6h-3.6zM1229,880h3.6v3.6h-3.6zM1216,818h3.6v3.6h-3.6zM1260,875h3.6v3.6h-3.6zM1250,832h3.6v3.6h-3.6zM1388,781h3.6v3.6h-3.6zM1139,758h3.6v3.6h-3.6zM1373,854h3.6v3.6h-3.6zM1266,765h3.6v3.6h-3.6zM1074,817h3.6v3.6h-3.6zM1056,772h3.6v3.6h-3.6zM1174,796h3.6v3.6h-3.6zM1055,813h3.6v3.6h-3.6zM1246,765h3.6v3.6h-3.6zM1222,725h3.6v3.6h-3.6zM1222,871h3.6v3.6h-3.6zM1268,824h3.6v3.6h-3.6zM1244,873h3.6v3.6h-3.6zM1254,709h3.6v3.6h-3.6zM1303,793h3.6v3.6h-3.6zM1168,740h3.6v3.6h-3.6zM1344,810h3.6v3.6h-3.6zM1260,855h3.6v3.6h-3.6zM1369,822h3.6v3.6h-3.6zM1201,836h3.6v3.6h-3.6zM1271,778h3.6v3.6h-3.6zM1164,758h3.6v3.6h-3.6zM1117,862h3.6v3.6h-3.6zM1456,900h3.6v3.6h-3.6zM1231,749h3.6v3.6h-3.6zM1399,799h3.6v3.6h-3.6zM1035,845h3.6v3.6h-3.6zM1198,877h3.6v3.6h-3.6zM1254,796h3.6v3.6h-3.6zM1452,771h3.6v3.6h-3.6zM1394,810h3.6v3.6h-3.6zM1409,885h3.6v3.6h-3.6zM1422,877h3.6v3.6h-3.6zM1309,849h3.6v3.6h-3.6zM1107,875h3.6v3.6h-3.6zM1284,852h3.6v3.6h-3.6zM1366,849h3.6v3.6h-3.6zM1386,753h3.6v3.6h-3.6zM1132,850h3.6v3.6h-3.6zM1255,753h3.6v3.6h-3.6zM1250,854h3.6v3.6h-3.6zM1162,881h3.6v3.6h-3.6zM1050,835h3.6v3.6h-3.6zM1126,732h3.6v3.6h-3.6zM1203,818h3.6v3.6h-3.6zM1223,852h3.6v3.6h-3.6zM1459,834h3.6v3.6h-3.6zM1155,808h3.6v3.6h-3.6zM1449,811h3.6v3.6h-3.6zM1433,856h3.6v3.6h-3.6zM1106,696h3.6v3.6h-3.6zM1397,867h3.6v3.6h-3.6zM1217,721h3.6v3.6h-3.6zM1388,767h3.6v3.6h-3.6zM1271,856h3.6v3.6h-3.6zM1063,873h3.6v3.6h-3.6zM1240,876h3.6v3.6h-3.6zM1449,890h3.6v3.6h-3.6zM1073,714h3.6v3.6h-3.6zM1307,872h3.6v3.6h-3.6zM1381,878h3.6v3.6h-3.6zM1406,875h3.6v3.6h-3.6zM1244,841h3.6v3.6h-3.6zM1276,859h3.6v3.6h-3.6zM1256,874h3.6v3.6h-3.6zM1078,733h3.6v3.6h-3.6zM1218,812h3.6v3.6h-3.6zM1448,839h3.6v3.6h-3.6zM1309,776h3.6v3.6h-3.6zM1333,742h3.6v3.6h-3.6zM1202,850h3.6v3.6h-3.6zM1209,750h3.6v3.6h-3.6zM1186,822h3.6v3.6h-3.6zM1165,731h3.6v3.6h-3.6zM1320,873h3.6v3.6h-3.6zM1245,731h3.6v3.6h-3.6zM1277,727h3.6v3.6h-3.6zM1157,856h3.6v3.6h-3.6zM1273,723h3.6v3.6h-3.6zM1381,875h3.6v3.6h-3.6zM1276,717h3.6v3.6h-3.6zM1419,833h3.6v3.6h-3.6zM1385,745h3.6v3.6h-3.6zM1231,726h3.6v3.6h-3.6zM1446,889h3.6v3.6h-3.6zM1441,885h3.6v3.6h-3.6zM1334,855h3.6v3.6h-3.6zM1282,771h3.6v3.6h-3.6zM1091,718h3.6v3.6h-3.6zM1453,787h3.6v3.6h-3.6zM1313,745h3.6v3.6h-3.6zM1120,686h3.6v3.6h-3.6zM1448,778h3.6v3.6h-3.6zM1401,786h3.6v3.6h-3.6zM1360,854h3.6v3.6h-3.6zM1419,893h3.6v3.6h-3.6zM1283,837h3.6v3.6h-3.6zM1447,864h3.6v3.6h-3.6zM1212,866h3.6v3.6h-3.6zM1426,869h3.6v3.6h-3.6zM1351,786h3.6v3.6h-3.6zM1182,874h3.6v3.6h-3.6zM1063,781h3.6v3.6h-3.6zM1207,874h3.6v3.6h-3.6zM1389,808h3.6v3.6h-3.6zM1331,744h3.6v3.6h-3.6zM1095,812h3.6v3.6h-3.6zM1334,857h3.6v3.6h-3.6zM1220,734h3.6v3.6h-3.6zM1251,703h3.6v3.6h-3.6zM1177,683h3.6v3.6h-3.6zM1225,741h3.6v3.6h-3.6zM1404,844h3.6v3.6h-3.6zM1255,830h3.6v3.6h-3.6zM1257,701h3.6v3.6h-3.6zM1058,767h3.6v3.6h-3.6zM1159,864h3.6v3.6h-3.6zM1445,815h3.6v3.6h-3.6zM1258,847h3.6v3.6h-3.6z" fill="#3a3a9c"/>
<path d="M1243,701h3.6v3.6h-3.6zM1707,1007h3.6v3.6h-3.6zM1163,841h3.6v3.6h-3.6zM1377,749h3.6v3.6h-3.6zM1367,732h3.6v3.6h-3.6zM1371,795h3.6v3.6h-3.6zM1646,976h3.6v3.6h-3.6zM1264,842h3.6v3.6h-3.6zM1427,828h3.6v3.6h-3.6zM1239,731h3.6v3.6h-3.6zM1361,795h3.6v3.6h-3.6zM1157,865h3.6v3.6h-3.6zM1309,862h3.6v3.6h-3.6zM1620,878h3.6v3.6h-3.6zM1509,802h3.6v3.6h-3.6zM1377,745h3.6v3.6h-3.6zM1214,843h3.6v3.6h-3.6zM1224,871h3.6v3.6h-3.6zM1423,813h3.6v3.6h-3.6zM1051,877h3.6v3.6h-3.6zM1263,849h3.6v3.6h-3.6zM1542,918h3.6v3.6h-3.6zM1694,860h3.6v3.6h-3.6zM1256,800h3.6v3.6h-3.6zM1652,853h3.6v3.6h-3.6zM1668,962h3.6v3.6h-3.6zM1724,901h3.6v3.6h-3.6zM1256,846h3.6v3.6h-3.6zM1738,876h3.6v3.6h-3.6zM1210,747h3.6v3.6h-3.6zM1226,795h3.6v3.6h-3.6zM1096,688h3.6v3.6h-3.6zM1067,878h3.6v3.6h-3.6zM1347,793h3.6v3.6h-3.6zM1418,894h3.6v3.6h-3.6zM1458,904h3.6v3.6h-3.6zM1330,861h3.6v3.6h-3.6zM1571,867h3.6v3.6h-3.6zM1337,861h3.6v3.6h-3.6zM1389,804h3.6v3.6h-3.6zM1371,810h3.6v3.6h-3.6zM1428,900h3.6v3.6h-3.6zM1578,879h3.6v3.6h-3.6zM1715,968h3.6v3.6h-3.6zM1247,742h3.6v3.6h-3.6zM1394,856h3.6v3.6h-3.6zM1457,783h3.6v3.6h-3.6zM1193,723h3.6v3.6h-3.6zM1087,775h3.6v3.6h-3.6zM1706,1005h3.6v3.6h-3.6zM1094,875h3.6v3.6h-3.6zM1538,931h3.6v3.6h-3.6zM1501,925h3.6v3.6h-3.6zM1615,885h3.6v3.6h-3.6zM1393,825h3.6v3.6h-3.6zM1383,869h3.6v3.6h-3.6zM1079,679h3.6v3.6h-3.6zM1260,791h3.6v3.6h-3.6zM1739,974h3.6v3.6h-3.6zM1735,867h3.6v3.6h-3.6zM1133,715h3.6v3.6h-3.6zM1158,812h3.6v3.6h-3.6zM1272,816h3.6v3.6h-3.6zM1183,702h3.6v3.6h-3.6zM1702,859h3.6v3.6h-3.6zM1512,931h3.6v3.6h-3.6zM1382,811h3.6v3.6h-3.6zM1430,768h3.6v3.6h-3.6zM1395,878h3.6v3.6h-3.6zM1084,818h3.6v3.6h-3.6zM1503,879h3.6v3.6h-3.6zM1622,881h3.6v3.6h-3.6zM1375,854h3.6v3.6h-3.6zM1225,843h3.6v3.6h-3.6zM1561,937h3.6v3.6h-3.6zM1552,930h3.6v3.6h-3.6zM1700,1010h3.6v3.6h-3.6zM1313,854h3.6v3.6h-3.6zM1048,757h3.6v3.6h-3.6zM1242,705h3.6v3.6h-3.6zM1637,965h3.6v3.6h-3.6zM1259,843h3.6v3.6h-3.6zM1431,859h3.6v3.6h-3.6zM1313,715h3.6v3.6h-3.6zM1675,941h3.6v3.6h-3.6zM1085,875h3.6v3.6h-3.6zM1244,851h3.6v3.6h-3.6zM1583,948h3.6v3.6h-3.6zM1204,805h3.6v3.6h-3.6zM1557,870h3.6v3.6h-3.6zM1509,907h3.6v3.6h-3.6zM1664,988h3.6v3.6h-3.6zM1252,745h3.6v3.6h-3.6zM1350,786h3.6v3.6h-3.6zM1246,869h3.6v3.6h-3.6zM1281,827h3.6v3.6h-3.6zM1691,991h3.6v3.6h-3.6zM1312,733h3.6v3.6h-3.6zM1260,718h3.6v3.6h-3.6zM1480,852h3.6v3.6h-3.6zM1608,980h3.6v3.6h-3.6zM1253,862h3.6v3.6h-3.6zM1676,933h3.6v3.6h-3.6zM1548,858h3.6v3.6h-3.6zM1151,854h3.6v3.6h-3.6zM1439,849h3.6v3.6h-3.6zM1396,849h3.6v3.6h-3.6zM1600,910h3.6v3.6h-3.6zM1469,873h3.6v3.6h-3.6zM1474,795h3.6v3.6h-3.6zM1661,947h3.6v3.6h-3.6zM1402,796h3.6v3.6h-3.6zM1425,870h3.6v3.6h-3.6zM1728,870h3.6v3.6h-3.6zM1497,860h3.6v3.6h-3.6zM1332,847h3.6v3.6h-3.6zM1410,834h3.6v3.6h-3.6zM1506,928h3.6v3.6h-3.6zM1209,737h3.6v3.6h-3.6zM1509,888h3.6v3.6h-3.6zM1303,784h3.6v3.6h-3.6zM1701,872h3.6v3.6h-3.6zM1416,895h3.6v3.6h-3.6zM1319,737h3.6v3.6h-3.6zM1467,880h3.6v3.6h-3.6zM1349,838h3.6v3.6h-3.6zM1456,909h3.6v3.6h-3.6zM1085,840h3.6v3.6h-3.6zM1368,752h3.6v3.6h-3.6zM1551,916h3.6v3.6h-3.6zM1462,826h3.6v3.6h-3.6zM1392,885h3.6v3.6h-3.6zM1252,836h3.6v3.6h-3.6zM1213,857h3.6v3.6h-3.6zM1575,883h3.6v3.6h-3.6zM1166,853h3.6v3.6h-3.6zM1155,876h3.6v3.6h-3.6zM1251,730h3.6v3.6h-3.6zM1671,994h3.6v3.6h-3.6zM1192,806h3.6v3.6h-3.6zM1499,881h3.6v3.6h-3.6zM1563,932h3.6v3.6h-3.6zM1447,890h3.6v3.6h-3.6zM1529,869h3.6v3.6h-3.6zM1517,897h3.6v3.6h-3.6zM1125,770h3.6v3.6h-3.6zM1734,1006h3.6v3.6h-3.6zM1046,794h3.6v3.6h-3.6zM1678,999h3.6v3.6h-3.6zM1693,860h3.6v3.6h-3.6zM1456,913h3.6v3.6h-3.6zM1648,938h3.6v3.6h-3.6zM1456,878h3.6v3.6h-3.6zM1711,1013h3.6v3.6h-3.6zM1148,822h3.6v3.6h-3.6zM1241,863h3.6v3.6h-3.6zM1255,796h3.6v3.6h-3.6zM1740,877h3.6v3.6h-3.6zM1417,827h3.6v3.6h-3.6zM1243,816h3.6v3.6h-3.6zM1371,868h3.6v3.6h-3.6zM1228,782h3.6v3.6h-3.6zM1700,1002h3.6v3.6h-3.6zM1246,811h3.6v3.6h-3.6zM1233,736h3.6v3.6h-3.6zM1213,782h3.6v3.6h-3.6zM1332,778h3.6v3.6h-3.6zM1455,863h3.6v3.6h-3.6zM1270,840h3.6v3.6h-3.6zM1598,962h3.6v3.6h-3.6zM1096,689h3.6v3.6h-3.6zM1329,725h3.6v3.6h-3.6zM1441,776h3.6v3.6h-3.6zM1307,872h3.6v3.6h-3.6zM1505,818h3.6v3.6h-3.6zM1642,898h3.6v3.6h-3.6zM1347,778h3.6v3.6h-3.6zM1746,1014h3.6v3.6h-3.6zM1547,865h3.6v3.6h-3.6zM1510,817h3.6v3.6h-3.6zM1724,1017h3.6v3.6h-3.6zM1704,864h3.6v3.6h-3.6zM1704,977h3.6v3.6h-3.6zM1202,714h3.6v3.6h-3.6zM1175,756h3.6v3.6h-3.6zM1549,951h3.6v3.6h-3.6zM1130,865h3.6v3.6h-3.6zM1403,765h3.6v3.6h-3.6zM1630,840h3.6v3.6h-3.6zM1631,967h3.6v3.6h-3.6zM1465,769h3.6v3.6h-3.6zM1608,874h3.6v3.6h-3.6zM1339,860h3.6v3.6h-3.6zM1285,846h3.6v3.6h-3.6zM1285,864h3.6v3.6h-3.6zM1567,922h3.6v3.6h-3.6zM1631,889h3.6v3.6h-3.6zM1509,919h3.6v3.6h-3.6zM1599,821h3.6v3.6h-3.6zM1211,815h3.6v3.6h-3.6zM1578,926h3.6v3.6h-3.6zM1361,842h3.6v3.6h-3.6zM1184,887h3.6v3.6h-3.6zM1557,837h3.6v3.6h-3.6zM1331,853h3.6v3.6h-3.6zM1247,780h3.6v3.6h-3.6zM1593,974h3.6v3.6h-3.6zM1638,974h3.6v3.6h-3.6zM1512,884h3.6v3.6h-3.6zM1173,760h3.6v3.6h-3.6zM1342,805h3.6v3.6h-3.6zM1445,791h3.6v3.6h-3.6zM1449,895h3.6v3.6h-3.6zM1130,886h3.6v3.6h-3.6zM1382,762h3.6v3.6h-3.6zM1661,953h3.6v3.6h-3.6zM1197,751h3.6v3.6h-3.6zM1725,938h3.6v3.6h-3.6zM1603,892h3.6v3.6h-3.6zM1244,833h3.6v3.6h-3.6zM1627,938h3.6v3.6h-3.6zM1507,860h3.6v3.6h-3.6zM1688,894h3.6v3.6h-3.6zM1052,874h3.6v3.6h-3.6zM1230,861h3.6v3.6h-3.6zM1737,949h3.6v3.6h-3.6zM1245,763h3.6v3.6h-3.6zM1542,824h3.6v3.6h-3.6zM1592,807h3.6v3.6h-3.6zM1266,735h3.6v3.6h-3.6zM1170,683h3.6v3.6h-3.6zM1054,818h3.6v3.6h-3.6zM1536,792h3.6v3.6h-3.6zM1178,758h3.6v3.6h-3.6zM1164,831h3.6v3.6h-3.6zM1450,784h3.6v3.6h-3.6zM1226,817h3.6v3.6h-3.6zM1320,788h3.6v3.6h-3.6zM1259,757h3.6v3.6h-3.6zM1718,955h3.6v3.6h-3.6zM1229,852h3.6v3.6h-3.6zM1214,865h3.6v3.6h-3.6zM1272,752h3.6v3.6h-3.6zM1698,960h3.6v3.6h-3.6zM1361,821h3.6v3.6h-3.6zM1662,929h3.6v3.6h-3.6zM1318,843h3.6v3.6h-3.6zM1463,783h3.6v3.6h-3.6zM1662,832h3.6v3.6h-3.6zM1319,851h3.6v3.6h-3.6zM1313,831h3.6v3.6h-3.6zM1172,826h3.6v3.6h-3.6zM1209,874h3.6v3.6h-3.6zM1682,1004h3.6v3.6h-3.6zM1204,698h3.6v3.6h-3.6zM1126,791h3.6v3.6h-3.6zM1267,877h3.6v3.6h-3.6zM1273,772h3.6v3.6h-3.6zM1501,906h3.6v3.6h-3.6zM1077,789h3.6v3.6h-3.6zM1475,902h3.6v3.6h-3.6zM1255,792h3.6v3.6h-3.6zM1266,789h3.6v3.6h-3.6zM1750,913h3.6v3.6h-3.6zM1526,875h3.6v3.6h-3.6zM1416,847h3.6v3.6h-3.6zM1107,736h3.6v3.6h-3.6zM1219,814h3.6v3.6h-3.6zM1493,868h3.6v3.6h-3.6zM1230,811h3.6v3.6h-3.6zM1520,805h3.6v3.6h-3.6zM1089,759h3.6v3.6h-3.6zM1364,826h3.6v3.6h-3.6zM1202,769h3.6v3.6h-3.6zM1275,783h3.6v3.6h-3.6zM1085,775h3.6v3.6h-3.6zM1456,786h3.6v3.6h-3.6zM1452,898h3.6v3.6h-3.6zM1131,742h3.6v3.6h-3.6zM1068,731h3.6v3.6h-3.6zM1490,917h3.6v3.6h-3.6zM1358,853h3.6v3.6h-3.6zM1206,710h3.6v3.6h-3.6zM1616,826h3.6v3.6h-3.6zM1579,926h3.6v3.6h-3.6zM1256,831h3.6v3.6h-3.6zM1111,862h3.6v3.6h-3.6zM1160,739h3.6v3.6h-3.6zM1137,787h3.6v3.6h-3.6zM1565,806h3.6v3.6h-3.6zM1417,829h3.6v3.6h-3.6zM1551,877h3.6v3.6h-3.6zM1435,884h3.6v3.6h-3.6zM1321,843h3.6v3.6h-3.6zM1126,795h3.6v3.6h-3.6zM1411,861h3.6v3.6h-3.6z" fill="#4040b0"/>
<path d="M1057,714h3.6v3.6h-3.6zM1508,882h3.6v3.6h-3.6zM1154,834h3.6v3.6h-3.6zM1630,877h3.6v3.6h-3.6zM1663,902h3.6v3.6h-3.6zM1702,916h3.6v3.6h-3.6zM1237,776h3.6v3.6h-3.6zM1253,877h3.6v3.6h-3.6zM1538,843h3.6v3.6h-3.6zM1268,877h3.6v3.6h-3.6zM1504,841h3.6v3.6h-3.6zM1271,818h3.6v3.6h-3.6zM1131,866h3.6v3.6h-3.6zM1637,975h3.6v3.6h-3.6zM1595,860h3.6v3.6h-3.6zM1632,867h3.6v3.6h-3.6zM1455,780h3.6v3.6h-3.6zM1312,726h3.6v3.6h-3.6zM1725,858h3.6v3.6h-3.6zM1320,880h3.6v3.6h-3.6zM1461,873h3.6v3.6h-3.6zM1595,960h3.6v3.6h-3.6zM1386,858h3.6v3.6h-3.6zM1274,804h3.6v3.6h-3.6zM1438,886h3.6v3.6h-3.6zM1320,844h3.6v3.6h-3.6zM1515,868h3.6v3.6h-3.6zM1665,987h3.6v3.6h-3.6zM1707,983h3.6v3.6h-3.6zM1253,847h3.6v3.6h-3.6zM1609,910h3.6v3.6h-3.6zM1192,870h3.6v3.6h-3.6zM1077,705h3.6v3.6h-3.6zM1463,765h3.6v3.6h-3.6zM1672,895h3.6v3.6h-3.6zM1318,856h3.6v3.6h-3.6zM1298,778h3.6v3.6h-3.6zM1500,912h3.6v3.6h-3.6zM1089,814h3.6v3.6h-3.6zM1717,1003h3.6v3.6h-3.6zM1630,927h3.6v3.6h-3.6zM1593,883h3.6v3.6h-3.6zM1343,861h3.6v3.6h-3.6zM1749,910h3.6v3.6h-3.6zM1443,904h3.6v3.6h-3.6zM1661,967h3.6v3.6h-3.6zM1630,842h3.6v3.6h-3.6zM1246,869h3.6v3.6h-3.6zM1524,860h3.6v3.6h-3.6zM1590,882h3.6v3.6h-3.6zM1166,789h3.6v3.6h-3.6zM1725,1017h3.6v3.6h-3.6zM1310,747h3.6v3.6h-3.6zM1316,840h3.6v3.6h-3.6zM1735,1007h3.6v3.6h-3.6zM1052,825h3.6v3.6h-3.6zM1606,921h3.6v3.6h-3.6zM1170,870h3.6v3.6h-3.6zM1226,754h3.6v3.6h-3.6zM1609,947h3.6v3.6h-3.6zM1219,811h3.6v3.6h-3.6zM1329,878h3.6v3.6h-3.6zM1683,898h3.6v3.6h-3.6zM1615,890h3.6v3.6h-3.6zM1595,887h3.6v3.6h-3.6zM1210,868h3.6v3.6h-3.6zM1480,887h3.6v3.6h-3.6zM1343,820h3.6v3.6h-3.6zM1214,786h3.6v3.6h-3.6zM1590,887h3.6v3.6h-3.6zM1403,851h3.6v3.6h-3.6zM1052,814h3.6v3.6h-3.6zM1147,865h3.6v3.6h-3.6zM1087,834h3.6v3.6h-3.6zM1384,848h3.6v3.6h-3.6zM1451,898h3.6v3.6h-3.6zM1247,863h3.6v3.6h-3.6zM1381,801h3.6v3.6h-3.6zM1339,801h3.6v3.6h-3.6zM1401,871h3.6v3.6h-3.6zM1508,806h3.6v3.6h-3.6zM1329,729h3.6v3.6h-3.6zM1203,869h3.6v3.6h-3.6zM1222,869h3.6v3.6h-3.6zM1475,863h3.6v3.6h-3.6zM1296,820h3.6v3.6h-3.6zM1450,880h3.6v3.6h-3.6zM1301,826h3.6v3.6h-3.6zM1718,892h3.6v3.6h-3.6zM1385,862h3.6v3.6h-3.6zM1317,826h3.6v3.6h-3.6zM1577,904h3.6v3.6h-3.6zM1347,817h3.6v3.6h-3.6zM1651,908h3.6v3.6h-3.6zM1546,823h3.6v3.6h-3.6zM1263,793h3.6v3.6h-3.6zM1134,844h3.6v3.6h-3.6zM1306,766h3.6v3.6h-3.6zM1296,880h3.6v3.6h-3.6zM1162,825h3.6v3.6h-3.6zM1339,856h3.6v3.6h-3.6zM1609,949h3.6v3.6h-3.6zM1590,963h3.6v3.6h-3.6zM1419,819h3.6v3.6h-3.6zM1363,762h3.6v3.6h-3.6zM1448,869h3.6v3.6h-3.6zM1318,816h3.6v3.6h-3.6zM1539,880h3.6v3.6h-3.6zM1748,1000h3.6v3.6h-3.6zM1320,815h3.6v3.6h-3.6zM1334,868h3.6v3.6h-3.6zM1378,742h3.6v3.6h-3.6zM1215,829h3.6v3.6h-3.6zM1115,877h3.6v3.6h-3.6zM1524,935h3.6v3.6h-3.6zM1482,918h3.6v3.6h-3.6zM1133,678h3.6v3.6h-3.6zM1178,743h3.6v3.6h-3.6zM1206,785h3.6v3.6h-3.6zM1200,823h3.6v3.6h-3.6zM1529,880h3.6v3.6h-3.6zM1698,901h3.6v3.6h-3.6zM1159,846h3.6v3.6h-3.6zM1133,844h3.6v3.6h-3.6zM1474,815h3.6v3.6h-3.6zM1387,880h3.6v3.6h-3.6zM1292,840h3.6v3.6h-3.6zM1308,860h3.6v3.6h-3.6zM1342,739h3.6v3.6h-3.6zM1398,873h3.6v3.6h-3.6zM1256,717h3.6v3.6h-3.6zM1235,825h3.6v3.6h-3.6zM1739,1007h3.6v3.6h-3.6zM1576,890h3.6v3.6h-3.6zM1493,822h3.6v3.6h-3.6zM1400,871h3.6v3.6h-3.6zM1253,718h3.6v3.6h-3.6zM1523,870h3.6v3.6h-3.6zM1300,801h3.6v3.6h-3.6zM1734,877h3.6v3.6h-3.6zM1385,843h3.6v3.6h-3.6zM1133,772h3.6v3.6h-3.6zM1290,724h3.6v3.6h-3.6zM1615,823h3.6v3.6h-3.6zM1358,861h3.6v3.6h-3.6zM1591,953h3.6v3.6h-3.6zM1190,756h3.6v3.6h-3.6zM1336,741h3.6v3.6h-3.6zM1474,913h3.6v3.6h-3.6zM1628,874h3.6v3.6h-3.6zM1344,845h3.6v3.6h-3.6zM1487,906h3.6v3.6h-3.6zM1570,959h3.6v3.6h-3.6zM1441,870h3.6v3.6h-3.6zM1196,692h3.6v3.6h-3.6zM1513,934h3.6v3.6h-3.6zM1744,1013h3.6v3.6h-3.6zM1512,871h3.6v3.6h-3.6zM1311,755h3.6v3.6h-3.6zM1094,839h3.6v3.6h-3.6zM1694,909h3.6v3.6h-3.6zM1248,810h3.6v3.6h-3.6zM1715,1004h3.6v3.6h-3.6zM1054,845h3.6v3.6h-3.6zM1267,874h3.6v3.6h-3.6zM1301,863h3.6v3.6h-3.6zM1271,799h3.6v3.6h-3.6zM1275,736h3.6v3.6h-3.6zM1074,710h3.6v3.6h-3.6zM1485,927h3.6v3.6h-3.6zM1715,1015h3.6v3.6h-3.6zM1161,818h3.6v3.6h-3.6zM1561,922h3.6v3.6h-3.6zM1413,809h3.6v3.6h-3.6zM1269,755h3.6v3.6h-3.6zM1543,944h3.6v3.6h-3.6zM1181,803h3.6v3.6h-3.6zM1140,720h3.6v3.6h-3.6zM1621,963h3.6v3.6h-3.6zM1695,1010h3.6v3.6h-3.6zM1312,865h3.6v3.6h-3.6zM1505,870h3.6v3.6h-3.6zM1201,867h3.6v3.6h-3.6zM1350,789h3.6v3.6h-3.6zM1567,918h3.6v3.6h-3.6zM1287,811h3.6v3.6h-3.6zM1276,762h3.6v3.6h-3.6zM1745,940h3.6v3.6h-3.6zM1488,860h3.6v3.6h-3.6zM1144,787h3.6v3.6h-3.6zM1482,793h3.6v3.6h-3.6zM1660,967h3.6v3.6h-3.6zM1145,729h3.6v3.6h-3.6zM1638,979h3.6v3.6h-3.6zM1484,794h3.6v3.6h-3.6zM1093,777h3.6v3.6h-3.6zM1510,812h3.6v3.6h-3.6zM1322,808h3.6v3.6h-3.6zM1443,789h3.6v3.6h-3.6zM1730,1000h3.6v3.6h-3.6zM1533,928h3.6v3.6h-3.6zM1280,765h3.6v3.6h-3.6zM1591,899h3.6v3.6h-3.6zM1485,801h3.6v3.6h-3.6zM1207,783h3.6v3.6h-3.6zM1725,1027h3.6v3.6h-3.6zM1510,913h3.6v3.6h-3.6zM1721,898h3.6v3.6h-3.6zM1535,950h3.6v3.6h-3.6zM1411,882h3.6v3.6h-3.6zM1119,873h3.6v3.6h-3.6zM1461,913h3.6v3.6h-3.6zM1389,806h3.6v3.6h-3.6zM1138,739h3.6v3.6h-3.6zM1097,786h3.6v3.6h-3.6zM1243,726h3.6v3.6h-3.6zM1245,758h3.6v3.6h-3.6zM1671,978h3.6v3.6h-3.6zM1744,1021h3.6v3.6h-3.6zM1425,890h3.6v3.6h-3.6zM1143,676h3.6v3.6h-3.6zM1734,993h3.6v3.6h-3.6zM1548,928h3.6v3.6h-3.6zM1530,927h3.6v3.6h-3.6zM1350,734h3.6v3.6h-3.6zM1605,958h3.6v3.6h-3.6zM1265,873h3.6v3.6h-3.6zM1528,872h3.6v3.6h-3.6zM1430,892h3.6v3.6h-3.6zM1643,870h3.6v3.6h-3.6zM1443,792h3.6v3.6h-3.6zM1282,827h3.6v3.6h-3.6zM1237,803h3.6v3.6h-3.6zM1316,823h3.6v3.6h-3.6zM1378,814h3.6v3.6h-3.6zM1580,961h3.6v3.6h-3.6zM1407,809h3.6v3.6h-3.6zM1618,939h3.6v3.6h-3.6zM1101,739h3.6v3.6h-3.6zM1564,849h3.6v3.6h-3.6zM1260,797h3.6v3.6h-3.6zM1242,723h3.6v3.6h-3.6zM1268,821h3.6v3.6h-3.6zM1397,759h3.6v3.6h-3.6zM1743,973h3.6v3.6h-3.6zM1281,825h3.6v3.6h-3.6zM1225,876h3.6v3.6h-3.6zM1284,816h3.6v3.6h-3.6zM1272,793h3.6v3.6h-3.6zM1230,823h3.6v3.6h-3.6zM1352,770h3.6v3.6h-3.6zM1573,939h3.6v3.6h-3.6zM1481,898h3.6v3.6h-3.6zM1491,909h3.6v3.6h-3.6zM1644,977h3.6v3.6h-3.6zM1122,734h3.6v3.6h-3.6zM1377,753h3.6v3.6h-3.6zM1198,853h3.6v3.6h-3.6zM1516,929h3.6v3.6h-3.6zM1743,1007h3.6v3.6h-3.6z" fill="#33338a"/>
<path d="M1471,916h3.6v3.6h-3.6zM1320,844h3.6v3.6h-3.6zM1500,894h3.6v3.6h-3.6zM1318,767h3.6v3.6h-3.6zM1610,935h3.6v3.6h-3.6zM1371,820h3.6v3.6h-3.6zM1595,888h3.6v3.6h-3.6zM1744,1030h3.6v3.6h-3.6zM1296,736h3.6v3.6h-3.6zM1710,1023h3.6v3.6h-3.6zM1748,869h3.6v3.6h-3.6zM1704,920h3.6v3.6h-3.6zM1678,990h3.6v3.6h-3.6zM1623,831h3.6v3.6h-3.6zM1434,816h3.6v3.6h-3.6zM1681,911h3.6v3.6h-3.6zM1533,873h3.6v3.6h-3.6zM1407,854h3.6v3.6h-3.6zM1410,809h3.6v3.6h-3.6zM1578,879h3.6v3.6h-3.6zM1740,938h3.6v3.6h-3.6zM1686,957h3.6v3.6h-3.6zM1734,976h3.6v3.6h-3.6zM1521,885h3.6v3.6h-3.6zM1717,1000h3.6v3.6h-3.6zM1442,889h3.6v3.6h-3.6zM1420,879h3.6v3.6h-3.6zM1306,719h3.6v3.6h-3.6zM1628,985h3.6v3.6h-3.6zM1635,974h3.6v3.6h-3.6zM1600,967h3.6v3.6h-3.6zM1724,890h3.6v3.6h-3.6zM1607,948h3.6v3.6h-3.6zM1420,760h3.6v3.6h-3.6zM1542,916h3.6v3.6h-3.6zM1481,793h3.6v3.6h-3.6zM1612,966h3.6v3.6h-3.6zM1581,827h3.6v3.6h-3.6zM1338,844h3.6v3.6h-3.6zM1484,788h3.6v3.6h-3.6zM1712,913h3.6v3.6h-3.6zM1415,759h3.6v3.6h-3.6zM1554,831h3.6v3.6h-3.6zM1647,998h3.6v3.6h-3.6zM1751,900h3.6v3.6h-3.6zM1656,914h3.6v3.6h-3.6zM1700,880h3.6v3.6h-3.6zM1375,866h3.6v3.6h-3.6zM1638,958h3.6v3.6h-3.6zM1671,1003h3.6v3.6h-3.6zM1415,893h3.6v3.6h-3.6zM1707,1015h3.6v3.6h-3.6zM1457,876h3.6v3.6h-3.6zM1695,849h3.6v3.6h-3.6zM1706,852h3.6v3.6h-3.6zM1391,818h3.6v3.6h-3.6zM1636,856h3.6v3.6h-3.6zM1675,956h3.6v3.6h-3.6zM1424,897h3.6v3.6h-3.6zM1638,837h3.6v3.6h-3.6zM1450,866h3.6v3.6h-3.6zM1439,860h3.6v3.6h-3.6zM1601,853h3.6v3.6h-3.6zM1472,910h3.6v3.6h-3.6zM1676,960h3.6v3.6h-3.6zM1397,850h3.6v3.6h-3.6zM1361,869h3.6v3.6h-3.6zM1374,873h3.6v3.6h-3.6zM1540,948h3.6v3.6h-3.6zM1448,779h3.6v3.6h-3.6zM1716,959h3.6v3.6h-3.6zM1419,787h3.6v3.6h-3.6zM1610,968h3.6v3.6h-3.6zM1338,728h3.6v3.6h-3.6zM1423,757h3.6v3.6h-3.6zM1610,980h3.6v3.6h-3.6zM1597,903h3.6v3.6h-3.6zM1409,849h3.6v3.6h-3.6zM1318,859h3.6v3.6h-3.6zM1352,863h3.6v3.6h-3.6zM1721,996h3.6v3.6h-3.6zM1460,819h3.6v3.6h-3.6zM1446,857h3.6v3.6h-3.6zM1583,902h3.6v3.6h-3.6zM1289,870h3.6v3.6h-3.6zM1497,860h3.6v3.6h-3.6zM1512,935h3.6v3.6h-3.6zM1488,847h3.6v3.6h-3.6zM1750,886h3.6v3.6h-3.6zM1700,921h3.6v3.6h-3.6zM1628,948h3.6v3.6h-3.6zM1498,808h3.6v3.6h-3.6zM1518,810h3.6v3.6h-3.6zM1425,896h3.6v3.6h-3.6zM1352,789h3.6v3.6h-3.6zM1504,857h3.6v3.6h-3.6zM1295,873h3.6v3.6h-3.6zM1614,921h3.6v3.6h-3.6zM1431,876h3.6v3.6h-3.6zM1446,914h3.6v3.6h-3.6zM1337,867h3.6v3.6h-3.6zM1331,797h3.6v3.6h-3.6zM1453,880h3.6v3.6h-3.6zM1288,866h3.6v3.6h-3.6zM1405,755h3.6v3.6h-3.6zM1543,787h3.6v3.6h-3.6zM1337,854h3.6v3.6h-3.6zM1449,901h3.6v3.6h-3.6zM1558,839h3.6v3.6h-3.6zM1495,782h3.6v3.6h-3.6zM1580,963h3.6v3.6h-3.6zM1423,762h3.6v3.6h-3.6zM1335,794h3.6v3.6h-3.6zM1464,825h3.6v3.6h-3.6zM1428,886h3.6v3.6h-3.6zM1607,812h3.6v3.6h-3.6zM1311,842h3.6v3.6h-3.6zM1339,779h3.6v3.6h-3.6zM1406,849h3.6v3.6h-3.6zM1505,873h3.6v3.6h-3.6zM1572,853h3.6v3.6h-3.6zM1668,931h3.6v3.6h-3.6zM1699,935h3.6v3.6h-3.6zM1590,905h3.6v3.6h-3.6zM1330,827h3.6v3.6h-3.6zM1424,875h3.6v3.6h-3.6zM1720,1008h3.6v3.6h-3.6zM1476,872h3.6v3.6h-3.6zM1737,909h3.6v3.6h-3.6zM1411,879h3.6v3.6h-3.6zM1592,955h3.6v3.6h-3.6zM1700,862h3.6v3.6h-3.6zM1671,943h3.6v3.6h-3.6zM1657,988h3.6v3.6h-3.6zM1386,826h3.6v3.6h-3.6zM1642,839h3.6v3.6h-3.6zM1508,784h3.6v3.6h-3.6zM1454,861h3.6v3.6h-3.6zM1285,825h3.6v3.6h-3.6zM1322,825h3.6v3.6h-3.6zM1370,735h3.6v3.6h-3.6zM1405,881h3.6v3.6h-3.6zM1544,930h3.6v3.6h-3.6zM1518,934h3.6v3.6h-3.6zM1347,844h3.6v3.6h-3.6zM1307,773h3.6v3.6h-3.6zM1648,856h3.6v3.6h-3.6zM1591,875h3.6v3.6h-3.6zM1490,777h3.6v3.6h-3.6zM1499,857h3.6v3.6h-3.6zM1332,861h3.6v3.6h-3.6zM1611,953h3.6v3.6h-3.6zM1335,870h3.6v3.6h-3.6zM1639,983h3.6v3.6h-3.6zM1430,890h3.6v3.6h-3.6zM1368,784h3.6v3.6h-3.6zM1641,870h3.6v3.6h-3.6zM1686,890h3.6v3.6h-3.6zM1369,763h3.6v3.6h-3.6zM1508,914h3.6v3.6h-3.6zM1718,912h3.6v3.6h-3.6zM1328,839h3.6v3.6h-3.6zM1688,1013h3.6v3.6h-3.6zM1327,808h3.6v3.6h-3.6zM1453,877h3.6v3.6h-3.6zM1409,859h3.6v3.6h-3.6zM1459,911h3.6v3.6h-3.6zM1347,842h3.6v3.6h-3.6zM1651,948h3.6v3.6h-3.6zM1727,996h3.6v3.6h-3.6zM1301,796h3.6v3.6h-3.6zM1467,912h3.6v3.6h-3.6zM1523,886h3.6v3.6h-3.6zM1645,868h3.6v3.6h-3.6zM1701,843h3.6v3.6h-3.6zM1687,898h3.6v3.6h-3.6zM1421,797h3.6v3.6h-3.6zM1580,906h3.6v3.6h-3.6zM1410,815h3.6v3.6h-3.6zM1530,874h3.6v3.6h-3.6zM1746,1026h3.6v3.6h-3.6zM1555,917h3.6v3.6h-3.6zM1723,1019h3.6v3.6h-3.6zM1332,819h3.6v3.6h-3.6zM1615,934h3.6v3.6h-3.6zM1711,874h3.6v3.6h-3.6zM1689,998h3.6v3.6h-3.6zM1712,890h3.6v3.6h-3.6zM1381,831h3.6v3.6h-3.6zM1619,935h3.6v3.6h-3.6zM1590,873h3.6v3.6h-3.6zM1336,821h3.6v3.6h-3.6zM1471,921h3.6v3.6h-3.6zM1701,961h3.6v3.6h-3.6zM1453,849h3.6v3.6h-3.6zM1387,774h3.6v3.6h-3.6zM1676,968h3.6v3.6h-3.6zM1358,841h3.6v3.6h-3.6zM1683,985h3.6v3.6h-3.6zM1614,900h3.6v3.6h-3.6zM1724,1012h3.6v3.6h-3.6zM1414,861h3.6v3.6h-3.6zM1434,827h3.6v3.6h-3.6zM1409,886h3.6v3.6h-3.6zM1589,859h3.6v3.6h-3.6zM1449,871h3.6v3.6h-3.6zM1461,830h3.6v3.6h-3.6zM1725,1013h3.6v3.6h-3.6zM1595,873h3.6v3.6h-3.6zM1293,746h3.6v3.6h-3.6zM1318,870h3.6v3.6h-3.6zM1349,774h3.6v3.6h-3.6zM1494,888h3.6v3.6h-3.6zM1685,921h3.6v3.6h-3.6zM1377,858h3.6v3.6h-3.6zM1634,897h3.6v3.6h-3.6zM1585,922h3.6v3.6h-3.6zM1565,884h3.6v3.6h-3.6zM1546,894h3.6v3.6h-3.6zM1426,794h3.6v3.6h-3.6zM1511,855h3.6v3.6h-3.6zM1415,881h3.6v3.6h-3.6zM1283,844h3.6v3.6h-3.6zM1670,919h3.6v3.6h-3.6z" fill="#4a55c8"/>
<path d="M1510,813h3.6v3.6h-3.6zM1688,924h3.6v3.6h-3.6zM1319,875h3.6v3.6h-3.6zM1595,817h3.6v3.6h-3.6zM1443,901h3.6v3.6h-3.6zM1508,822h3.6v3.6h-3.6zM1304,878h3.6v3.6h-3.6zM1533,839h3.6v3.6h-3.6zM1747,957h3.6v3.6h-3.6zM1512,926h3.6v3.6h-3.6zM1305,812h3.6v3.6h-3.6zM1650,987h3.6v3.6h-3.6zM1677,936h3.6v3.6h-3.6zM1286,837h3.6v3.6h-3.6zM1743,1028h3.6v3.6h-3.6zM1392,865h3.6v3.6h-3.6zM1726,901h3.6v3.6h-3.6zM1440,763h3.6v3.6h-3.6zM1469,833h3.6v3.6h-3.6zM1347,867h3.6v3.6h-3.6zM1614,891h3.6v3.6h-3.6zM1436,848h3.6v3.6h-3.6zM1576,932h3.6v3.6h-3.6zM1364,779h3.6v3.6h-3.6zM1533,830h3.6v3.6h-3.6zM1681,979h3.6v3.6h-3.6zM1320,867h3.6v3.6h-3.6zM1362,827h3.6v3.6h-3.6zM1620,975h3.6v3.6h-3.6zM1561,845h3.6v3.6h-3.6zM1350,835h3.6v3.6h-3.6zM1501,837h3.6v3.6h-3.6zM1370,827h3.6v3.6h-3.6zM1463,817h3.6v3.6h-3.6zM1570,898h3.6v3.6h-3.6zM1726,907h3.6v3.6h-3.6zM1410,888h3.6v3.6h-3.6zM1642,989h3.6v3.6h-3.6zM1505,930h3.6v3.6h-3.6zM1317,836h3.6v3.6h-3.6zM1708,987h3.6v3.6h-3.6zM1304,854h3.6v3.6h-3.6zM1686,941h3.6v3.6h-3.6zM1611,874h3.6v3.6h-3.6zM1563,890h3.6v3.6h-3.6zM1449,872h3.6v3.6h-3.6zM1628,975h3.6v3.6h-3.6zM1752,974h3.6v3.6h-3.6zM1437,867h3.6v3.6h-3.6zM1735,874h3.6v3.6h-3.6zM1501,920h3.6v3.6h-3.6zM1421,782h3.6v3.6h-3.6zM1618,931h3.6v3.6h-3.6zM1403,803h3.6v3.6h-3.6zM1428,889h3.6v3.6h-3.6zM1669,852h3.6v3.6h-3.6zM1405,850h3.6v3.6h-3.6zM1400,869h3.6v3.6h-3.6zM1303,784h3.6v3.6h-3.6zM1431,803h3.6v3.6h-3.6zM1653,900h3.6v3.6h-3.6zM1607,892h3.6v3.6h-3.6zM1420,787h3.6v3.6h-3.6zM1447,911h3.6v3.6h-3.6zM1623,938h3.6v3.6h-3.6zM1566,922h3.6v3.6h-3.6zM1744,951h3.6v3.6h-3.6zM1385,871h3.6v3.6h-3.6zM1566,942h3.6v3.6h-3.6zM1573,919h3.6v3.6h-3.6zM1380,853h3.6v3.6h-3.6zM1433,895h3.6v3.6h-3.6zM1613,826h3.6v3.6h-3.6zM1636,894h3.6v3.6h-3.6zM1287,834h3.6v3.6h-3.6zM1534,931h3.6v3.6h-3.6zM1699,983h3.6v3.6h-3.6zM1322,762h3.6v3.6h-3.6zM1341,783h3.6v3.6h-3.6zM1362,866h3.6v3.6h-3.6zM1338,763h3.6v3.6h-3.6zM1348,741h3.6v3.6h-3.6zM1459,829h3.6v3.6h-3.6zM1741,963h3.6v3.6h-3.6zM1548,869h3.6v3.6h-3.6zM1514,930h3.6v3.6h-3.6zM1479,923h3.6v3.6h-3.6zM1722,972h3.6v3.6h-3.6zM1445,803h3.6v3.6h-3.6zM1750,1015h3.6v3.6h-3.6zM1620,976h3.6v3.6h-3.6zM1453,873h3.6v3.6h-3.6zM1573,834h3.6v3.6h-3.6zM1376,780h3.6v3.6h-3.6zM1531,819h3.6v3.6h-3.6zM1334,750h3.6v3.6h-3.6zM1419,886h3.6v3.6h-3.6zM1710,990h3.6v3.6h-3.6zM1747,972h3.6v3.6h-3.6zM1585,812h3.6v3.6h-3.6zM1707,935h3.6v3.6h-3.6zM1308,808h3.6v3.6h-3.6zM1549,827h3.6v3.6h-3.6zM1741,966h3.6v3.6h-3.6zM1671,933h3.6v3.6h-3.6zM1335,761h3.6v3.6h-3.6zM1742,1009h3.6v3.6h-3.6zM1691,911h3.6v3.6h-3.6zM1585,914h3.6v3.6h-3.6zM1587,863h3.6v3.6h-3.6zM1422,790h3.6v3.6h-3.6zM1653,930h3.6v3.6h-3.6zM1537,940h3.6v3.6h-3.6zM1522,900h3.6v3.6h-3.6zM1430,874h3.6v3.6h-3.6zM1742,927h3.6v3.6h-3.6zM1710,1015h3.6v3.6h-3.6zM1632,977h3.6v3.6h-3.6zM1669,991h3.6v3.6h-3.6zM1398,852h3.6v3.6h-3.6zM1698,863h3.6v3.6h-3.6zM1372,796h3.6v3.6h-3.6zM1398,843h3.6v3.6h-3.6zM1531,921h3.6v3.6h-3.6zM1727,1015h3.6v3.6h-3.6zM1530,806h3.6v3.6h-3.6zM1321,784h3.6v3.6h-3.6zM1689,938h3.6v3.6h-3.6zM1727,955h3.6v3.6h-3.6zM1592,871h3.6v3.6h-3.6zM1687,983h3.6v3.6h-3.6zM1716,997h3.6v3.6h-3.6zM1608,952h3.6v3.6h-3.6zM1658,852h3.6v3.6h-3.6zM1720,1018h3.6v3.6h-3.6zM1663,977h3.6v3.6h-3.6zM1364,849h3.6v3.6h-3.6zM1641,978h3.6v3.6h-3.6zM1364,860h3.6v3.6h-3.6zM1443,838h3.6v3.6h-3.6zM1639,969h3.6v3.6h-3.6zM1626,902h3.6v3.6h-3.6zM1718,903h3.6v3.6h-3.6zM1750,983h3.6v3.6h-3.6zM1553,931h3.6v3.6h-3.6zM1427,799h3.6v3.6h-3.6zM1377,835h3.6v3.6h-3.6zM1600,956h3.6v3.6h-3.6zM1633,905h3.6v3.6h-3.6zM1463,834h3.6v3.6h-3.6zM1500,853h3.6v3.6h-3.6zM1288,847h3.6v3.6h-3.6zM1655,952h3.6v3.6h-3.6zM1561,877h3.6v3.6h-3.6zM1528,939h3.6v3.6h-3.6zM1597,928h3.6v3.6h-3.6zM1353,776h3.6v3.6h-3.6zM1648,987h3.6v3.6h-3.6zM1682,900h3.6v3.6h-3.6zM1442,875h3.6v3.6h-3.6zM1729,938h3.6v3.6h-3.6zM1721,1013h3.6v3.6h-3.6zM1553,852h3.6v3.6h-3.6zM1442,872h3.6v3.6h-3.6zM1347,845h3.6v3.6h-3.6zM1515,934h3.6v3.6h-3.6zM1299,708h3.6v3.6h-3.6zM1745,907h3.6v3.6h-3.6zM1458,802h3.6v3.6h-3.6zM1322,850h3.6v3.6h-3.6zM1676,937h3.6v3.6h-3.6zM1575,945h3.6v3.6h-3.6zM1744,929h3.6v3.6h-3.6zM1499,854h3.6v3.6h-3.6zM1380,773h3.6v3.6h-3.6zM1709,1002h3.6v3.6h-3.6zM1425,887h3.6v3.6h-3.6zM1679,852h3.6v3.6h-3.6zM1705,1009h3.6v3.6h-3.6zM1352,881h3.6v3.6h-3.6zM1397,787h3.6v3.6h-3.6zM1721,1011h3.6v3.6h-3.6zM1450,905h3.6v3.6h-3.6zM1321,874h3.6v3.6h-3.6zM1726,882h3.6v3.6h-3.6zM1359,798h3.6v3.6h-3.6zM1697,923h3.6v3.6h-3.6zM1321,852h3.6v3.6h-3.6zM1679,908h3.6v3.6h-3.6zM1423,779h3.6v3.6h-3.6zM1736,944h3.6v3.6h-3.6zM1634,934h3.6v3.6h-3.6zM1531,941h3.6v3.6h-3.6zM1323,814h3.6v3.6h-3.6zM1322,778h3.6v3.6h-3.6zM1318,824h3.6v3.6h-3.6zM1595,957h3.6v3.6h-3.6zM1564,937h3.6v3.6h-3.6zM1512,843h3.6v3.6h-3.6z" fill="#4a6ad8"/>
<path d="M1522,796h3.6v3.6h-3.6zM1578,959h3.6v3.6h-3.6zM1600,929h3.6v3.6h-3.6zM1729,975h3.6v3.6h-3.6zM1551,948h3.6v3.6h-3.6zM1696,987h3.6v3.6h-3.6zM1587,966h3.6v3.6h-3.6zM1710,861h3.6v3.6h-3.6zM1634,976h3.6v3.6h-3.6zM1739,993h3.6v3.6h-3.6zM1488,900h3.6v3.6h-3.6zM1748,1026h3.6v3.6h-3.6zM1559,950h3.6v3.6h-3.6zM1751,1045h3.6v3.6h-3.6zM1490,847h3.6v3.6h-3.6zM1656,865h3.6v3.6h-3.6zM1696,899h3.6v3.6h-3.6zM1532,903h3.6v3.6h-3.6zM1705,914h3.6v3.6h-3.6zM1510,869h3.6v3.6h-3.6zM1661,971h3.6v3.6h-3.6zM1503,837h3.6v3.6h-3.6zM1512,932h3.6v3.6h-3.6zM1730,982h3.6v3.6h-3.6zM1494,795h3.6v3.6h-3.6zM1487,830h3.6v3.6h-3.6zM1489,880h3.6v3.6h-3.6zM1600,948h3.6v3.6h-3.6zM1682,1005h3.6v3.6h-3.6zM1487,876h3.6v3.6h-3.6zM1608,870h3.6v3.6h-3.6zM1540,938h3.6v3.6h-3.6zM1603,963h3.6v3.6h-3.6zM1611,951h3.6v3.6h-3.6zM1532,893h3.6v3.6h-3.6zM1505,914h3.6v3.6h-3.6zM1630,898h3.6v3.6h-3.6zM1618,967h3.6v3.6h-3.6zM1618,924h3.6v3.6h-3.6zM1664,969h3.6v3.6h-3.6zM1542,831h3.6v3.6h-3.6zM1612,908h3.6v3.6h-3.6zM1691,945h3.6v3.6h-3.6zM1592,830h3.6v3.6h-3.6zM1561,916h3.6v3.6h-3.6zM1672,910h3.6v3.6h-3.6zM1547,909h3.6v3.6h-3.6zM1473,842h3.6v3.6h-3.6zM1590,966h3.6v3.6h-3.6zM1550,928h3.6v3.6h-3.6zM1515,898h3.6v3.6h-3.6zM1705,988h3.6v3.6h-3.6zM1641,995h3.6v3.6h-3.6zM1522,939h3.6v3.6h-3.6zM1618,959h3.6v3.6h-3.6zM1584,930h3.6v3.6h-3.6zM1582,922h3.6v3.6h-3.6zM1629,987h3.6v3.6h-3.6zM1507,867h3.6v3.6h-3.6zM1697,903h3.6v3.6h-3.6zM1716,918h3.6v3.6h-3.6zM1572,921h3.6v3.6h-3.6zM1594,961h3.6v3.6h-3.6zM1651,974h3.6v3.6h-3.6zM1681,988h3.6v3.6h-3.6zM1713,915h3.6v3.6h-3.6zM1686,999h3.6v3.6h-3.6zM1559,886h3.6v3.6h-3.6zM1473,822h3.6v3.6h-3.6zM1701,995h3.6v3.6h-3.6zM1692,965h3.6v3.6h-3.6zM1466,822h3.6v3.6h-3.6zM1676,926h3.6v3.6h-3.6zM1739,1019h3.6v3.6h-3.6zM1679,952h3.6v3.6h-3.6zM1697,992h3.6v3.6h-3.6zM1578,902h3.6v3.6h-3.6zM1747,991h3.6v3.6h-3.6zM1646,979h3.6v3.6h-3.6zM1634,963h3.6v3.6h-3.6zM1536,869h3.6v3.6h-3.6zM1677,1008h3.6v3.6h-3.6zM1617,977h3.6v3.6h-3.6zM1686,892h3.6v3.6h-3.6zM1679,994h3.6v3.6h-3.6zM1693,957h3.6v3.6h-3.6zM1661,965h3.6v3.6h-3.6zM1551,897h3.6v3.6h-3.6zM1463,907h3.6v3.6h-3.6zM1484,819h3.6v3.6h-3.6zM1720,931h3.6v3.6h-3.6zM1663,837h3.6v3.6h-3.6zM1631,937h3.6v3.6h-3.6zM1590,967h3.6v3.6h-3.6zM1737,983h3.6v3.6h-3.6zM1695,987h3.6v3.6h-3.6zM1730,870h3.6v3.6h-3.6zM1522,855h3.6v3.6h-3.6zM1583,947h3.6v3.6h-3.6zM1628,932h3.6v3.6h-3.6zM1697,989h3.6v3.6h-3.6zM1656,841h3.6v3.6h-3.6zM1655,916h3.6v3.6h-3.6zM1693,998h3.6v3.6h-3.6zM1514,822h3.6v3.6h-3.6zM1691,948h3.6v3.6h-3.6zM1507,791h3.6v3.6h-3.6zM1682,910h3.6v3.6h-3.6zM1734,943h3.6v3.6h-3.6zM1573,882h3.6v3.6h-3.6zM1468,889h3.6v3.6h-3.6zM1717,958h3.6v3.6h-3.6zM1692,990h3.6v3.6h-3.6z" fill="#4f86e8"/>
<path d="M1648,930h3.6v3.6h-3.6zM1599,911h3.6v3.6h-3.6zM1697,853h3.6v3.6h-3.6zM1547,933h3.6v3.6h-3.6zM1606,837h3.6v3.6h-3.6zM1524,914h3.6v3.6h-3.6zM1603,970h3.6v3.6h-3.6zM1682,990h3.6v3.6h-3.6zM1600,928h3.6v3.6h-3.6zM1505,795h3.6v3.6h-3.6zM1742,998h3.6v3.6h-3.6zM1582,835h3.6v3.6h-3.6zM1609,944h3.6v3.6h-3.6zM1560,952h3.6v3.6h-3.6zM1509,902h3.6v3.6h-3.6zM1614,961h3.6v3.6h-3.6zM1469,886h3.6v3.6h-3.6zM1505,884h3.6v3.6h-3.6zM1658,978h3.6v3.6h-3.6zM1489,841h3.6v3.6h-3.6zM1739,915h3.6v3.6h-3.6zM1511,790h3.6v3.6h-3.6zM1660,943h3.6v3.6h-3.6zM1626,918h3.6v3.6h-3.6zM1747,876h3.6v3.6h-3.6zM1676,868h3.6v3.6h-3.6zM1588,889h3.6v3.6h-3.6zM1727,893h3.6v3.6h-3.6zM1703,865h3.6v3.6h-3.6zM1681,995h3.6v3.6h-3.6zM1607,939h3.6v3.6h-3.6zM1672,1009h3.6v3.6h-3.6zM1720,1015h3.6v3.6h-3.6zM1474,881h3.6v3.6h-3.6zM1560,836h3.6v3.6h-3.6zM1555,866h3.6v3.6h-3.6zM1732,965h3.6v3.6h-3.6zM1578,947h3.6v3.6h-3.6zM1561,927h3.6v3.6h-3.6zM1528,923h3.6v3.6h-3.6zM1585,931h3.6v3.6h-3.6zM1527,888h3.6v3.6h-3.6zM1673,986h3.6v3.6h-3.6zM1626,926h3.6v3.6h-3.6zM1516,857h3.6v3.6h-3.6zM1710,963h3.6v3.6h-3.6zM1519,854h3.6v3.6h-3.6zM1524,815h3.6v3.6h-3.6zM1604,954h3.6v3.6h-3.6zM1587,844h3.6v3.6h-3.6zM1631,967h3.6v3.6h-3.6zM1684,967h3.6v3.6h-3.6zM1508,902h3.6v3.6h-3.6zM1734,1024h3.6v3.6h-3.6zM1632,925h3.6v3.6h-3.6zM1692,862h3.6v3.6h-3.6zM1510,919h3.6v3.6h-3.6zM1727,958h3.6v3.6h-3.6zM1518,925h3.6v3.6h-3.6zM1556,945h3.6v3.6h-3.6zM1550,938h3.6v3.6h-3.6zM1494,911h3.6v3.6h-3.6zM1625,925h3.6v3.6h-3.6zM1741,884h3.6v3.6h-3.6zM1566,883h3.6v3.6h-3.6zM1689,938h3.6v3.6h-3.6zM1511,841h3.6v3.6h-3.6zM1744,922h3.6v3.6h-3.6zM1665,931h3.6v3.6h-3.6zM1636,870h3.6v3.6h-3.6zM1485,864h3.6v3.6h-3.6zM1529,942h3.6v3.6h-3.6zM1609,973h3.6v3.6h-3.6zM1695,946h3.6v3.6h-3.6zM1550,942h3.6v3.6h-3.6zM1745,1030h3.6v3.6h-3.6zM1631,959h3.6v3.6h-3.6zM1715,950h3.6v3.6h-3.6zM1625,919h3.6v3.6h-3.6zM1469,844h3.6v3.6h-3.6zM1541,811h3.6v3.6h-3.6zM1573,933h3.6v3.6h-3.6zM1640,940h3.6v3.6h-3.6zM1570,951h3.6v3.6h-3.6zM1605,888h3.6v3.6h-3.6zM1576,948h3.6v3.6h-3.6zM1638,825h3.6v3.6h-3.6zM1682,888h3.6v3.6h-3.6zM1732,952h3.6v3.6h-3.6zM1651,936h3.6v3.6h-3.6zM1701,996h3.6v3.6h-3.6zM1742,928h3.6v3.6h-3.6zM1703,871h3.6v3.6h-3.6zM1574,833h3.6v3.6h-3.6zM1594,940h3.6v3.6h-3.6zM1676,985h3.6v3.6h-3.6zM1700,967h3.6v3.6h-3.6zM1481,894h3.6v3.6h-3.6zM1676,934h3.6v3.6h-3.6zM1675,948h3.6v3.6h-3.6zM1664,853h3.6v3.6h-3.6zM1653,980h3.6v3.6h-3.6z" fill="#5fa0f0"/>
<g>
<defs><linearGradient id="gWs" x1="0" y1="0" x2="0" y2="1"><stop offset="0" stop-color="#c4c5c6"/><stop offset=".4" stop-color="#a9aaab"/><stop offset=".55" stop-color="#5e5f61"/><stop offset="1" stop-color="#78797b"/></linearGradient>
<linearGradient id="gCamL" x1="0" y1="0" x2="1" y2="1"><stop offset="0" stop-color="#b9babb"/><stop offset=".35" stop-color="#7d7e80"/><stop offset=".5" stop-color="#dedfe0"/><stop offset=".7" stop-color="#6c6d6f"/><stop offset="1" stop-color="#8a8b8d"/></linearGradient>
<linearGradient id="gCamC" x1="0" y1="0" x2="0" y2="1"><stop offset="0" stop-color="#b0b1b2"/><stop offset=".5" stop-color="#858688"/><stop offset="1" stop-color="#77787a"/></linearGradient>
<linearGradient id="gCamR" x1="0" y1="0" x2="1" y2="1"><stop offset="0" stop-color="#8f9091"/><stop offset=".3" stop-color="#6f7072"/><stop offset=".6" stop-color="#a5a6a7"/><stop offset="1" stop-color="#d5d6d7"/></linearGradient></defs>
<path d="M883,962 Q885,950 890,948 L908.5,945.5 L909.6,1005.8 L889,999 Q883,990 883,962 Z" fill="url(#gCamL)"/>
<path d="M924.8,945 Q950,938.5 976,941.6 L976.7,968.5 Q950,966 925.4,969.6 Z" fill="url(#gCamC)"/>
<path d="M996.4,942.5 L1023.5,946 Q1034,952 1037,960 L1038,987.7 Q1034,998 1024.6,1002.3 L1024,973 L996.4,967.4 Z" fill="url(#gCamR)"/>
<path d="M961,973 L963,984 M965,970 L971,984" stroke="#222" stroke-width="1.2" fill="none"/>
<path d="M965,970 L970,980" stroke="#4a6ae0" stroke-width="2.4" fill="none"/>
<path d="M918.6,992 Q922,984 930,982 L940,984 L942,1032 L934,1068 L926,1050 Z" fill="#e9e9ea" stroke="#222" stroke-width="1.4"/>
<path d="M924,990 Q927,985 932,986 L938,1030 L934,1046 L928,1030 Z" fill="#3a3a3c"/>
<path d="M914,992 L922,990 L922,998 L915,998 Z" fill="#3a3c3a"/>
<path d="M930,982 Q934,980 940,980 L988,977.5 Q994,979 996,983 L1010,985 L940,987 Z" fill="#e4e5e6" stroke="#222" stroke-width="1.2"/>
<path d="M938.9,987 Q975,983 1012,984.5 Q1016,985 1016.7,990 L1016.7,1021.5 Q996,1034 972.8,1037.3 Q955,1036 941.2,1028.3 Z" fill="url(#gWs)" stroke="#222" stroke-width="1.2"/>
<path d="M941.2,1028.3 Q955,1037 972.8,1038.5 Q996,1035 1016.7,1022.5 L1014.5,1070 Q1012,1077 1004,1078 L946,1081 Q936,1078 933,1066.6 L938,1040 Z" fill="#c9cacc" stroke="#222" stroke-width="1.2"/>
<path d="M956,1040 L998,1036 L997,1046 L956,1050 Z M946,1044 Q950,1056 972,1056 Q1000,1054 1006,1036" fill="none" stroke="#333" stroke-width="1"/>
<circle cx="953" cy="1069" r="2.2" fill="none" stroke="#333" stroke-width="1"/><circle cx="999" cy="1066.5" r="2.2" fill="none" stroke="#333" stroke-width="1"/>
<rect x="971" y="1069" width="10" height="3.4" fill="#444"/>
<path d="M935,1070 L944,1074 L944,1084 L936,1084 Z" fill="#3a3a3c"/><path d="M1003,1074 L1013,1070 L1013,1080 L1004,1081 Z" fill="#3a3a3c"/>
</g>
</svg>
<div class="abs" style="left:1560px;top:20px;width:60px;height:60px;background:#fff;border-radius:4px;box-shadow:0 2px 8px rgba(0,0,0,.18),0 1px 2px rgba(0,0,0,.12)"></div>
<div class="abs" style="left:1560px;top:100px;width:60px;height:120px;background:#fff;border-radius:4px;box-shadow:0 2px 8px rgba(0,0,0,.18),0 1px 2px rgba(0,0,0,.12)"></div>
<div class="abs" style="left:1560px;top:240px;width:60px;height:60px;background:#fff;border-radius:4px;box-shadow:0 2px 8px rgba(0,0,0,.18),0 1px 2px rgba(0,0,0,.12)"></div>
<svg style="left:0;top:0" width="1640" height="886" viewBox="112 565 1640 886" fill="none" stroke="#333" stroke-width="2.2" stroke-linejoin="round" stroke-linecap="round">
<path d="M1692.4,600.2 L1717,619.4 L1701.6,621.8 L1693.8,630.2 Z"/>
<g transform="translate(1701.8,755.4) rotate(-40.5)"><rect x="-15.6" y="-6" width="31.2" height="12" rx="2"/><path d="M-10,-6 v4.2 M-5,-6 v5.8 M0,-6 v4.2 M5,-6 v5.8 M10,-6 v4.2" stroke-width="1.8"/></g>
<rect x="1694.2" y="827.4" width="15.4" height="15.4" rx="3.4" fill="#3a3a3c" stroke="none"/>
<polyline points="1689,830.6 1684.6,835 1689,839.4"/><polyline points="1714.8,830.6 1719.2,835 1714.8,839.4"/><polyline points="1697.4,822.2 1701.8,817.8 1706.2,822.2"/><polyline points="1697.4,847.8 1701.8,852.2 1706.2,847.8"/>
</svg>
<div class="t" style="left:1577.6px;top:120.3px;font-size:19.5px;font-weight:700;color:#4aa3e8;letter-spacing:-.3px">3D</div>
</div>
<!-- SIDEBAR -->
<div class="abs" id="sb" style="left:1644px;top:88px;width:756px;height:1289px;background:#fff;overflow:hidden">
<div class="t" style="left:20.6px;top:17.5px;font-size:23.5px;font-weight:700;color:#77777c;letter-spacing:-.75px">Variables</div>
<div class="t" style="left:148.8px;top:17.5px;font-size:23.5px;font-weight:700;color:#77777c;letter-spacing:-.95px">Layout History</div>
<div class="t" style="left:332.4px;top:17.5px;font-size:23.5px;font-weight:700;color:#27272b;letter-spacing:-1.15px">Events</div>
<div class="abs" style="left:0;top:59.5px;width:756px;height:2px;background:#dcdcdc"></div>
<div class="abs" style="left:326px;top:56px;width:82.4px;height:5px;background:#4a3bd8"></div>
<svg style="left:716px;top:20px" width="20" height="20" viewBox="-10 -10 20 20"><path d="M-8,-8 L8,8 M8,-8 L-8,8" stroke="#4a4a4f" stroke-width="2.4" fill="none"/></svg>
<div class="abs" style="left:8.4px;top:70px;width:739.6px;height:58.4px;border-radius:5px;background:#f0f0f0"></div>
<div class="t" style="left:24.8px;top:86.5px;font-size:24px;color:#7a7a80;letter-spacing:.66px">All event types</div>
<div class="abs" style="left:8.4px;top:137px;width:739.6px;height:58.4px;border-radius:5px;background:#f0f0f0"></div>
<svg style="left:24px;top:150px" width="32" height="32" viewBox="1780 314 32 32" fill="none" stroke="#6b6b6f" stroke-width="2.5"><circle cx="1793.3" cy="326.5" r="8"/><path d="M1799.4,332.6 L1808,341.2" stroke-width="3"/></svg>
<div class="t" style="left:74.6px;top:152.5px;font-size:24px;color:#7a7a80;letter-spacing:.54px">Filter by key, label, or value</div>
<div class="abs" style="left:0;top:203px;width:756px;height:2px;background:#dcdcdc"></div>
<div class="abs" style="left:743.5px;top:205px;width:12.5px;height:1084px;background:#fafafa"></div>
<div class="abs" style="left:743.5px;top:205px;width:12.5px;height:1025px;background:#dfdfdf"></div>
<div class="abs" style="left:15.8px;top:223.6px;width:20px;height:20px;border-radius:50%;background:#9db6ee"></div>
<div class="row" style="left:48.5px;top:222.3px;font-weight:700;color:#27272b;font-size:24.5px;letter-spacing:-.5px">Event</div>
<div class="row k" style="left:48.5px;top:261.8px;letter-spacing:0.78px">Start time</div>
<div class="row v" style="left:309.8px;top:261.8px;letter-spacing:1.0px">12:16:05.654 PDT</div>
<div class="row k" style="left:48.5px;top:297.8px;letter-spacing:0.8px">Duration</div>
<div class="row v" style="left:309.8px;top:297.8px;letter-spacing:0.9px">19s</div>
<div class="row k" style="left:48.5px;top:345.5px;letter-spacing:0.83px">Rain</div>
<div class="row v" style="left:309.8px;top:345.5px;letter-spacing:0.9px">true</div>
<div class="row k" style="left:48.5px;top:381.1px;letter-spacing:0.83px">city</div>
<div class="row v" style="left:309.8px;top:381.1px;letter-spacing:0.9px">boston-seaport</div>
<div class="row k" style="left:48.5px;top:416.7px;letter-spacing:0.83px">nuscene</div>
<div class="row v" style="left:309.8px;top:416.7px;letter-spacing:0.9px">scene-0913</div>
<div class="row k" style="left:48.5px;top:452.3px;letter-spacing:0.83px">barriers</div>
<div class="row v" style="left:309.8px;top:452.3px;letter-spacing:0.9px">true</div>
<div class="row k" style="left:48.5px;top:487.9px;letter-spacing:0.83px">category</div>
<div class="row v" style="left:309.8px;top:487.9px;letter-spacing:0.9px">scene_description</div>
<div class="row k" style="left:48.5px;top:523.5px;letter-spacing:0.83px">parked cars</div>
<div class="row v" style="left:309.8px;top:523.5px;letter-spacing:0.9px">true</div>
<div class="row k" style="left:48.5px;top:559.1px;letter-spacing:0.83px">parking lot</div>
<div class="row v" style="left:309.8px;top:559.1px;letter-spacing:0.9px">true</div>
<div class="row k" style="left:48.5px;top:594.7px;letter-spacing:0.83px">parked buses</div>
<div class="row v" style="left:309.8px;top:594.7px;letter-spacing:0.9px">true</div>
<div class="row k" style="left:48.5px;top:630.3px;letter-spacing:0.83px">semi trailers</div>
<div class="row v" style="left:309.8px;top:630.3px;letter-spacing:0.9px">true</div>
<div class="row k" style="left:48.5px;top:665.9px;letter-spacing:0.83px">construction vehicle</div>
<div class="row v" style="left:309.8px;top:665.9px;letter-spacing:0.9px">true</div>
<div class="abs" style="left:0;top:712px;width:743.5px;height:2px;background:#dcdcdc"></div>
<div class="abs" style="left:15.8px;top:732.6px;width:20px;height:20px;border-radius:50%;background:#ea7761"></div>
<div class="row" style="left:48.5px;top:731.3px;font-weight:700;color:#27272b;font-size:24.5px;letter-spacing:-.5px">Disengagement</div>
<div class="row k" style="left:48.5px;top:770.5px;letter-spacing:0.78px">Start time</div>
<div class="row v" style="left:309.8px;top:770.5px;letter-spacing:1.0px">12:16:07.840 PDT</div>
<div class="row k" style="left:48.5px;top:806.1px;letter-spacing:0.8px">Duration</div>
<div class="row v" style="left:309.8px;top:806.1px;letter-spacing:0.9px">0s</div>
<div class="row k" style="left:48.5px;top:854.1px;letter-spacing:0.8px">Severity</div>
<div class="row v" style="left:309.8px;top:854.1px;letter-spacing:0.9px">low</div>
<div class="row k" style="left:48.5px;top:889.7px;letter-spacing:0.8px">Site ID</div>
<div class="row v" style="left:309.8px;top:889.7px;letter-spacing:0.9px">SEA-12</div>
<div class="row k" style="left:48.5px;top:925.3px;letter-spacing:0.8px">Subsystems</div>
<div class="row v" style="left:309.8px;top:925.3px;letter-spacing:0.9px">Localization</div>
<div class="abs" style="left:0;top:971.3px;width:743.5px;height:2px;background:#dcdcdc"></div>
<div class="abs" style="left:15.8px;top:991.9px;width:20px;height:20px;border-radius:50%;background:#e8b33e"></div>
<div class="row" style="left:48.5px;top:990.6px;font-weight:700;color:#27272b;font-size:24.5px;letter-spacing:-.5px">Operator Comment</div>
<div class="row k" style="left:48.5px;top:1030.3px;letter-spacing:0.78px">Start time</div>
<div class="row v" style="left:309.8px;top:1030.3px;letter-spacing:1.0px">12:16:11.029 PDT</div>
<div class="row k" style="left:48.5px;top:1065.9px;letter-spacing:0.8px">Duration</div>
<div class="row v" style="left:309.8px;top:1065.9px;letter-spacing:0.9px">683ms</div>
<div class="row k" style="left:48.5px;top:1113.9px;letter-spacing:0.8px">Comment</div>
<div class="row v" style="left:309.8px;top:1113.9px;letter-spacing:0.6px">Vehicle is operating in crowded en...</div>
<div class="abs" style="left:0;top:1160px;width:743.5px;height:2px;background:#dcdcdc"></div>
<div class="abs" style="left:15.8px;top:1180.6px;width:20px;height:20px;border-radius:50%;background:#9db6ee"></div>
<div class="row" style="left:48.5px;top:1179.3px;font-weight:700;color:#27272b;font-size:24.5px;letter-spacing:-.5px">Teleoperation</div>
<div class="row k" style="left:48.5px;top:1218.8px;letter-spacing:0.78px">Start time</div>
<div class="row v" style="left:309.8px;top:1218.8px;letter-spacing:1.0px">12:16:11.325 PDT</div>
<div class="row k" style="left:48.5px;top:1254.4px;letter-spacing:0.8px">Duration</div>
<div class="row v" style="left:309.8px;top:1254.4px;letter-spacing:0.9px">860ms</div>
</div>
<!-- BOTTOM (win coords) -->
<div class="abs" style="left:0;top:1375px;width:2400px;height:2.5px;background:#d9d9d9"></div>
<div class="abs" style="left:0;top:1377.5px;width:2400px;height:222.5px;background:#fff"></div>
<svg style="left:0;top:1377px" width="2400" height="223" viewBox="112 1453 2400 223">
 <defs><linearGradient id="fadeL" x1="0" x2="1" y1="0" y2="0"><stop offset="0" stop-color="#fff" stop-opacity="1"/><stop offset="1" stop-color="#fff" stop-opacity="0"/></linearGradient></defs>
 <rect x="126" y="1485.3" width="2318.5" height="46.5" fill="#f4f4f5"/>
 <rect x="126" y="1531.6" width="2318.5" height="22" fill="#9db8ee"/>
 <rect x="126" y="1552" width="2318.5" height="2" fill="#b9ccf2"/>
 <rect x="126" y="1531.6" width="32" height="22" fill="url(#fadeL)"/>
 <rect x="126" y="1553.6" width="2225.4" height="12.2" fill="#b0afb5"/>
 <rect x="2351.4" y="1553.6" width="93.1" height="12.2" fill="#dedede"/>
 <rect x="800" y="1488.6" width="102" height="18.6" fill="#a3bbee"/>
 <rect x="765" y="1509.6" width="82" height="20.6" fill="#e8b33e"/>
 <polygon points="386.9,1508.8 398,1520 386.9,1531.2 375.8,1520" fill="#ec7a63"/>
 <rect x="735" y="1474" width="4" height="103.6" rx="2" fill="#2b2b30"/>
 <!-- collapse icon -->
 <g fill="none" stroke="#6f6f73" stroke-width="2.6" stroke-linecap="round" stroke-linejoin="round">
  <polyline points="2468.6,1533.6 2474.2,1539.4 2479.8,1533.6"/>
  <polyline points="2468.6,1554.2 2474.2,1548.4 2479.8,1554.2"/>
 </g>
 <!-- left icons -->
 <g fill="none" stroke="#6f6f73" stroke-linejoin="round" stroke-linecap="round">
  <path d="M148.4,1614.8 H168.8 V1635.8 L158.6,1642 L148.4,1635.8 Z" stroke-width="3"/>
  <circle cx="227" cy="1628.8" r="14.8" stroke-width="1.8"/>
  <path d="M227,1626.6 V1636.4" stroke-width="2"/>
  <circle cx="227" cy="1622" r="1.5" fill="#6f6f73" stroke="none"/>
  <path d="M283,1628 V1620 Q283,1616.8 286.2,1616.8 H303.8 Q307,1616.8 307,1620 V1628" stroke-width="2"/>
  <path d="M285.6,1638 H304.4" stroke-width="2" stroke-dasharray="3.6,3.8"/>
  <polyline points="284.6,1633.8 280.6,1638 284.6,1642.2" stroke-width="2"/>
  <polyline points="305.4,1633.8 309.4,1638 305.4,1642.2" stroke-width="2"/>
 </g>
 <!-- playback -->
 <g fill="none" stroke="#66666a" stroke-width="2.2" stroke-linejoin="round" stroke-linecap="round">
  <path d="M1223,1616 V1642"/>
  <path d="M1229.6,1628.9 L1248.6,1616.6 V1641.2 Z"/>
  <path d="M1303.4,1616.4 L1326.4,1628.9 L1303.4,1641.4 Z"/>
  <path d="M1375.2,1616.6 L1394.2,1628.9 L1375.2,1641.2 Z"/>
  <path d="M1401,1616 V1642"/>
 </g>
 <!-- loop -->
 <g fill="none" stroke="#4636c9" stroke-width="2.2" stroke-linejoin="round" stroke-linecap="round">
  <path d="M2316.4,1634.6 Q2313.6,1631.6 2314.6,1627 Q2316.4,1619.8 2324,1619.8 H2339"/>
  <polyline points="2334,1614.9 2339.6,1619.8 2334,1625"/>
  <path d="M2343.4,1623 Q2346.4,1626.2 2345.4,1630.8 Q2343.6,1638.2 2336,1638.2 H2321.4"/>
  <polyline points="2326.6,1633 2320.8,1638.2 2326.6,1643.2"/>
 </g>
 <polygon points="2446.6,1625.9 2461.9,1625.9 2454.3,1633.7" fill="#333"/>
</svg>
<div class="t mono" style="left:238px;top:1541px;font-size:23.5px;color:#333338"><i>2</i><i>0</i><i>2</i><i>3</i><i>-</i><i>0</i><i>8</i><i>-</i><i>1</i><i>8</i><i>&nbsp;</i><i>1</i><i>2</i><i>:</i><i>1</i><i>6</i><i>:</i><i>1</i><i>0</i><i>.</i><i>7</i><i>9</i><i>1</i><i>&nbsp;</i><i>P</i><i>D</i><i>T</i></div>
<div class="t" style="left:2289.5px;top:1540.5px;font-size:24px;font-weight:700;color:#333338;letter-spacing:-.4px">1×</div>
</div>
</body></html>
